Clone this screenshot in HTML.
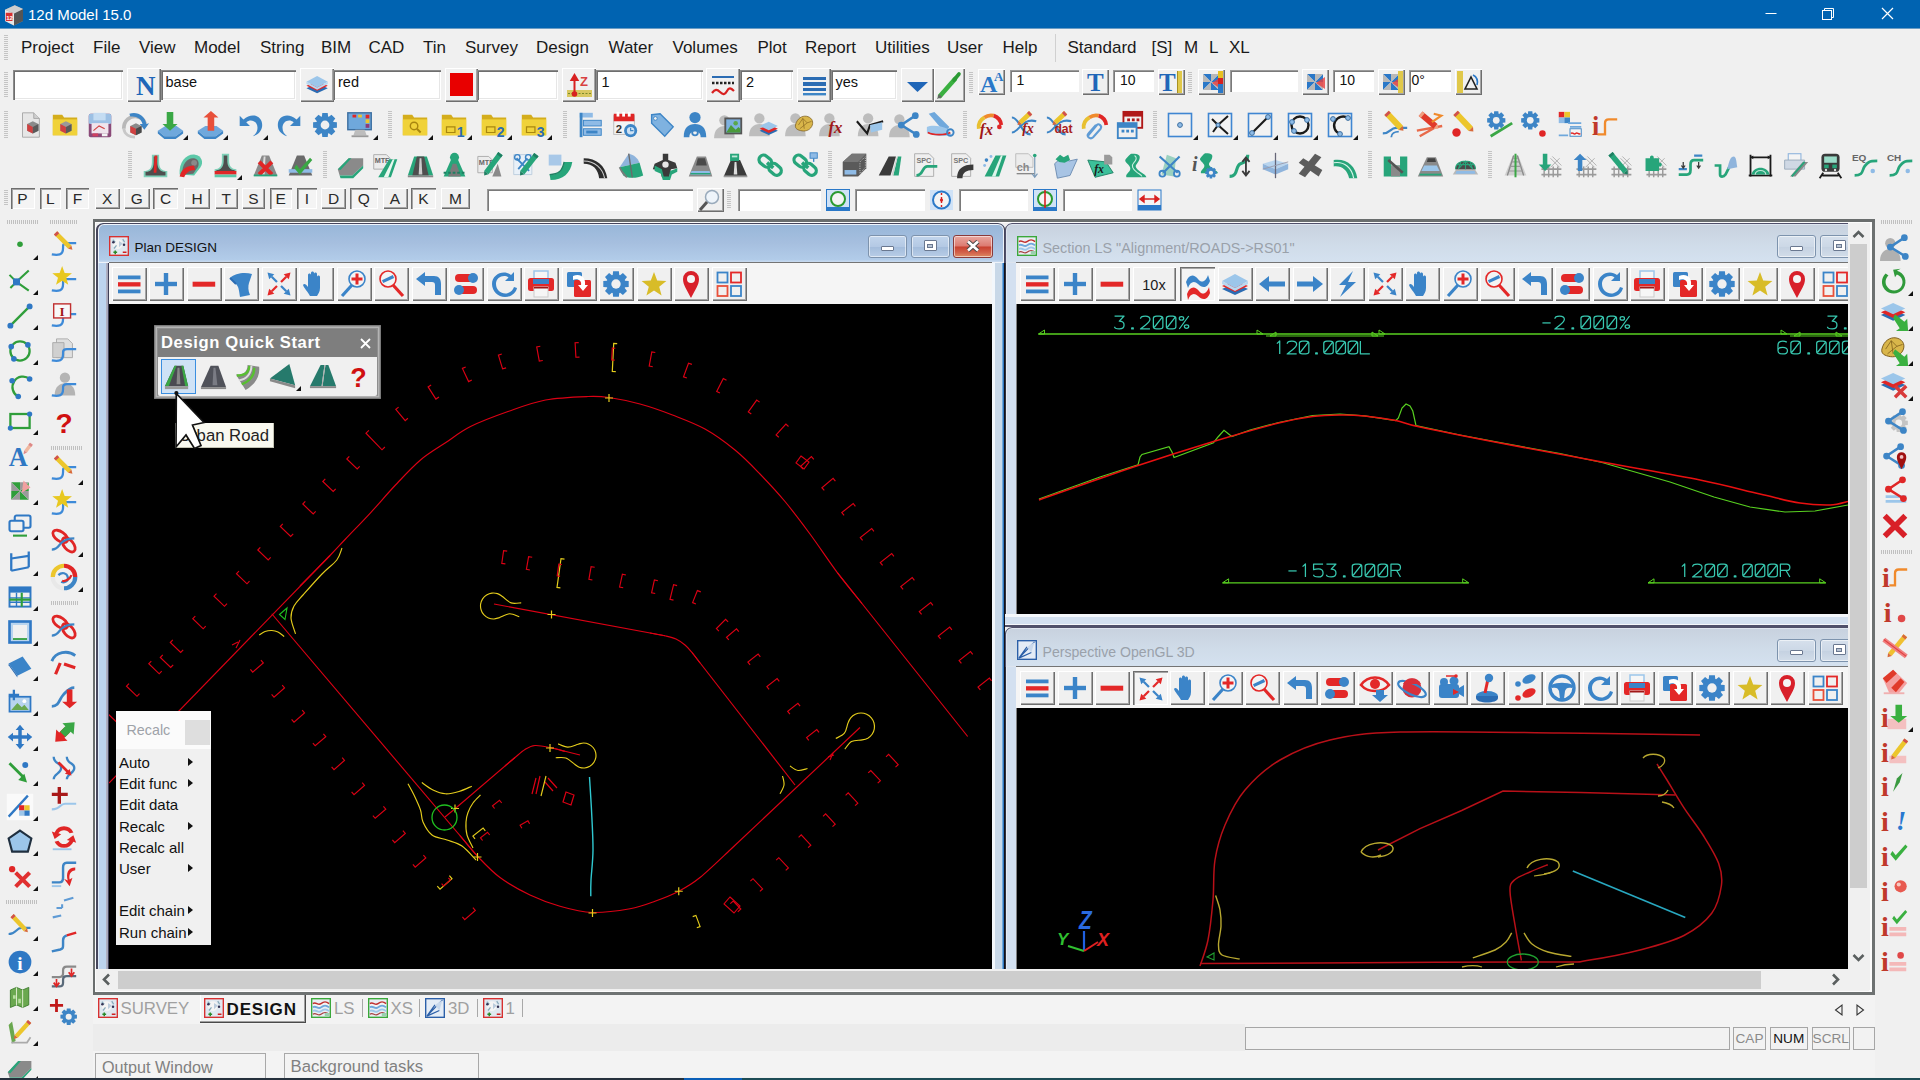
<!DOCTYPE html>
<html><head><meta charset="utf-8"><title>12d Model 15.0</title><style>
*{box-sizing:border-box}
html,body{margin:0;padding:0;overflow:hidden}
body{width:1920px;height:1080px;position:relative;overflow:hidden;background:#f0f0f0;font-family:"Liberation Sans",sans-serif;color:#111}
.a{position:absolute}
.t{position:absolute;white-space:nowrap;line-height:1}
.rb{position:absolute;background:#f0f0f0;box-shadow:inset 1px 1px #fff,inset -1px -1px #6e6e6e,inset -2px -2px #a5a5a5}
.pb{position:absolute;background:#f4f4f4;box-shadow:inset 1px 1px #6e6e6e,inset 2px 2px #a5a5a5,inset -1px -1px #fff}
.sf{position:absolute;background:#fff;box-shadow:inset 1px 1px #8a8a8a,inset 2px 2px #6e6e6e,inset -1px -1px #fff,inset -2px -2px #e6e6e6}
.sf2{position:absolute;background:#fff;box-shadow:inset 1px 1px #9a9a9a,inset 2px 2px #7a7a7a,inset -1px -1px #fff}
.gv{position:absolute;width:4px;background:repeating-linear-gradient(to bottom,#c4c4c4 0 1px,transparent 1px 2px)}
.gh{position:absolute;height:4px;background:repeating-linear-gradient(to right,#c0c0c0 0 1px,transparent 1px 2px)}
.ic{position:absolute;width:32px;height:32px;overflow:visible}
.dd{position:absolute;width:0;height:0;border-left:5px solid transparent;border-bottom:5px solid #111}
.win{position:absolute;border-radius:7px 7px 0 0;}
.wt{position:absolute;white-space:nowrap;line-height:1}
.cap{position:absolute;border-radius:3px;border:1px solid #7d93ad;box-shadow:inset 0 0 0 1px rgba(255,255,255,.55)}
svg{display:block}
</style></head><body>
<div class="a" style="left:0;top:0;width:1920px;height:28px;background:#0063b1"></div>
<div class="a" style="left:0;top:28px;width:1920px;height:1px;background:#6a9cc4"></div>
<svg class="a" style="left:2px;top:3px" width="24" height="24" viewBox="0 0 32 32"><path d="M4 9l13-6 11 5v16l-12 6-12-6z" fill="#9a9a9a" /><path d="M4 9l12 5v16L4 24z" fill="#e8e8e8" /><path d="M16 14l12-6v16l-12 6z" fill="#555" /><path d="M4 9l13-6 11 5-12 6z" fill="#cfcfcf" /><rect x="5" y="13" width="9" height="11" fill="#d83030"/><text x="5.5" y="22" font-family="Liberation Sans" font-size="8" font-weight="bold" font-style="normal" fill="#fff" text-anchor="start">12</text></svg>
<div class="t" style="left:28px;top:7px;font-size:15px;color:#fff">12d Model 15.0</div>
<svg class="a" style="left:1740px;top:0" width="180" height="29"><path d="M25.5 13.5h11" stroke="#fff" stroke-width="1" fill="none"/><rect x="82.5" y="10.5" width="9" height="9" fill="none" stroke="#fff"/><path d="M84.5 10.5v-2h9v9h-2" fill="none" stroke="#fff"/><path d="M142 8l11 11M153 8l-11 11" stroke="#fff" stroke-width="1.2"/></svg>
<div class="t" style="left:21px;top:39px;font-size:17px;color:#1a1a1a">Project</div>
<div class="t" style="left:93px;top:39px;font-size:17px;color:#1a1a1a">File</div>
<div class="t" style="left:139px;top:39px;font-size:17px;color:#1a1a1a">View</div>
<div class="t" style="left:194px;top:39px;font-size:17px;color:#1a1a1a">Model</div>
<div class="t" style="left:260px;top:39px;font-size:17px;color:#1a1a1a">String</div>
<div class="t" style="left:321px;top:39px;font-size:17px;color:#1a1a1a">BIM</div>
<div class="t" style="left:368.5px;top:39px;font-size:17px;color:#1a1a1a">CAD</div>
<div class="t" style="left:423px;top:39px;font-size:17px;color:#1a1a1a">Tin</div>
<div class="t" style="left:465px;top:39px;font-size:17px;color:#1a1a1a">Survey</div>
<div class="t" style="left:536px;top:39px;font-size:17px;color:#1a1a1a">Design</div>
<div class="t" style="left:608.5px;top:39px;font-size:17px;color:#1a1a1a">Water</div>
<div class="t" style="left:672.5px;top:39px;font-size:17px;color:#1a1a1a">Volumes</div>
<div class="t" style="left:757.5px;top:39px;font-size:17px;color:#1a1a1a">Plot</div>
<div class="t" style="left:805px;top:39px;font-size:17px;color:#1a1a1a">Report</div>
<div class="t" style="left:875px;top:39px;font-size:17px;color:#1a1a1a">Utilities</div>
<div class="t" style="left:947px;top:39px;font-size:17px;color:#1a1a1a">User</div>
<div class="t" style="left:1002.5px;top:39px;font-size:17px;color:#1a1a1a">Help</div>
<div class="t" style="left:1067.5px;top:39px;font-size:17px;color:#1a1a1a">Standard</div>
<div class="t" style="left:1151.5px;top:39px;font-size:17px;color:#1a1a1a">[S]</div>
<div class="t" style="left:1184px;top:39px;font-size:17px;color:#1a1a1a">M</div>
<div class="t" style="left:1209px;top:39px;font-size:17px;color:#1a1a1a">L</div>
<div class="t" style="left:1229px;top:39px;font-size:17px;color:#1a1a1a">XL</div>
<div class="a" style="left:1055px;top:34px;width:1px;height:28px;background:#d0d0d0"></div>
<div class="gv" style="left:4px;top:35px;height:25px"></div>
<div class="gv" style="left:4px;top:72px;height:25px"></div>
<div class="sf" style="left:13px;top:69.5px;width:110px;height:30px"></div>
<div class="rb" style="left:127px;top:68px;width:34px;height:34px"><div class="t" style="left:9px;top:5px;font-family:'Liberation Serif',serif;font-weight:bold;font-size:27px;color:#1f66b8">N</div></div>
<div class="sf" style="left:160.5px;top:69.5px;width:135px;height:30px"><div class="t" style="left:5px;top:5.0px;font-size:14.5px;color:#111">base</div></div>
<div class="rb" style="left:299.5px;top:68px;width:34px;height:34px"><svg width="34" height="34" viewBox="0 0 34 34"><g transform="translate(4,3) scale(.82)"><path d="M3 21l13-6 13 6-13 6z" fill="#2b6cb3" /><path d="M3 18l13-6 13 6-13 6z" fill="#e32828" /><path d="M3 13l13-7 13 7-13 7z" fill="#9cc6ea" /><path d="M3 13v3l13 7 13-7v-3l-13 7z" fill="#b8d8f0" /></g></svg></div>
<div class="sf" style="left:333px;top:69.5px;width:108px;height:30px"><div class="t" style="left:5px;top:5.0px;font-size:14.5px;color:#111">red</div></div>
<div class="rb" style="left:444.5px;top:68px;width:33px;height:34px"><div class="a" style="left:5px;top:5px;width:23px;height:23px;background:#e80000"></div></div>
<div class="sf" style="left:477px;top:69.5px;width:81px;height:30px"></div>
<div class="rb" style="left:562px;top:68px;width:34px;height:34px"><svg width="34" height="34" viewBox="0 0 34 34"><rect x="5" y="22" width="25" height="7" fill="#d9c860"/><path d="M6 25.5h23" stroke="#7a8a2a" stroke-width="1" stroke-dasharray="2 1.5"/><path d="M12.5 27V9M9.5 12l3-5 3 5z" stroke="#d82020" stroke-width="2" fill="#d82020"/><circle cx="12.5" cy="26" r="2.8" fill="#d82020"/><text x="18" y="18" font-family="Liberation Sans" font-weight="bold" font-size="13" fill="#d84040">Z</text></svg></div>
<div class="sf" style="left:595.5px;top:69.5px;width:107px;height:30px"><div class="t" style="left:6px;top:5.0px;font-size:14.5px;color:#111">1</div></div>
<div class="rb" style="left:706px;top:68px;width:34px;height:34px"><svg width="34" height="34" viewBox="0 0 34 34"><path d="M6 9h22" stroke="#2b6cb3" stroke-width="2"/><path d="M6 15h22" stroke="#222" stroke-width="2.4" stroke-dasharray="2.5 1.5"/><path d="M6 25c3-4 5-4 8-1s5 3 7-1 4-3 7 0" stroke="#d82020" stroke-width="2.2" fill="none"/></svg></div>
<div class="sf" style="left:740px;top:69.5px;width:53px;height:30px"><div class="t" style="left:6px;top:5.0px;font-size:14.5px;color:#111">2</div></div>
<div class="rb" style="left:797px;top:68px;width:34px;height:34px"><svg width="34" height="34" viewBox="0 0 34 34"><rect x="6" y="9" width="23" height="3" fill="#2b6cb3"/><rect x="6" y="14" width="23" height="4" fill="#2b6cb3"/><rect x="6" y="20" width="23" height="3" fill="#2b6cb3"/><rect x="6" y="25" width="23" height="2.4" fill="#3d85c6"/></svg></div>
<div class="sf" style="left:830.5px;top:69.5px;width:66.5px;height:30px"><div class="t" style="left:5px;top:5.0px;font-size:14.5px;color:#111">yes</div></div>
<div class="rb" style="left:901px;top:68px;width:33px;height:34px"><svg width="33" height="34" viewBox="0 0 33 34"><path d="M6 14h21L16.5 24z" fill="#1f66b8"/></svg></div>
<div class="rb" style="left:934px;top:68px;width:31px;height:34px"><svg width="31" height="34" viewBox="0 0 31 34"><path d="M6 28L21 11" stroke="#3ab040" stroke-width="4.5" stroke-linecap="round"/><path d="M20 12l5-6" stroke="#2a9a34" stroke-width="3.6" stroke-linecap="round"/><path d="M3 31l2-5 3 3z" fill="#666"/></svg></div>
<div class="gv" style="left:969px;top:72px;height:22px"></div>
<div class="rb" style="left:978px;top:68.5px;width:27px;height:26px"><div class="t" style="left:2px;top:3px;font-family:'Liberation Serif',serif;font-weight:bold;font-size:24px;color:#2a78c8">A</div><div class="t" style="left:16px;top:1px;font-family:'Liberation Serif',serif;font-weight:bold;font-size:13px;color:#2a78c8">A</div></div>
<div class="sf2" style="left:1009.5px;top:70px;width:69px;height:22px"><div class="t" style="left:7px;top:3.0px;font-size:14px;color:#111">1</div></div>
<div class="rb" style="left:1082px;top:68.5px;width:26.5px;height:26px"><div class="t" style="left:5px;top:1px;font-family:'Liberation Serif',serif;font-weight:bold;font-size:25px;color:#1f66b8">T</div></div>
<div class="sf2" style="left:1113px;top:70px;width:41px;height:22px"><div class="t" style="left:7px;top:3.0px;font-size:14px;color:#111">10</div></div>
<div class="rb" style="left:1158px;top:68.5px;width:27px;height:26px"><div class="t" style="left:1px;top:1px;font-family:'Liberation Serif',serif;font-weight:bold;font-size:25px;color:#1f66b8">T</div><div class="a" style="left:19px;top:2px;width:5px;height:22px;background:#e0c84a;border-left:1px solid #a89020"></div></div>
<div class="gv" style="left:1188px;top:72px;height:22px"></div>
<div class="rb" style="left:1197.5px;top:68.5px;width:27px;height:26px"><svg width="27" height="26" viewBox="0 0 27 26"><path d="M13 13L5 5h8zM13 13l8-8v8zM13 13l8 8h-8zM13 13l-8 8v-8z" fill="#2a78c8"/><path d="M13 13V5l8 0zM13 13h8v8zM13 13v8H5zM13 13H5V5z" fill="#b8b8b8"/><path d="M14 14l9-6v12z" fill="#e84040" opacity=".8"/><rect x="20" y="2" width="5" height="7" fill="#e8c020"/><rect x="20" y="9" width="5" height="6" fill="#d82020"/><rect x="20" y="15" width="5" height="9" fill="#2a78c8"/></svg></div>
<div class="sf2" style="left:1229.5px;top:70px;width:68px;height:22px"></div>
<div class="rb" style="left:1302px;top:68.5px;width:26.5px;height:26px"><svg width="27" height="26" viewBox="0 0 27 26"><path d="M13 13L5 5h8zM13 13l8-8v8zM13 13l8 8h-8zM13 13l-8 8v-8z" fill="#2a78c8"/><path d="M13 13V5l8 0zM13 13h8v8zM13 13v8H5zM13 13H5V5z" fill="#b8b8b8"/><path d="M14 14l9-6v12z" fill="#e84040" opacity=".8"/></svg></div>
<div class="sf2" style="left:1332.5px;top:70px;width:41.5px;height:22px"><div class="t" style="left:7px;top:3.0px;font-size:14px;color:#111">10</div></div>
<div class="rb" style="left:1378px;top:68.5px;width:27px;height:26px"><svg width="27" height="26" viewBox="0 0 27 26"><path d="M13 13L5 5h8zM13 13l8-8v8zM13 13l8 8h-8zM13 13l-8 8v-8z" fill="#2a78c8"/><path d="M13 13V5l8 0zM13 13h8v8zM13 13v8H5zM13 13H5V5z" fill="#b8b8b8"/><path d="M14 14l9-6v12z" fill="#e84040" opacity=".8"/><rect x="20" y="2" width="5" height="22" fill="#e0c84a"/></svg></div>
<div class="sf2" style="left:1408.5px;top:70px;width:42px;height:22px"><div class="t" style="left:3px;top:3.0px;font-size:14px;color:#111">0&deg;</div></div>
<div class="rb" style="left:1454.5px;top:68.5px;width:27px;height:26px"><svg width="27" height="26" viewBox="0 0 27 26"><rect x="2" y="2" width="6" height="22" fill="#e0c84a"/><path d="M10 20h12L16 8z" fill="none" stroke="#222" stroke-width="1.6"/><path d="M18 6c4 2 5 6 4 10" stroke="#2a78c8" stroke-width="1.6" fill="none"/></svg></div>
<svg class="ic" style="left:14.5px;top:110.0px;width:30px;height:30px" viewBox="0 0 32 32"><path d="M8 3h12l6 6v20H8z" fill="#e6e6e6" stroke="#a8a8a8" stroke-width="1" /><path d="M20 3v6h6" fill="#cfcfcf" stroke="#a8a8a8" stroke-width="1" /><path d="M13 15l6-3 6 3v7l-6 3-6-3z" fill="#8a8a8a" /><path d="M13 15l6 3v7l-6-3z" fill="#d04040" /><path d="M19 18l6-3v7l-6 3z" fill="#5a5a5a" /></svg>
<svg class="ic" style="left:49.5px;top:110.0px;width:30px;height:30px" viewBox="0 0 32 32"><g transform="translate(0,0)"><path d="M3 5h10l2 3h14v19H3z" fill="#d4ad1c" /><path d="M3 10h26v17H3z" fill="#f0d23a" /></g><path d="M11 15l6-3 6 3v7l-6 3-6-3z" fill="#9a9a9a" /><path d="M11 15l6 3v7l-6-3z" fill="#d04040" /><path d="M17 18l6-3v7l-6 3z" fill="#5a5a5a" /></svg>
<svg class="ic" style="left:84.5px;top:110.0px;width:30px;height:30px" viewBox="0 0 32 32"><rect x="4" y="4" width="24" height="25" fill="#8a4a78" rx="2"/><rect x="4" y="4" width="24" height="11" fill="#9cc0e4" rx="2"/><rect x="9" y="3" width="13" height="8" fill="#c4dcf2"/><rect x="7" y="14" width="18" height="11" fill="#f0e4ec"/><path d="M9 22l6-5 6 3" fill="none" stroke="#d04040" stroke-width="1.2" /><rect x="8" y="25" width="6" height="3" fill="#d04060"/><rect x="18" y="25" width="6" height="3" fill="#f4f4f4"/></svg>
<svg class="ic" style="left:120.0px;top:110.0px;width:30px;height:30px" viewBox="0 0 32 32"><path d="M4 20c0-9 7-14 14-13 5 1 8 4 9 8" fill="none" stroke="#b8b8b8" stroke-width="4" /><path d="M10 4c8-3 17 2 18 11l3-1-5 7-5-6 3 0c-1-6-7-9-13-8z" fill="#3d85c6" /><path d="M11 17l6-3 6 3v7l-6 3-6-3z" fill="#8a8a8a" /><path d="M11 17l6 3v7l-6-3z" fill="#d04040" /><path d="M17 20l6-3v7l-6 3z" fill="#4a4a4a" /><path d="M4 20c1 6 6 9 12 9" fill="none" stroke="#c8c8c8" stroke-width="3" /></svg>
<svg class="ic" style="left:155.0px;top:110.0px;width:30px;height:30px" viewBox="0 0 32 32"><path d="M3 22l8-5h12l7 5-8 6H10z" fill="#6fa8dc" /><path d="M3 22l7 6h12l8-6v3l-8 6H10l-7-6z" fill="#3d85c6" /><path d="M12.5 2h7v13h4.5L16 22L8 15h4.5z" fill="#3aa745" /></svg><div class="dd" style="left:183.0px;top:135.0px"></div>
<svg class="ic" style="left:195.0px;top:110.0px;width:30px;height:30px" viewBox="0 0 32 32"><path d="M3 22l8-5h12l7 5-8 6H10z" fill="#6fa8dc" /><path d="M3 22l7 6h12l8-6v3l-8 6H10l-7-6z" fill="#3d85c6" /><path d="M13.5 22h7v-14h4.5L17 1L9 8h4.5z" fill="#e8503a" /></svg><div class="dd" style="left:223.0px;top:135.0px"></div>
<svg class="ic" style="left:235.0px;top:110.0px;width:30px;height:30px" viewBox="0 0 32 32"><path d="M5 6v11h11l-4-4c5-4 12-1 12 6 0 4-2 7-5 9 7-2 10-7 10-12C29 6 18 2 9 10z" fill="#3d85c6" /></svg><div class="dd" style="left:263.0px;top:135.0px"></div>
<svg class="ic" style="left:275.0px;top:110.0px;width:30px;height:30px" viewBox="0 0 32 32"><path d="M27 6v11H16l4-4c-5-4-12-1-12 6 0 4 2 7 5 9-7-2-10-7-10-12C3 6 14 2 23 10z" fill="#3d85c6" /></svg>
<svg class="ic" style="left:310.0px;top:110.0px;width:30px;height:30px" viewBox="0 0 32 32"><path d="M25.1 12.7 L28.7 13.1 L28.7 18.9 L25.1 19.3 L24.7 20.1 L27.0 22.9 L22.9 27.0 L20.1 24.7 L19.3 25.1 L18.9 28.7 L13.1 28.7 L12.7 25.1 L11.9 24.7 L9.1 27.0 L5.0 22.9 L7.3 20.1 L6.9 19.3 L3.3 18.9 L3.3 13.1 L6.9 12.7 L7.3 11.9 L5.0 9.1 L9.1 5.0 L11.9 7.3 L12.7 6.9 L13.1 3.3 L18.9 3.3 L19.3 6.9 L20.1 7.3 L22.9 5.0 L27.0 9.1 L24.7 11.9Z" fill="#3d85c6" /><circle cx="16" cy="16" r="4.68" fill="#f0f0f0"/></svg>
<svg class="ic" style="left:345.0px;top:110.0px;width:30px;height:30px" viewBox="0 0 32 32"><rect x="3" y="3" width="25" height="18" fill="#6fa8dc" stroke="#3d6fa0" stroke-width="1.5"/><rect x="22" y="5" width="4" height="4" fill="#e02626"/><rect x="22" y="10" width="4" height="4" fill="#ecc62c"/><rect x="22" y="15" width="4" height="4" fill="#8e3a78"/><rect x="8" y="5" width="4" height="3" fill="#e02626"/><rect x="14" y="5" width="4" height="3" fill="#ecc62c"/><path d="M11 21h10l2 6H9z" fill="#bdbdbd" /><rect x="7" y="27" width="18" height="2" fill="#9a9a9a"/></svg><div class="dd" style="left:373.0px;top:135.0px"></div>
<svg class="ic" style="left:400.0px;top:110.0px;width:30px;height:30px" viewBox="0 0 32 32"><g transform="translate(0,0)"><path d="M3 5h10l2 3h14v19H3z" fill="#d4ad1c" /><path d="M3 10h26v17H3z" fill="#f0d23a" /></g><circle cx="15" cy="17" r="4" fill="none" stroke="#a8860f" stroke-width="1.5"/><path d="M18 20l4 4" fill="none" stroke="#a8860f" stroke-width="2" /></svg><div class="dd" style="left:428.0px;top:135.0px"></div>
<svg class="ic" style="left:439.0px;top:110.0px;width:30px;height:30px" viewBox="0 0 32 32"><g transform="translate(0,0)"><path d="M3 5h10l2 3h14v19H3z" fill="#d4ad1c" /><path d="M3 10h26v17H3z" fill="#f0d23a" /></g><path d="M8 18h9v6H8z" fill="none" stroke="#a8860f" stroke-width="1.3" /><text x="19" y="29" font-family="Liberation Sans" font-size="15" font-weight="bold" font-style="normal" fill="#2b6cb3" text-anchor="start">1</text></svg><div class="dd" style="left:467.0px;top:135.0px"></div>
<svg class="ic" style="left:479.0px;top:110.0px;width:30px;height:30px" viewBox="0 0 32 32"><g transform="translate(0,0)"><path d="M3 5h10l2 3h14v19H3z" fill="#d4ad1c" /><path d="M3 10h26v17H3z" fill="#f0d23a" /></g><path d="M8 18h9v6H8z" fill="none" stroke="#a8860f" stroke-width="1.3" /><text x="19" y="29" font-family="Liberation Sans" font-size="15" font-weight="bold" font-style="normal" fill="#2b6cb3" text-anchor="start">2</text></svg><div class="dd" style="left:507.0px;top:135.0px"></div>
<svg class="ic" style="left:519.0px;top:110.0px;width:30px;height:30px" viewBox="0 0 32 32"><g transform="translate(0,0)"><path d="M3 5h10l2 3h14v19H3z" fill="#d4ad1c" /><path d="M3 10h26v17H3z" fill="#f0d23a" /></g><path d="M8 18h9v6H8z" fill="none" stroke="#a8860f" stroke-width="1.3" /><text x="19" y="29" font-family="Liberation Sans" font-size="15" font-weight="bold" font-style="normal" fill="#2b6cb3" text-anchor="start">3</text></svg><div class="dd" style="left:547.0px;top:135.0px"></div>
<svg class="ic" style="left:575.0px;top:110.0px;width:30px;height:30px" viewBox="0 0 32 32"><rect x="5" y="3" width="14" height="5" fill="#8fbbe6"/><rect x="5" y="3" width="3" height="26" fill="#3d85c6"/><rect x="9" y="11" width="19" height="6" fill="#8fbbe6" stroke="#3d85c6" stroke-width="1"/><rect x="9" y="20" width="19" height="7" fill="#8fbbe6" stroke="#3d85c6" stroke-width="1"/><rect x="12" y="22" width="12" height="3" fill="#3d85c6"/></svg>
<svg class="ic" style="left:610.0px;top:110.0px;width:30px;height:30px" viewBox="0 0 32 32"><rect x="4" y="6" width="22" height="20" fill="#f4f4f4" stroke="#bbb" stroke-width="1"/><rect x="4" y="4" width="22" height="8" fill="#e02626"/><rect x="7" y="2" width="3" height="5" fill="#fff"/><rect x="13" y="2" width="3" height="5" fill="#fff"/><rect x="19" y="2" width="3" height="5" fill="#fff"/><text x="6" y="24" font-family="Liberation Sans" font-size="12" font-weight="bold" font-style="normal" fill="#333" text-anchor="start">2</text><circle cx="22" cy="22" r="7" fill="#3d85c6"/><circle cx="22" cy="22" r="4" fill="#cfe2f3"/><path d="M22 19v3h3" fill="none" stroke="#3d85c6" stroke-width="1.2" /></svg>
<svg class="ic" style="left:645.5px;top:110.0px;width:30px;height:30px" viewBox="0 0 32 32"><path d="M6 5l9-1 14 14-9 10L6 14z" fill="#7fb2e0" stroke="#3d85c6" stroke-width="1.5" /><circle cx="10" cy="9" r="2" fill="#f0f0f0" stroke="#3d85c6" stroke-width="1"/></svg>
<svg class="ic" style="left:680.0px;top:110.0px;width:30px;height:30px" viewBox="0 0 32 32"><circle cx="16" cy="8" r="6" fill="#3d85c6"/><path d="M4 29c0-10 5-14 12-14s12 4 12 14h-6c0-4-2-6-6-6s-6 2-6 6z" fill="#3d85c6" /><circle cx="16" cy="24" r="3" fill="none" stroke="#3d85c6" stroke-width="2"/></svg>
<svg class="ic" style="left:715.0px;top:110.0px;width:30px;height:30px" viewBox="0 0 32 32"><g transform="translate(-5,2)"><circle cx="15" cy="9" r="5.5" fill="#bdbdbd"/><path d="M4 28c0-9 5-13 11-13s11 4 11 13z" fill="#bdbdbd" /></g><rect x="10" y="8" width="19" height="18" fill="#555"/><rect x="12" y="10" width="15" height="14" fill="#7fb2e0"/><path d="M12 24l5-8 5 5 3-3 2 2v4z" fill="#4a9a3a" /><circle cx="22" cy="14" r="2.4" fill="#5aa84a"/></svg>
<svg class="ic" style="left:750.0px;top:110.0px;width:30px;height:30px" viewBox="0 0 32 32"><g transform="translate(-5,0)"><circle cx="15" cy="9" r="5.5" fill="#bdbdbd"/><path d="M4 28c0-9 5-13 11-13s11 4 11 13z" fill="#bdbdbd" /></g><g transform="translate(8,8) scale(.75)"><g transform="translate(0,0)"><path d="M3 19l13-6 13 6-13 6z" fill="#2b6cb3" /><path d="M3 16l13-6 13 6-13 6z" fill="#e02626" /><path d="M3 12l13-6 13 6-13 6z" fill="#9cc6ea" /></g></g></svg>
<svg class="ic" style="left:786.0px;top:110.0px;width:30px;height:30px" viewBox="0 0 32 32"><g transform="translate(-5,0)"><circle cx="15" cy="9" r="5.5" fill="#bdbdbd"/><path d="M4 28c0-9 5-13 11-13s11 4 11 13z" fill="#bdbdbd" /></g><g transform="translate(7,2) scale(.78)"><g transform="translate(0,0)"><path d="M4 18c2-9 9-13 15-12s10 6 8 12-8 9-14 8-10-3-9-8z" fill="#d9b64a" stroke="#7a5a1a" stroke-width="1" /><path d="M8 18l6-9 6 6 6-2M14 9l2 14M20 15l-10 8" fill="none" stroke="#7a5a1a" stroke-width="0.8" /></g></g></svg>
<svg class="ic" style="left:820.0px;top:110.0px;width:30px;height:30px" viewBox="0 0 32 32"><g transform="translate(-5,0)"><circle cx="15" cy="9" r="5.5" fill="#bdbdbd"/><path d="M4 28c0-9 5-13 11-13s11 4 11 13z" fill="#bdbdbd" /></g><text x="9" y="25" font-family="Liberation Serif" font-size="18" font-weight="bold" font-style="italic" fill="#a01818" text-anchor="start">fx</text></svg>
<svg class="ic" style="left:855.0px;top:110.0px;width:30px;height:30px" viewBox="0 0 32 32"><g transform="translate(-1,0)"><circle cx="15" cy="9" r="5.5" fill="#bdbdbd"/><path d="M4 28c0-9 5-13 11-13s11 4 11 13z" fill="#bdbdbd" /></g><path d="M2 12l11 13 3-9 14-4" fill="none" stroke="#1a1a1a" stroke-width="2.2" /><path d="M16 16l13-3v8l-12 3z" fill="#9cc6ea" /></svg>
<svg class="ic" style="left:890.0px;top:110.0px;width:30px;height:30px" viewBox="0 0 32 32"><g transform="translate(-5,1)"><circle cx="15" cy="9" r="5.5" fill="#bdbdbd"/><path d="M4 28c0-9 5-13 11-13s11 4 11 13z" fill="#bdbdbd" /></g><g transform="translate(3,0)"><path d="M24 6L9 16L25 26" fill="none" stroke="#3d85c6" stroke-width="2.6" /><circle cx="24" cy="6" r="3.6" fill="#3d85c6"/><circle cx="9" cy="16" r="3.6" fill="#3d85c6"/><circle cx="25" cy="26" r="3.6" fill="#3d85c6"/></g></svg>
<svg class="ic" style="left:925.0px;top:110.0px;width:30px;height:30px" viewBox="0 0 32 32"><path d="M4 4l6-2 16 16-5 6z" fill="#6fa8dc" /><path d="M2 18c4-2 14-2 22 2l4 6c-6 3-20 2-26-2z" fill="#9cc6ea" /><path d="M3 24c6 3 18 3 24 0" fill="none" stroke="#e02626" stroke-width="2" /><circle cx="27" cy="24" r="3.5" fill="none" stroke="#3d85c6" stroke-width="2"/></svg>
<svg class="ic" style="left:975.0px;top:110.0px;width:30px;height:30px" viewBox="0 0 32 32"><path d="M4 20A12 12 0 0 1 10 8" fill="none" stroke="#e8c030" stroke-width="4" /><path d="M10 8A12 12 0 0 1 20 6" fill="none" stroke="#f08a2c" stroke-width="4" /><path d="M20 6A12 12 0 0 1 28 16" fill="none" stroke="#e02626" stroke-width="4" /><text x="5" y="27" font-family="Liberation Serif" font-size="17" font-weight="bold" font-style="italic" fill="#a01818" text-anchor="start">fx</text><circle cx="26" cy="18" r="2.5" fill="#e02626"/></svg>
<svg class="ic" style="left:1010.0px;top:110.0px;width:30px;height:30px" viewBox="0 0 32 32"><path d="M2 8c8 0 10 18 20 18M2 24c8 0 10-16 26-12" fill="none" stroke="#3d85c6" stroke-width="2.2" /><path d="M22 3L10.9 13.3" stroke="#ecc62c" stroke-width="5" stroke-linecap="butt"/><path d="M22 3L19.8 5.0" stroke="#d05050" stroke-width="5"/><path d="M9.2 11.4L8 16L12.6 15.1Z" fill="#d86a3a" /><text x="13" y="25" font-family="Liberation Serif" font-size="15" font-weight="bold" font-style="italic" fill="#a01818" text-anchor="start">fx</text></svg>
<svg class="ic" style="left:1045.0px;top:110.0px;width:30px;height:30px" viewBox="0 0 32 32"><path d="M2 8c8 0 10 18 20 18M2 24c8 0 10-16 26-12" fill="none" stroke="#3d85c6" stroke-width="2.2" /><path d="M22 3L10.9 13.3" stroke="#ecc62c" stroke-width="5" stroke-linecap="butt"/><path d="M22 3L19.8 5.0" stroke="#d05050" stroke-width="5"/><path d="M9.2 11.4L8 16L12.6 15.1Z" fill="#d86a3a" /><text x="10" y="25" font-family="Liberation Sans" font-size="13" font-weight="bold" font-style="normal" fill="#a82020" text-anchor="start">dat</text></svg>
<svg class="ic" style="left:1080.0px;top:110.0px;width:30px;height:30px" viewBox="0 0 32 32"><path d="M4 20A12 12 0 0 1 10 8" fill="none" stroke="#e8c030" stroke-width="4" /><path d="M10 8A12 12 0 0 1 20 6" fill="none" stroke="#f08a2c" stroke-width="4" /><path d="M20 6A12 12 0 0 1 28 16" fill="none" stroke="#e02626" stroke-width="4" /><path d="M8 28l10-12c2-2 6 1 4 4l-8 9c-3 3-8-1-5-4l8-9" fill="none" stroke="#5f9bd5" stroke-width="2.2" /></svg>
<svg class="ic" style="left:1115.0px;top:110.0px;width:30px;height:30px" viewBox="0 0 32 32"><rect x="9" y="2" width="20" height="17" fill="#f0f0f0" stroke="#b01818" stroke-width="2"/><rect x="9" y="2" width="20" height="5" fill="#b01818"/><rect x="3" y="14" width="20" height="16" fill="#f0f0f0" stroke="#3d85c6" stroke-width="2"/><rect x="3" y="14" width="20" height="5" fill="#3d85c6"/><rect x="7" y="21" width="3" height="3" fill="#3d85c6"/><rect x="12" y="21" width="3" height="3" fill="#3d85c6"/><rect x="17" y="21" width="3" height="3" fill="#3d85c6"/><rect x="13" y="9" width="3" height="3" fill="#b01818"/><rect x="18" y="9" width="3" height="3" fill="#b01818"/><rect x="23" y="9" width="3" height="3" fill="#b01818"/></svg>
<svg class="ic" style="left:1164.0px;top:109.0px;width:32px;height:32px" viewBox="0 0 32 32"><rect x="4.5" y="4.5" width="23" height="23" fill="#f2f2f2" stroke="#3f86d2" stroke-width="1.6"/><circle cx="16" cy="16" r="2.4" fill="#8fbbe6" stroke="#3d6fa0" stroke-width="1"/></svg><div class="dd" style="left:1193.0px;top:135.0px"></div>
<svg class="ic" style="left:1204.0px;top:109.0px;width:32px;height:32px" viewBox="0 0 32 32"><rect x="4.5" y="4.5" width="23" height="23" fill="#f2f2f2" stroke="#3f86d2" stroke-width="1.6"/><path d="M8 10l6 6M14 16L24 7M14 16l10 9M9 23l5-7" fill="none" stroke="#1a1a1a" stroke-width="2" /><circle cx="14" cy="16" r="2" fill="#8fbbe6" stroke="#3d6fa0" stroke-width="1"/></svg><div class="dd" style="left:1233.0px;top:135.0px"></div>
<svg class="ic" style="left:1244.0px;top:109.0px;width:32px;height:32px" viewBox="0 0 32 32"><rect x="4.5" y="4.5" width="23" height="23" fill="#f2f2f2" stroke="#3f86d2" stroke-width="1.6"/><path d="M8 24L24 8" fill="none" stroke="#1a1a1a" stroke-width="2.2" /><circle cx="8" cy="24" r="2.4" fill="#8fbbe6" stroke="#3d6fa0" stroke-width="1"/><circle cx="24" cy="8" r="2.4" fill="#8fbbe6" stroke="#3d6fa0" stroke-width="1"/></svg><div class="dd" style="left:1273.0px;top:135.0px"></div>
<svg class="ic" style="left:1284.0px;top:109.0px;width:32px;height:32px" viewBox="0 0 32 32"><rect x="4.5" y="4.5" width="23" height="23" fill="#f2f2f2" stroke="#3f86d2" stroke-width="1.6"/><circle cx="16" cy="16" r="8.5" fill="none" stroke="#1a1a1a" stroke-width="2.4"/><circle cx="8" cy="13" r="2.4" fill="#8fbbe6" stroke="#3d6fa0" stroke-width="1"/><circle cx="23" cy="11" r="2.4" fill="#8fbbe6" stroke="#3d6fa0" stroke-width="1"/><circle cx="10" cy="22" r="2.4" fill="#8fbbe6" stroke="#3d6fa0" stroke-width="1"/></svg><div class="dd" style="left:1313.0px;top:135.0px"></div>
<svg class="ic" style="left:1324.0px;top:109.0px;width:32px;height:32px" viewBox="0 0 32 32"><rect x="4.5" y="4.5" width="23" height="23" fill="#f2f2f2" stroke="#3f86d2" stroke-width="1.6"/><path d="M24 9A9 9 0 1 0 16 25" fill="none" stroke="#1a1a1a" stroke-width="2.4" /><circle cx="24" cy="9" r="2.4" fill="#8fbbe6" stroke="#3d6fa0" stroke-width="1"/><circle cx="9" cy="10" r="2.4" fill="#8fbbe6" stroke="#3d6fa0" stroke-width="1"/><circle cx="16" cy="25" r="2.4" fill="#8fbbe6" stroke="#3d6fa0" stroke-width="1"/></svg><div class="dd" style="left:1353.0px;top:135.0px"></div>
<svg class="ic" style="left:1380.0px;top:110.0px;width:30px;height:30px" viewBox="0 0 32 32"><path d="M3 25c8 0 8-6 14-6h12" fill="none" stroke="#3d85c6" stroke-width="2.4" /><path d="M12 29c0-4 4-6 8-6" fill="none" stroke="#3d85c6" stroke-width="2" /><path d="M7 3L22.2 19.1" stroke="#ecc62c" stroke-width="6.5" stroke-linecap="butt"/><path d="M7 3L9.1 5.2" stroke="#d05050" stroke-width="6.5"/><path d="M19.9 21.3L25 22L24.6 16.9Z" fill="#d86a3a" /></svg>
<svg class="ic" style="left:1415.0px;top:110.0px;width:30px;height:30px" viewBox="0 0 32 32"><path d="M2 22l27-5M5 28l16-9" fill="none" stroke="#e86a4a" stroke-width="2.6" /><path d="M6 4L21.9 17.4" stroke="#e03a2a" stroke-width="6.5" stroke-linecap="butt"/><path d="M6 4L8.3 5.9" stroke="#f0a080" stroke-width="6.5"/><path d="M19.8 19.9L25 20L24.0 14.9Z" fill="#f0a080" /><path d="M20 4l8 2-10 7" fill="none" stroke="#f08a2c" stroke-width="2.4" /></svg>
<svg class="ic" style="left:1449.0px;top:110.0px;width:30px;height:30px" viewBox="0 0 32 32"><path d="M7 3L23.2 20.1" stroke="#ecc62c" stroke-width="6.5" stroke-linecap="butt"/><path d="M7 3L9.1 5.2" stroke="#d05050" stroke-width="6.5"/><path d="M20.9 22.3L26 23L25.6 17.9Z" fill="#d86a3a" /><circle cx="8" cy="24" r="4.5" fill="#e02626"/></svg>
<svg class="ic" style="left:1485.0px;top:110.0px;width:30px;height:30px" viewBox="0 0 32 32"><path d="M19.0 8.5 L21.7 8.8 L21.7 13.2 L19.0 13.5 L18.7 14.2 L20.5 16.3 L17.3 19.5 L15.2 17.7 L14.5 18.0 L14.2 20.7 L9.8 20.7 L9.5 18.0 L8.8 17.7 L6.7 19.5 L3.5 16.3 L5.3 14.2 L5.0 13.5 L2.3 13.2 L2.3 8.8 L5.0 8.5 L5.3 7.8 L3.5 5.7 L6.7 2.5 L8.8 4.3 L9.5 4.0 L9.8 1.3 L14.2 1.3 L14.5 4.0 L15.2 4.3 L17.3 2.5 L20.5 5.7 L18.7 7.8Z" fill="#3d85c6" /><circle cx="12" cy="11" r="3.5999999999999996" fill="#f0f0f0"/><path d="M6 28L29 14" fill="none" stroke="#3aa745" stroke-width="3" /></svg>
<svg class="ic" style="left:1519.0px;top:110.0px;width:30px;height:30px" viewBox="0 0 32 32"><path d="M19.0 8.5 L21.7 8.8 L21.7 13.2 L19.0 13.5 L18.7 14.2 L20.5 16.3 L17.3 19.5 L15.2 17.7 L14.5 18.0 L14.2 20.7 L9.8 20.7 L9.5 18.0 L8.8 17.7 L6.7 19.5 L3.5 16.3 L5.3 14.2 L5.0 13.5 L2.3 13.2 L2.3 8.8 L5.0 8.5 L5.3 7.8 L3.5 5.7 L6.7 2.5 L8.8 4.3 L9.5 4.0 L9.8 1.3 L14.2 1.3 L14.5 4.0 L15.2 4.3 L17.3 2.5 L20.5 5.7 L18.7 7.8Z" fill="#3d85c6" /><circle cx="12" cy="11" r="3.5999999999999996" fill="#f0f0f0"/><circle cx="25" cy="25" r="3.5" fill="#e02626"/></svg>
<svg class="ic" style="left:1555.0px;top:110.0px;width:30px;height:30px" viewBox="0 0 32 32"><rect x="4" y="2" width="6" height="6" fill="#e02626"/><rect x="10" y="2" width="6" height="6" fill="#ecc62c"/><rect x="4" y="8" width="6" height="6" fill="#8fbbe6"/><rect x="10" y="8" width="6" height="6" fill="#3d85c6"/><path d="M14 14h14M16 18h12M4 27h10" fill="none" stroke="#6fa8dc" stroke-width="2" /><rect x="16" y="20" width="12" height="8" fill="#f4f4f4" stroke="#3d85c6" stroke-width="1"/><path d="M17 25c2-2 3 2 5 0s3 2 5 0" fill="none" stroke="#e02626" stroke-width="1.5" /></svg>
<svg class="ic" style="left:1590.0px;top:110.0px;width:30px;height:30px" viewBox="0 0 32 32"><text x="2" y="27" font-family="Liberation Serif" font-size="28" font-weight="bold" font-style="normal" fill="#c0392b" text-anchor="start">i</text><path d="M8 26h8v-12c0-3 2-4 4-4h9" fill="none" stroke="#f08a2c" stroke-width="2.5" /></svg>
<div class="gv" style="left:4px;top:111px;height:27px"></div>
<div class="gv" style="left:388px;top:111px;height:27px"></div>
<div class="gv" style="left:563px;top:111px;height:27px"></div>
<div class="gv" style="left:963px;top:111px;height:27px"></div>
<div class="gv" style="left:1153px;top:111px;height:27px"></div>
<div class="gv" style="left:1368px;top:111px;height:27px"></div>
<svg class="ic" style="left:141.0px;top:150.5px;width:29px;height:29px" viewBox="0 0 32 32"><path d="M3 22c6 0 9-3 9-10V4h8v8c0 7 3 10 9 10v7H3z" fill="#7fd0b8" /><path d="M5 23c6 0 9-4 9-11V6h4v6c0 7 3 11 9 11v4H5z" fill="#4e4e4e" /><path d="M15 5h3l-1 19h-3z" fill="#e02626" /></svg>
<svg class="ic" style="left:175.5px;top:150.5px;width:29px;height:29px" viewBox="0 0 32 32"><path d="M4 26C3 12 11 3 21 4c7 1 10 8 6 14l-7 9z" fill="#5cc8a8" /><path d="M7 26C6 14 13 7 20 8c5 1 6 6 4 10l-5 7z" fill="#6a6a6a" /><circle cx="20" cy="13" r="3.2" fill="#8a8a8a"/><path d="M4 28c2-8 8-12 16-12l1 5c-6 0-10 3-12 8z" fill="#e02626" /></svg>
<svg class="ic" style="left:210.5px;top:150.5px;width:29px;height:29px" viewBox="0 0 32 32"><path d="M4 20c5 0 8-3 8-9V3h8v8c0 6 3 9 8 9v3H4z" fill="#7fd0b8" /><path d="M6 21c5 0 8-4 8-10V5h4v6c0 6 3 10 8 10v1H6z" fill="#4e4e4e" /><rect x="4" y="22" width="24" height="4" fill="#e02626"/><rect x="4" y="26" width="24" height="3" fill="#5cc8a8"/></svg><div class="dd" style="left:237.0px;top:175.0px"></div>
<svg class="ic" style="left:251.0px;top:150.5px;width:29px;height:29px" viewBox="0 0 32 32"><path d="M3 27L12 5L20 5L29 27Z" fill="#8a8a8a" /><path d="M14 6l-2 20h3l1-20z" fill="#ddd" /><path d="M9 12L23 26M23 12L9 26" fill="none" stroke="#e02626" stroke-width="4.5" /><path d="M3 27h26" fill="none" stroke="#27a57a" stroke-width="2" /></svg>
<svg class="ic" style="left:285.5px;top:150.5px;width:29px;height:29px" viewBox="0 0 32 32"><path d="M3 27L12 5L20 5L29 27Z" fill="#6a6a6a" /><path d="M3 20h26v4H3z" fill="#8fbbe6" /><path transform="translate(9,10) scale(1.25)" d="M0 7l5 6L16 0l-2-2L5 8 2 4z" fill="#3aa745"/></svg>
<svg class="ic" style="left:335.5px;top:150.5px;width:29px;height:29px" viewBox="0 0 32 32"><path d="M2 20L14 8h16v8L18 27H4z" fill="#8a8a8a" /><path d="M2 20L14 8h3L5 21z" fill="#27a57a" /><path d="M4 27h14l12-11v3L19 30H5z" fill="#27a57a" /></svg>
<svg class="ic" style="left:370.5px;top:150.5px;width:29px;height:29px" viewBox="0 0 32 32"><path d="M3 4h14l4 4v12H3z" fill="#ececec" stroke="#aaa" stroke-width="1" /><text x="4" y="13" font-family="Liberation Sans" font-size="8" font-weight="bold" font-style="normal" fill="#666" text-anchor="start">MTF</text><path d="M8 29L20 9h9L22 29z" fill="#27a57a" /><path d="M14 29L24 9h2L19 29z" fill="#e8f8f0" /></svg>
<svg class="ic" style="left:405.5px;top:150.5px;width:29px;height:29px" viewBox="0 0 32 32"><path d="M2 27L9 6L23 6L30 27Z" fill="#27a57a" /><path d="M7 27L12 6L20 6L25 27Z" fill="#4e4e4e" /><path d="M15 8h2l1 18h-4z" fill="#ccc" /><path d="M2 27h28v2H2z" fill="#888" /></svg>
<svg class="ic" style="left:439.5px;top:150.5px;width:29px;height:29px" viewBox="0 0 32 32"><path d="M4 28L12 10h8l8 18z" fill="#27a57a" /><circle cx="16" cy="7" r="5" fill="#27a57a"/><path d="M9 28l5-14h4l5 14z" fill="#7a7a7a" /><path d="M4 24h24" fill="none" stroke="#1f7f62" stroke-width="2" stroke-dasharray="3 2"/></svg>
<svg class="ic" style="left:475.5px;top:150.5px;width:29px;height:29px" viewBox="0 0 32 32"><path d="M2 6h12l4 4v14H2z" fill="#ececec" stroke="#aaa" stroke-width="1" /><text x="3" y="15" font-family="Liberation Sans" font-size="8" font-weight="bold" font-style="normal" fill="#666" text-anchor="start">MTF</text><path d="M27 3L11.4 23.8" stroke="#27a57a" stroke-width="6" stroke-linecap="butt"/><path d="M27 3L25.2 5.4" stroke="#1f7f62" stroke-width="6"/><path d="M9.0 22.0L9 27L13.8 25.6Z" fill="#1f7f62" /><path d="M18 28l6-14 4 14z" fill="#8a8a8a" /></svg>
<svg class="ic" style="left:510.5px;top:150.5px;width:29px;height:29px" viewBox="0 0 32 32"><path d="M3 4h20v22H3z" fill="#e8f0f8" stroke="#bcd" stroke-width="1" /><path d="M6 8l14 14M18 8L8 20" fill="none" stroke="#3d85c6" stroke-width="2" /><circle cx="7" cy="7" r="3" fill="none" stroke="#3d85c6" stroke-width="1.6"/><circle cx="19" cy="7" r="3" fill="none" stroke="#3d85c6" stroke-width="1.6"/><path d="M28 4L12.5 23.8" stroke="#27a57a" stroke-width="6" stroke-linecap="butt"/><path d="M28 4L26.2 6.4" stroke="#1f7f62" stroke-width="6"/><path d="M10.1 22.0L10 27L14.8 25.7Z" fill="#1f7f62" /></svg>
<svg class="ic" style="left:545.5px;top:150.5px;width:29px;height:29px" viewBox="0 0 32 32"><rect x="3" y="4" width="14" height="12" fill="#a8c8e8"/><path d="M4 26c10 0 14-4 16-14h9c-2 12-10 20-24 20z" fill="#27a57a" /><path d="M4 26c10 0 14-4 16-14" fill="none" stroke="#1f7f62" stroke-width="1.5" /></svg>
<svg class="ic" style="left:580.5px;top:150.5px;width:29px;height:29px" viewBox="0 0 32 32"><path d="M3 8c14 0 24 8 26 22h-9C19 20 13 14 3 14z" fill="#2c2c2c" /><path d="M3 11c12 0 21 8 23 19" fill="none" stroke="#cfcfcf" stroke-width="1.2" /></svg>
<svg class="ic" style="left:615.5px;top:150.5px;width:29px;height:29px" viewBox="0 0 32 32"><path d="M4 18L14 3c6 1 10 5 12 10z" fill="#8fb4dc" /><path d="M4 18l22-5 4 14c-8 4-18 3-22 0z" fill="#27a57a" /><path d="M14 3l4 26" fill="none" stroke="#6a6a6a" stroke-width="1.5" /><path d="M4 18c2 6 6 9 8 11" fill="none" stroke="#7a7a7a" stroke-width="2" /></svg>
<svg class="ic" style="left:650.5px;top:150.5px;width:29px;height:29px" viewBox="0 0 32 32"><path d="M13 3h6v7l8 3 2 6-7 1-2 9h-8l-2-8-8-1 2-6 9-4z" fill="#3a3a3a" /><path d="M4 16l8 4 2 8h6l1-6 8-3v4l-6 3-2 6h-8l-2-7-7-3z" fill="#27a57a" /><circle cx="16" cy="15" r="3.5" fill="#e8e8e8"/></svg>
<svg class="ic" style="left:685.5px;top:150.5px;width:29px;height:29px" viewBox="0 0 32 32"><path d="M3 28L12 6L22 6L29 28Z" fill="#8a8a8a" /><path d="M13 8h8l2 8H11z" fill="#4a4a4a" /><path d="M6 22h20l1 4H5z" fill="#8fbbe6" /><path d="M5 25h22" fill="none" stroke="#27a57a" stroke-width="1.5" /></svg>
<svg class="ic" style="left:720.5px;top:150.5px;width:29px;height:29px" viewBox="0 0 32 32"><path d="M3 28L11 10L21 10L29 28Z" fill="#3a3a3a" /><rect x="10" y="3" width="10" height="8" fill="#27a57a"/><path d="M15 12h2l1 14h-4z" fill="#ddd" /><path d="M3 28h26" fill="none" stroke="#999" stroke-width="2" /><rect x="12" y="5" width="6" height="2" fill="#bfe8d8"/></svg>
<svg class="ic" style="left:755.5px;top:150.5px;width:29px;height:29px" viewBox="0 0 32 32"><g transform="rotate(40 16 16)"><rect x="1" y="11" width="15" height="10" fill="none" rx="5" stroke="#27a57a" stroke-width="3.6"/><rect x="15" y="11" width="15" height="10" fill="none" rx="5" stroke="#27a57a" stroke-width="3.6"/><rect x="11" y="14" width="9" height="4" fill="#27a57a"/></g></svg>
<svg class="ic" style="left:790.5px;top:150.5px;width:29px;height:29px" viewBox="0 0 32 32"><g transform="rotate(40 16 16)"><rect x="1" y="11" width="15" height="10" fill="none" rx="5" stroke="#27a57a" stroke-width="3.6"/><rect x="15" y="11" width="15" height="10" fill="none" rx="5" stroke="#27a57a" stroke-width="3.6"/><rect x="11" y="14" width="9" height="4" fill="#27a57a"/></g><rect x="21" y="2" width="8" height="6" fill="#8fbbe6" stroke="#3d85c6" stroke-width="1"/><path d="M25 8v4" fill="none" stroke="#3d85c6" stroke-width="1.5" /></svg>
<svg class="ic" style="left:839.5px;top:150.5px;width:29px;height:29px" viewBox="0 0 32 32"><path d="M3 12L13 3h16v16L20 28H3z" fill="#5a5a5a" /><path d="M3 12l10-9h16L20 12z" fill="#777" /><path d="M5 21h13v5H5z" fill="#8fbbe6" /><path d="M22 12l6-6v12l-6 7z" fill="none" stroke="#ddd" stroke-width="1" stroke-dasharray="1 1.5"/></svg>
<svg class="ic" style="left:875.5px;top:150.5px;width:29px;height:29px" viewBox="0 0 32 32"><path d="M3 27L14 6h8L16 27z" fill="#3a3a3a" /><path d="M19 27l5-21h4l-3 21z" fill="#27a57a" /><path d="M17 27l6-21h1l-5 21z" fill="#cfcfcf" /></svg>
<svg class="ic" style="left:910.5px;top:150.5px;width:29px;height:29px" viewBox="0 0 32 32"><path d="M4 3h16l5 5v20H4z" fill="#efefef" stroke="#aaa" stroke-width="1" /><text x="6" y="13" font-family="Liberation Sans" font-size="8" font-weight="bold" font-style="normal" fill="#777" text-anchor="start">SPC</text><path d="M6 27c8 0 6-10 12-10h11" fill="none" stroke="#27a57a" stroke-width="3" /></svg>
<svg class="ic" style="left:947.5px;top:150.5px;width:29px;height:29px" viewBox="0 0 32 32"><path d="M4 3h16l5 5v20H4z" fill="#efefef" stroke="#aaa" stroke-width="1" /><text x="6" y="13" font-family="Liberation Sans" font-size="8" font-weight="bold" font-style="normal" fill="#777" text-anchor="start">SPC</text><path d="M10 30c0-10 6-15 18-15v6c-8 0-12 3-12 9z" fill="#3a3a3a" /></svg>
<svg class="ic" style="left:980.5px;top:150.5px;width:29px;height:29px" viewBox="0 0 32 32"><path d="M4 28L16 5h12L20 28z" fill="#27a57a" /><path d="M12 28L22 5h2l-8 23z" fill="#dff5ec" /><circle cx="6" cy="10" r="2" fill="#3d85c6"/><circle cx="11" cy="6" r="1.6" fill="#8fbbe6"/><circle cx="4" cy="16" r="1.6" fill="#8fbbe6"/></svg>
<svg class="ic" style="left:1013.0px;top:150.5px;width:29px;height:29px" viewBox="0 0 32 32"><path d="M3 3h14l5 5v10H3z" fill="#ececec" stroke="#bbb" stroke-width="1" /><text x="4" y="22" font-family="Liberation Sans" font-size="12" font-weight="bold" font-style="normal" fill="#888" text-anchor="start">ch</text><path d="M4 25h20" fill="none" stroke="#888" stroke-width="1.5" /><path d="M24 6v22M21 25l3 4 3-4" fill="none" stroke="#7a9ab8" stroke-width="1.3" /><circle cx="24" cy="5" r="2" fill="#27a57a"/></svg>
<svg class="ic" style="left:1050.5px;top:150.5px;width:29px;height:29px" viewBox="0 0 32 32"><path d="M4 14l8-7 8 4 9-2-8 18-14 3z" fill="#a8c4e4" stroke="#6a8ab0" stroke-width="1" /><path d="M5 9l5-5 4 3 5-3 2 6-6 3-6-1z" fill="#27a57a" /></svg>
<svg class="ic" style="left:1085.5px;top:150.5px;width:29px;height:29px" viewBox="0 0 32 32"><path d="M2 10l20 2 8 12-20 5z" fill="#3cc09a" stroke="#1f7f62" stroke-width="1" /><path d="M20 4h6l3 3v8h-9z" fill="#9a9a9a" /><text x="9" y="24" font-family="Liberation Serif" font-size="13" font-weight="bold" font-style="italic" fill="#1a1a1a" text-anchor="start">fx</text></svg>
<svg class="ic" style="left:1120.5px;top:150.5px;width:29px;height:29px" viewBox="0 0 32 32"><path d="M12 3c8 0 10 2 8 7s-6 6-2 10 10 6 10 9H6c-2-4 6-6 4-11S2 12 6 8s4-5 6-5z" fill="#27a57a" /><path d="M15 5c3 2 2 5-1 8s-1 7 3 10 6 4 6 5" fill="none" stroke="#c8efe0" stroke-width="1.2" /></svg>
<svg class="ic" style="left:1155.5px;top:150.5px;width:29px;height:29px" viewBox="0 0 32 32"><path d="M12 4l10 4-2 20-14-2z" fill="#9ad0c0" /><path d="M4 6l20 18M26 6L8 24" fill="none" stroke="#3d85c6" stroke-width="2.4" /><circle cx="7" cy="25" r="3.2" fill="none" stroke="#3d85c6" stroke-width="2"/><circle cx="23" cy="25" r="3.2" fill="none" stroke="#3d85c6" stroke-width="2"/></svg>
<svg class="ic" style="left:1190.5px;top:150.5px;width:29px;height:29px" viewBox="0 0 32 32"><text x="1" y="22" font-family="Liberation Serif" font-size="22" font-weight="bold" font-style="italic" fill="#555" text-anchor="start">i</text><g transform="translate(6,0) scale(.85)"><path d="M12 3c8 0 10 2 8 7s-6 6-2 10 10 6 10 9H6c-2-4 6-6 4-11S2 12 6 8s4-5 6-5z" fill="#27a57a" /></g><path d="M26.5 22.4 L28.3 22.6 L28.3 25.4 L26.5 25.6 L26.4 26.0 L27.5 27.5 L25.5 29.5 L24.0 28.4 L23.6 28.5 L23.4 30.3 L20.6 30.3 L20.4 28.5 L20.0 28.4 L18.5 29.5 L16.5 27.5 L17.6 26.0 L17.5 25.6 L15.7 25.4 L15.7 22.6 L17.5 22.4 L17.6 22.0 L16.5 20.5 L18.5 18.5 L20.0 19.6 L20.4 19.5 L20.6 17.7 L23.4 17.7 L23.6 19.5 L24.0 19.6 L25.5 18.5 L27.5 20.5 L26.4 22.0Z" fill="#3d85c6" /><circle cx="22" cy="24" r="2.34" fill="#f0f0f0"/></svg>
<svg class="ic" style="left:1225.5px;top:150.5px;width:29px;height:29px" viewBox="0 0 32 32"><path d="M4 28c10 0 6-12 12-14s8-4 8-10" fill="none" stroke="#27a57a" stroke-width="3.5" /><path d="M22 8v18M18 22l4 5 4-5M18 12l4-5 4 5" fill="none" stroke="#3a3a3a" stroke-width="2" /></svg>
<svg class="ic" style="left:1260.5px;top:150.5px;width:29px;height:29px" viewBox="0 0 32 32"><path d="M2 14l14-4 14 4-14 6z" fill="#b8d4ee" /><path d="M2 14v6l14 6 14-6v-6l-14 6z" fill="#8fb4dc" /><path d="M16 2v28" fill="none" stroke="#667" stroke-width="1.4" /><path d="M2 20l28-8" fill="none" stroke="#99a" stroke-width="1" /></svg>
<svg class="ic" style="left:1295.5px;top:150.5px;width:29px;height:29px" viewBox="0 0 32 32"><path d="M3 25L21 3l7 4L10 29z" fill="#5c5c5c" /><path d="M3 13l5-5 21 13-4 7z" fill="#5c5c5c" /></svg>
<svg class="ic" style="left:1330.5px;top:150.5px;width:29px;height:29px" viewBox="0 0 32 32"><path d="M3 10c14-2 24 6 26 20h-9c-2-9-8-14-17-13z" fill="#27a57a" /><path d="M3 13c12-2 20 6 22 17" fill="none" stroke="#d8f4ea" stroke-width="1.3" /></svg>
<svg class="ic" style="left:1380.5px;top:150.5px;width:29px;height:29px" viewBox="0 0 32 32"><path d="M3 6h8v10h10V6h8v22H3z" fill="#27a57a" /><path d="M11 16h10v12H11z" fill="#8a8a8a" /><path d="M8 10l16 14" fill="none" stroke="#555" stroke-width="3" /></svg>
<svg class="ic" style="left:1415.5px;top:150.5px;width:29px;height:29px" viewBox="0 0 32 32"><path d="M2 28L12 7L22 7L30 28Z" fill="#8a8a8a" /><path d="M9 16h14l3 6H6z" fill="#9cc6ea" /><path d="M4 26h24" fill="none" stroke="#27a57a" stroke-width="2" /><path d="M13 8h8l1 4h-10z" fill="#444" /></svg>
<svg class="ic" style="left:1450.5px;top:150.5px;width:29px;height:29px" viewBox="0 0 32 32"><path d="M2 26l5-8h18l5 8z" fill="#b8b8b8" /><path d="M5 20C5 8 27 8 27 20z" fill="#4a4a4a" /><path d="M5 20C5 8 27 8 27 20M9 19l7-8 7 8M16 11v9M7 15h18M11 12l-3 8M21 12l3 8" fill="none" stroke="#27a57a" stroke-width="1.2" /><path d="M6 22h20l1 3H5z" fill="#8fbbe6" /></svg>
<svg class="ic" style="left:1500.5px;top:150.5px;width:29px;height:29px" viewBox="0 0 32 32"><path d="M4 27L13 5h6l9 22z" fill="#cfcfcf" /><path d="M7 27L14 5M25 27L18 5" fill="none" stroke="#8a8a8a" stroke-width="1.5" /><path d="M8 22h16M10 17h12M12 12h8M13 8h6" fill="none" stroke="#9a9a9a" stroke-width="1.2" /><path d="M16 3v26" fill="none" stroke="#3aa745" stroke-width="2.2" /></svg>
<svg class="ic" style="left:1535.5px;top:150.5px;width:29px;height:29px" viewBox="0 0 32 32"><path d="M6 20h22M6 26h22" fill="none" stroke="#9a9a9a" stroke-width="1.8" /><path d="M9 17v12" fill="none" stroke="#9a9a9a" stroke-width="1.6" /><path d="M14 17v12" fill="none" stroke="#9a9a9a" stroke-width="1.6" /><path d="M19 17v12" fill="none" stroke="#9a9a9a" stroke-width="1.6" /><path d="M24 17v12" fill="none" stroke="#9a9a9a" stroke-width="1.6" /><path d="M16 8l10 10M26 8L16 18M18 6l10 10" fill="none" stroke="#aaa" stroke-width="1" /><path d="M7.5 3h5v12h4.5L10 22L3 15h4.5z" fill="#27a57a" /></svg>
<svg class="ic" style="left:1570.5px;top:150.5px;width:29px;height:29px" viewBox="0 0 32 32"><path d="M6 20h22M6 26h22" fill="none" stroke="#9a9a9a" stroke-width="1.8" /><path d="M9 17v12" fill="none" stroke="#9a9a9a" stroke-width="1.6" /><path d="M14 17v12" fill="none" stroke="#9a9a9a" stroke-width="1.6" /><path d="M19 17v12" fill="none" stroke="#9a9a9a" stroke-width="1.6" /><path d="M24 17v12" fill="none" stroke="#9a9a9a" stroke-width="1.6" /><path d="M16 8l10 10M26 8L16 18M18 6l10 10" fill="none" stroke="#aaa" stroke-width="1" /><path d="M7.5 22h5v-12h4.5L10 3L3 10h4.5z" fill="#3d85c6" /></svg>
<svg class="ic" style="left:1605.5px;top:150.5px;width:29px;height:29px" viewBox="0 0 32 32"><path d="M6 20h22M6 26h22" fill="none" stroke="#9a9a9a" stroke-width="1.8" /><path d="M9 17v12" fill="none" stroke="#9a9a9a" stroke-width="1.6" /><path d="M14 17v12" fill="none" stroke="#9a9a9a" stroke-width="1.6" /><path d="M19 17v12" fill="none" stroke="#9a9a9a" stroke-width="1.6" /><path d="M24 17v12" fill="none" stroke="#9a9a9a" stroke-width="1.6" /><path d="M16 8l10 10M26 8L16 18M18 6l10 10" fill="none" stroke="#aaa" stroke-width="1" /><path d="M5 3L21.5 22.9" stroke="#27a57a" stroke-width="6" stroke-linecap="butt"/><path d="M5 3L6.9 5.3" stroke="#1f7f62" stroke-width="6"/><path d="M19.1 24.8L24 26L23.8 21.0Z" fill="#1f7f62" /></svg>
<svg class="ic" style="left:1640.5px;top:150.5px;width:29px;height:29px" viewBox="0 0 32 32"><path d="M6 20h22M6 26h22" fill="none" stroke="#9a9a9a" stroke-width="1.8" /><path d="M9 17v12" fill="none" stroke="#9a9a9a" stroke-width="1.6" /><path d="M14 17v12" fill="none" stroke="#9a9a9a" stroke-width="1.6" /><path d="M19 17v12" fill="none" stroke="#9a9a9a" stroke-width="1.6" /><path d="M24 17v12" fill="none" stroke="#9a9a9a" stroke-width="1.6" /><path d="M16 8l10 10M26 8L16 18M18 6l10 10" fill="none" stroke="#aaa" stroke-width="1" /><path d="M5 8h5c-1-4 5-4 4 0h6v5c4-1 4 5 0 4v5H5z" fill="#27a57a" /></svg>
<svg class="ic" style="left:1675.5px;top:150.5px;width:29px;height:29px" viewBox="0 0 32 32"><path d="M3 26h9c3 0 4-2 4-5v-6c0-3 1-5 4-5h10" fill="none" stroke="#27a57a" stroke-width="3" /><path d="M3 20h9M20 5h9" fill="none" stroke="#3d85c6" stroke-width="2.5" /><path d="M8 12v6M6 16l2 3 2-3M25 12v6M23 16l2 3 2-3" fill="none" stroke="#3a3a3a" stroke-width="1.4" /></svg>
<svg class="ic" style="left:1710.5px;top:150.5px;width:29px;height:29px" viewBox="0 0 32 32"><path d="M4 16h6v10c0 3 4 3 6 0l4-8" fill="none" stroke="#27a57a" stroke-width="3" /><path d="M18 20c2-10 4-14 7-14s3 6 4 12z" fill="#8fb4dc" /></svg>
<svg class="ic" style="left:1745.5px;top:150.5px;width:29px;height:29px" viewBox="0 0 32 32"><path d="M5 4v24M27 4v24M5 7h22" fill="none" stroke="#1a1a1a" stroke-width="2" /><path d="M3 27h26" fill="none" stroke="#1a1a1a" stroke-width="2" /><path d="M6 26c2-10 18-10 20 0z" fill="#27a57a" /><path d="M10 26c1-6 11-6 12 0" fill="none" stroke="#bfe8d8" stroke-width="1.2" /><path d="M5 7l3-2v4zM27 7l-3-2v4z" fill="#1a1a1a" /></svg>
<svg class="ic" style="left:1780.5px;top:150.5px;width:29px;height:29px" viewBox="0 0 32 32"><rect x="8" y="3" width="14" height="8" fill="#f4f4f4" stroke="#8fb4dc" stroke-width="1.2"/><path d="M4 10h22v10H4z" fill="#cfd8e4" stroke="#9ab" stroke-width="1" /><path d="M10 28L24 12h6L16 28z" fill="#8a8a8a" /><path d="M12 28L26 12" fill="none" stroke="#27a57a" stroke-width="2" /></svg>
<svg class="ic" style="left:1815.5px;top:150.5px;width:29px;height:29px" viewBox="0 0 32 32"><rect x="6" y="3" width="20" height="20" fill="#3a3a3a" rx="4"/><rect x="9" y="6" width="14" height="7" fill="#9adcc8"/><rect x="9" y="15" width="5" height="4" fill="#27a57a"/><rect x="18" y="15" width="5" height="4" fill="#27a57a"/><circle cx="11" cy="21" r="1.3" fill="#ddd"/><circle cx="21" cy="21" r="1.3" fill="#ddd"/><path d="M8 24l-4 6M24 24l4 6M7 27h18" fill="none" stroke="#1a1a1a" stroke-width="2" /></svg>
<svg class="ic" style="left:1850.5px;top:150.5px;width:29px;height:29px" viewBox="0 0 32 32"><text x="1" y="11" font-family="Liberation Sans" font-size="11" font-weight="bold" font-style="normal" fill="#666" text-anchor="start">EQ</text><path d="M4 27c10 0 8-6 11-10s4-6 14-6" fill="none" stroke="#27a57a" stroke-width="3" /><circle cx="24" cy="22" r="2.5" fill="#8fbbe6"/></svg>
<svg class="ic" style="left:1885.5px;top:150.5px;width:29px;height:29px" viewBox="0 0 32 32"><text x="1" y="11" font-family="Liberation Sans" font-size="11" font-weight="bold" font-style="normal" fill="#666" text-anchor="start">CH</text><path d="M4 27c10 0 8-6 11-10s4-6 14-6" fill="none" stroke="#27a57a" stroke-width="3" /><circle cx="24" cy="22" r="2.5" fill="#8fbbe6"/></svg>
<div class="gv" style="left:128px;top:151px;height:27px"></div>
<div class="gv" style="left:323px;top:151px;height:27px"></div>
<div class="gv" style="left:828px;top:151px;height:27px"></div>
<div class="gv" style="left:1368px;top:151px;height:27px"></div>
<div class="gv" style="left:1488px;top:151px;height:27px"></div>
<div class="gv" style="left:4px;top:190px;height:16px"></div>
<div class="pb" style="left:10.5px;top:187.5px;width:24.0px;height:21.5px"><div class="t" style="left:0;width:24.0px;text-align:center;top:3px;font-size:15.5px;color:#2a2a2a">P</div></div>
<div class="pb" style="left:39.5px;top:187.5px;width:21.5px;height:21.5px"><div class="t" style="left:0;width:21.5px;text-align:center;top:3px;font-size:15.5px;color:#2a2a2a">L</div></div>
<div class="pb" style="left:66px;top:187.5px;width:23px;height:21.5px"><div class="t" style="left:0;width:23px;text-align:center;top:3px;font-size:15.5px;color:#2a2a2a">F</div></div>
<div class="rb" style="left:95px;top:187.5px;width:24.5px;height:21.5px"><div class="t" style="left:0;width:24.5px;text-align:center;top:3px;font-size:15.5px;color:#2a2a2a">X</div></div>
<div class="rb" style="left:124px;top:187.5px;width:25.5px;height:21.5px"><div class="t" style="left:0;width:25.5px;text-align:center;top:3px;font-size:15.5px;color:#2a2a2a">G</div></div>
<div class="pb" style="left:153px;top:187.5px;width:25px;height:21.5px"><div class="t" style="left:0;width:25px;text-align:center;top:3px;font-size:15.5px;color:#2a2a2a">C</div></div>
<div class="rb" style="left:184px;top:187.5px;width:26px;height:21.5px"><div class="t" style="left:0;width:26px;text-align:center;top:3px;font-size:15.5px;color:#2a2a2a">H</div></div>
<div class="rb" style="left:215px;top:187.5px;width:22.5px;height:21.5px"><div class="t" style="left:0;width:22.5px;text-align:center;top:3px;font-size:15.5px;color:#2a2a2a">T</div></div>
<div class="rb" style="left:242px;top:187.5px;width:23px;height:21.5px"><div class="t" style="left:0;width:23px;text-align:center;top:3px;font-size:15.5px;color:#2a2a2a">S</div></div>
<div class="pb" style="left:269.5px;top:187.5px;width:22.5px;height:21.5px"><div class="t" style="left:0;width:22.5px;text-align:center;top:3px;font-size:15.5px;color:#2a2a2a">E</div></div>
<div class="pb" style="left:297px;top:187.5px;width:20px;height:21.5px"><div class="t" style="left:0;width:20px;text-align:center;top:3px;font-size:15.5px;color:#2a2a2a">I</div></div>
<div class="rb" style="left:321px;top:187.5px;width:25px;height:21.5px"><div class="t" style="left:0;width:25px;text-align:center;top:3px;font-size:15.5px;color:#2a2a2a">D</div></div>
<div class="pb" style="left:350px;top:187.5px;width:27.5px;height:21.5px"><div class="t" style="left:0;width:27.5px;text-align:center;top:3px;font-size:15.5px;color:#2a2a2a">Q</div></div>
<div class="rb" style="left:382.5px;top:187.5px;width:25.0px;height:21.5px"><div class="t" style="left:0;width:25.0px;text-align:center;top:3px;font-size:15.5px;color:#2a2a2a">A</div></div>
<div class="pb" style="left:411px;top:187.5px;width:25px;height:21.5px"><div class="t" style="left:0;width:25px;text-align:center;top:3px;font-size:15.5px;color:#2a2a2a">K</div></div>
<div class="rb" style="left:441px;top:187.5px;width:29px;height:21.5px"><div class="t" style="left:0;width:29px;text-align:center;top:3px;font-size:15.5px;color:#2a2a2a">M</div></div>
<div class="sf2" style="left:487px;top:189px;width:206px;height:22px"></div>
<div class="rb" style="left:697px;top:188px;width:27px;height:24px"><svg width="27" height="24" viewBox="0 0 27 24"><circle cx="15" cy="9" r="6.5" fill="#eef4fa" stroke="#9ab" stroke-width="1.5"/><path d="M10 14L3 22" stroke="#555" stroke-width="3"/></svg></div>
<div class="gv" style="left:727px;top:191px;height:18px"></div>
<div class="sf2" style="left:738px;top:189px;width:82.5px;height:22px"></div>
<div class="a" style="left:824.5px;top:188px;width:26px;height:24px"><svg width="26" height="24" viewBox="0 0 26 24"><rect x="2" y="2" width="22" height="20" fill="#cfe2f7"/><rect x="2" y="19" width="22" height="3" fill="#2a78c8"/><circle cx="13" cy="11" r="7" fill="#f4f4f4" stroke="#2a9a30" stroke-width="2"/><rect x="1.5" y="1.5" width="23" height="21" fill="none" stroke="#2a78c8"/></svg></div>
<div class="sf2" style="left:855px;top:189px;width:69.5px;height:22px"></div>
<div class="a" style="left:927.5px;top:188px;width:27px;height:24px"><svg width="27" height="24" viewBox="0 0 27 24"><rect x="2" y="2" width="23" height="20" fill="#cfe2f7"/><circle cx="13.5" cy="12" r="8.5" fill="#f4f4f4" stroke="#2a78c8" stroke-width="2"/><path d="M13.5 5v14" stroke="#d82020" stroke-width="1.4" stroke-dasharray="2 2"/><circle cx="13.5" cy="12" r="1.6" fill="#d82020"/></svg></div>
<div class="sf2" style="left:959px;top:189px;width:69px;height:22px"></div>
<div class="a" style="left:1032px;top:188px;width:26px;height:24px"><svg width="26" height="24" viewBox="0 0 26 24"><rect x="2" y="2" width="22" height="20" fill="#cfe2f7"/><rect x="2" y="19" width="22" height="3" fill="#2a78c8"/><circle cx="13" cy="11" r="7" fill="#f4f4f4" stroke="#2a9a30" stroke-width="2"/><path d="M13 2v18" stroke="#d82020" stroke-width="1.6"/><rect x="1.5" y="1.5" width="23" height="21" fill="none" stroke="#2a78c8"/></svg></div>
<div class="sf2" style="left:1063px;top:189px;width:69px;height:22px"></div>
<div class="a" style="left:1135.5px;top:188px;width:26.5px;height:24px"><svg width="27" height="24" viewBox="0 0 27 24"><rect x="2" y="2" width="23" height="20" fill="#f4f4f4" stroke="#2a78c8"/><rect x="2" y="17" width="23" height="5" fill="#2a78c8"/><path d="M4 11h19M4 11l4-3v6zM23 11l-4-3v6z" stroke="#d82020" stroke-width="1.4" fill="#d82020"/></svg></div>
<div class="gh" style="left:7px;top:220px;width:31px"></div><div class="gh" style="left:50px;top:220px;width:28px"></div>
<svg class="ic" style="left:5.5px;top:232.0px;width:28px;height:28px" viewBox="0 0 32 32"><circle cx="16" cy="14" r="3.2" fill="#2f9e3a"/></svg><div class="dd" style="left:32.5px;top:255.0px"></div>
<svg class="ic" style="left:5.5px;top:267.1px;width:28px;height:28px" viewBox="0 0 32 32"><path d="M4 9l8 8L26 4M12 17l14 10M5 24l7-7" fill="none" stroke="#2f9e3a" stroke-width="2.4" /><rect x="8" y="13" width="8" height="8" fill="#2f78c4"/></svg><div class="dd" style="left:32.5px;top:290.1px"></div>
<svg class="ic" style="left:5.5px;top:302.1px;width:28px;height:28px" viewBox="0 0 32 32"><path d="M5 27L27 5" fill="none" stroke="#2f9e3a" stroke-width="2.6" /><circle cx="5" cy="27" r="3.4" fill="#2f78c4"/><circle cx="27" cy="5" r="3.4" fill="#2f78c4"/></svg><div class="dd" style="left:32.5px;top:325.1px"></div>
<svg class="ic" style="left:5.5px;top:337.1px;width:28px;height:28px" viewBox="0 0 32 32"><circle cx="16" cy="16" r="11" fill="none" stroke="#2f9e3a" stroke-width="2.6"/><circle cx="6" cy="11" r="3.2" fill="#2f78c4"/><circle cx="25" cy="9" r="3.2" fill="#2f78c4"/><circle cx="9" cy="25" r="3.2" fill="#2f78c4"/></svg><div class="dd" style="left:32.5px;top:360.1px"></div>
<svg class="ic" style="left:5.5px;top:372.2px;width:28px;height:28px" viewBox="0 0 32 32"><path d="M27 8A12 12 0 1 0 14 28" fill="none" stroke="#2f9e3a" stroke-width="2.6" /><circle cx="27" cy="8" r="3.2" fill="#2f78c4"/><circle cx="7" cy="10" r="3.2" fill="#2f78c4"/><circle cx="14" cy="28" r="3.2" fill="#2f78c4"/></svg><div class="dd" style="left:32.5px;top:395.2px"></div>
<svg class="ic" style="left:5.5px;top:407.2px;width:28px;height:28px" viewBox="0 0 32 32"><rect x="5" y="8" width="22" height="16" fill="none" stroke="#2f9e3a" stroke-width="2.6"/><circle cx="27" cy="8" r="3" fill="#2f78c4"/><circle cx="5" cy="24" r="3" fill="#2f78c4"/></svg><div class="dd" style="left:32.5px;top:430.2px"></div>
<svg class="ic" style="left:5.5px;top:442.3px;width:28px;height:28px" viewBox="0 0 32 32"><text x="3" y="27" font-family="Liberation Serif" font-size="30" font-weight="bold" font-style="normal" fill="#2f78c4" text-anchor="start">A</text><path d="M29 2L22.4 10.8" stroke="#f0b8a0" stroke-width="4" stroke-linecap="butt"/><path d="M29 2L27.2 4.4" stroke="#d88" stroke-width="4"/><path d="M20.8 9.6L20 14L24.0 12.0Z" fill="#d88" /></svg><div class="dd" style="left:32.5px;top:465.3px"></div>
<svg class="ic" style="left:5.5px;top:477.3px;width:28px;height:28px" viewBox="0 0 32 32"><path d="M16 16L6 6h10zM16 16L26 6v10zM16 16l10 10H16zM16 16L6 26V16z" fill="#2f9e3a" /><path d="M16 16V6h10zM16 16h10v10zM16 16v10H6zM16 16H6V6z" fill="#9a9a9a" /><path d="M20 4l8 8-10 6z" fill="#f0a0a0" /></svg><div class="dd" style="left:32.5px;top:500.3px"></div>
<svg class="ic" style="left:5.5px;top:512.4px;width:28px;height:28px" viewBox="0 0 32 32"><rect x="10" y="4" width="18" height="14" fill="none" rx="2" stroke="#2f78c4" stroke-width="2.4"/><rect x="4" y="10" width="16" height="12" fill="#f0f0f0" rx="2" stroke="#2f78c4" stroke-width="2.4"/><path d="M8 27h16" fill="none" stroke="#2f9e3a" stroke-width="2.4" /></svg><div class="dd" style="left:32.5px;top:535.4px"></div>
<svg class="ic" style="left:5.5px;top:547.5px;width:28px;height:28px" viewBox="0 0 32 32"><path d="M6 6v20M26 4v18" fill="none" stroke="#2f78c4" stroke-width="2.6" /><path d="M6 12l20-3M6 26l20-4" fill="none" stroke="#2f78c4" stroke-width="2.4" /></svg><div class="dd" style="left:32.5px;top:570.5px"></div>
<svg class="ic" style="left:5.5px;top:582.5px;width:28px;height:28px" viewBox="0 0 32 32"><rect x="4" y="5" width="24" height="22" fill="none" stroke="#2f78c4" stroke-width="2.2"/><rect x="4" y="5" width="24" height="6" fill="#2f78c4"/><path d="M4 17h24M4 22h24M12 11v16" fill="none" stroke="#2f78c4" stroke-width="1.6" /><path d="M4 19h24M18 11v16" fill="none" stroke="#2f9e3a" stroke-width="2.4" /></svg><div class="dd" style="left:32.5px;top:605.5px"></div>
<svg class="ic" style="left:5.5px;top:617.5px;width:28px;height:28px" viewBox="0 0 32 32"><rect x="4" y="4" width="24" height="24" fill="#b8d4ee" stroke="#2f78c4" stroke-width="3"/><rect x="8" y="8" width="16" height="16" fill="#f0f0f0"/><path d="M8 24h16" fill="none" stroke="#2f9e3a" stroke-width="2" /></svg><div class="dd" style="left:32.5px;top:640.5px"></div>
<svg class="ic" style="left:5.5px;top:652.6px;width:28px;height:28px" viewBox="0 0 32 32"><path d="M3 12l16-8 10 14-16 8z" fill="#3b84c8" /><path d="M3 12l10 14 0 2L3 14z" fill="#2b6cb3" /></svg><div class="dd" style="left:32.5px;top:675.6px"></div>
<svg class="ic" style="left:5.5px;top:687.6px;width:28px;height:28px" viewBox="0 0 32 32"><rect x="4" y="10" width="24" height="17" fill="#b8d4ee" stroke="#2f78c4" stroke-width="2"/><path d="M6 25l7-8 5 5 3-3 5 6z" fill="#6aa84f" /><circle cx="21" cy="15" r="2.2" fill="#fff"/><path d="M9 2v12M3 8h12" fill="none" stroke="#2f78c4" stroke-width="2.6" /></svg><div class="dd" style="left:32.5px;top:710.6px"></div>
<svg class="ic" style="left:5.5px;top:722.7px;width:28px;height:28px" viewBox="0 0 32 32"><path d="M16 2l5 6h-3v6h6v-3l6 5-6 5v-3h-6v6h3l-5 6-5-6h3v-6H8v3l-6-5 6-5v3h6V8h-3z" fill="#2f78c4" /></svg><div class="dd" style="left:32.5px;top:745.7px"></div>
<svg class="ic" style="left:5.5px;top:757.8px;width:28px;height:28px" viewBox="0 0 32 32"><path d="M4 6l16 16" fill="none" stroke="#2f9e3a" stroke-width="3.2" /><path d="M24 28l-10-3 7-7z" fill="#2f9e3a" /><circle cx="22" cy="8" r="3.4" fill="#2f78c4"/></svg><div class="dd" style="left:32.5px;top:780.8px"></div>
<svg class="ic" style="left:5.5px;top:792.8px;width:28px;height:28px" viewBox="0 0 32 32"><rect x="1" y="1" width="30" height="30" fill="#fafafa"/><path d="M3 27L25 3" fill="none" stroke="#2f78c4" stroke-width="2.6" /><rect x="15" y="14" width="6" height="6" fill="#e02626"/><rect x="21" y="14" width="6" height="6" fill="#ecc62c"/><rect x="15" y="20" width="6" height="6" fill="#9cc6ea"/><rect x="21" y="20" width="6" height="6" fill="#2f78c4"/></svg><div class="dd" style="left:32.5px;top:815.8px"></div>
<svg class="ic" style="left:5.5px;top:827.8px;width:28px;height:28px" viewBox="0 0 32 32"><path d="M16 3l13 9-4 15H7L3 12z" fill="#9cc6ea" stroke="#1f2f3f" stroke-width="2.4" /></svg><div class="dd" style="left:32.5px;top:850.8px"></div>
<svg class="ic" style="left:5.5px;top:862.9px;width:28px;height:28px" viewBox="0 0 32 32"><circle cx="7" cy="7" r="3.6" fill="#e02626"/><path d="M11 11L27 27M27 11L11 27" fill="none" stroke="#e03030" stroke-width="4.6" /></svg><div class="dd" style="left:32.5px;top:885.9px"></div>
<div class="gh" style="left:6px;top:900px;width:31px"></div>
<svg class="ic" style="left:5.5px;top:913.0px;width:28px;height:28px" viewBox="0 0 32 32"><path d="M3 24c9 0 8-7 15-7h10" fill="none" stroke="#3d85c6" stroke-width="2.4" /><path d="M7 3L22.2 19.1" stroke="#ecc62c" stroke-width="5" stroke-linecap="butt"/><path d="M7 3L9.1 5.2" stroke="#d05050" stroke-width="5"/><path d="M20.4 20.8L25 22L24.1 17.4Z" fill="#d86a3a" /></svg><div class="dd" style="left:32.5px;top:936.0px"></div>
<svg class="ic" style="left:5.5px;top:948.0px;width:28px;height:28px" viewBox="0 0 32 32"><circle cx="16" cy="16" r="13" fill="#2f78c4"/><text x="16" y="25" font-family="Liberation Serif" font-size="22" font-weight="bold" font-style="normal" fill="#fff" text-anchor="middle">i</text></svg><div class="dd" style="left:32.5px;top:971.0px"></div>
<svg class="ic" style="left:5.5px;top:983.0px;width:28px;height:28px" viewBox="0 0 32 32"><path d="M5 8l7-3 7 3 7-3v20l-7 3-7-3-7 3z" fill="#6aa84f" stroke="#3a7a2a" stroke-width="1" /><path d="M12 5v20M19 8v20" fill="none" stroke="#d8e8c8" stroke-width="1.2" /><path d="M8 14h3v4H8zM14 18h3v5h-3z" fill="#b8e0a0" /></svg><div class="dd" style="left:32.5px;top:1006.0px"></div>
<svg class="ic" style="left:5.5px;top:1018.0px;width:28px;height:28px" viewBox="0 0 32 32"><path d="M3 8l4-4 4 22-4 3z" fill="#6aa84f" /><path d="M27 4L11.7 21.0" stroke="#ecc62c" stroke-width="5" stroke-linecap="butt"/><path d="M27 4L25.0 6.2" stroke="#d05050" stroke-width="5"/><path d="M9.8 19.4L9 24L13.5 22.7Z" fill="#d86a3a" /><path d="M6 28h18l4-6" fill="none" stroke="#aaa" stroke-width="2" /></svg><div class="dd" style="left:32.5px;top:1041.0px"></div>
<svg class="ic" style="left:5.5px;top:1053.0px;width:28px;height:28px" viewBox="0 0 32 32"><path d="M2 22L14 9h15v8L18 28H4z" fill="#8a8a8a" /><path d="M2 22L14 9h3L5 23z" fill="#27a57a" /><path d="M4 28h14l11-11v2L19 30H5z" fill="#27a57a" /></svg><div class="dd" style="left:32.5px;top:1076.0px"></div>
<svg class="ic" style="left:49.0px;top:231.0px;width:30px;height:30px" viewBox="0 0 32 32"><path d="M3 25c6 1 10 0 11-2s1-3 1-5v-2c0-2 2-3 4-3h10" fill="none" stroke="#3d8ad8" stroke-width="2.4" /><path d="M7 2L22.2 17.2" stroke="#ecc62c" stroke-width="5" stroke-linecap="butt"/><path d="M7 2L9.1 4.1" stroke="#d05050" stroke-width="5"/><path d="M20.4 18.9L25 20L23.9 15.4Z" fill="#d86a3a" /></svg>
<svg class="ic" style="left:49.0px;top:267.0px;width:30px;height:30px" viewBox="0 0 32 32"><path d="M3 25c6 1 10 0 11-2s1-3 1-5v-2c0-2 2-3 4-3h10" fill="none" stroke="#3d8ad8" stroke-width="2.4" /><path d="M14.0 -1.0 L16.7 6.3 L24.5 6.6 L18.4 11.4 L20.5 18.9 L14.0 14.6 L7.5 18.9 L9.6 11.4 L3.5 6.6 L11.3 6.3Z" fill="#e8c820" /></svg>
<svg class="ic" style="left:49.0px;top:302.0px;width:30px;height:30px" viewBox="0 0 32 32"><path d="M3 25c6 1 10 0 11-2s1-3 1-5v-2c0-2 2-3 4-3h10" fill="none" stroke="#3d8ad8" stroke-width="2.4" /><rect x="5" y="2" width="18" height="15" fill="#f8f8f8" stroke="#c03030" stroke-width="1.5"/><text x="14" y="15" font-family="Liberation Serif" font-size="14" font-weight="bold" font-style="normal" fill="#a01818" text-anchor="middle">I</text></svg>
<svg class="ic" style="left:49.0px;top:337.0px;width:30px;height:30px" viewBox="0 0 32 32"><path d="M8 2h12l5 5v15H8z" fill="#e0e0e0" stroke="#aaa" stroke-width="1" /><path d="M4 6h12v16H4z" fill="#d0d0d0" stroke="#aaa" stroke-width="1" /><path d="M3 25c6 1 10 0 11-2s1-3 1-5v-2c0-2 2-3 4-3h10" fill="none" stroke="#3d8ad8" stroke-width="2.4" /></svg>
<svg class="ic" style="left:49.0px;top:372.0px;width:30px;height:30px" viewBox="0 0 32 32"><g transform="translate(2,-3)"><circle cx="15" cy="9" r="5.5" fill="#b4b4b4"/><path d="M4 28c0-9 5-13 11-13s11 4 11 13z" fill="#b4b4b4" /></g><path d="M3 25c6 1 10 0 11-2s1-3 1-5v-2c0-2 2-3 4-3h10" fill="none" stroke="#3d8ad8" stroke-width="2.4" /></svg>
<svg class="ic" style="left:49.0px;top:407.0px;width:30px;height:30px" viewBox="0 0 32 32"><text x="16" y="28" font-family="Liberation Sans" font-size="30" font-weight="bold" font-style="normal" fill="#d01010" text-anchor="middle">?</text></svg>
<svg class="ic" style="left:49.0px;top:455.0px;width:30px;height:30px" viewBox="0 0 32 32"><path d="M3 25c6 1 10 0 11-2s1-3 1-5v-2c0-2 2-3 4-3h10" fill="none" stroke="#3d8ad8" stroke-width="2.4" /><path d="M7 2L22.2 17.2" stroke="#ecc62c" stroke-width="5" stroke-linecap="butt"/><path d="M7 2L9.1 4.1" stroke="#d05050" stroke-width="5"/><path d="M20.4 18.9L25 20L23.9 15.4Z" fill="#d86a3a" /></svg><div class="dd" style="left:78.0px;top:480.0px"></div>
<svg class="ic" style="left:49.0px;top:490.0px;width:30px;height:30px" viewBox="0 0 32 32"><path d="M3 25c6 1 10 0 11-2s1-3 1-5v-2c0-2 2-3 4-3h10" fill="none" stroke="#3d8ad8" stroke-width="2.4" /><path d="M14.0 -1.0 L16.7 6.3 L24.5 6.6 L18.4 11.4 L20.5 18.9 L14.0 14.6 L7.5 18.9 L9.6 11.4 L3.5 6.6 L11.3 6.3Z" fill="#e8c820" /></svg>
<svg class="ic" style="left:49.0px;top:527.0px;width:30px;height:30px" viewBox="0 0 32 32"><ellipse cx="12" cy="10" rx="9" ry="5" fill="none" stroke="#e02626" stroke-width="3" transform="rotate(35 12 10)"/><ellipse cx="21" cy="19" rx="9" ry="5" fill="none" stroke="#e02626" stroke-width="3" transform="rotate(50 21 19)"/><path d="M3 24c6 0 7-4 10-7s6-5 14-5" fill="none" stroke="#3d85c6" stroke-width="2.4" /></svg><div class="dd" style="left:78.0px;top:552.0px"></div>
<svg class="ic" style="left:49.0px;top:562.0px;width:30px;height:30px" viewBox="0 0 32 32"><path d="M16 4a12 12 0 0 1 12 12" fill="none" stroke="#e02626" stroke-width="4.5" /><path d="M28 16a12 12 0 0 1-12 12" fill="none" stroke="#3d85c6" stroke-width="4.5" /><path d="M16 28A12 12 0 0 1 4 16" fill="none" stroke="#e8e8e8" stroke-width="4.5" /><path d="M4 16A12 12 0 0 1 16 4" fill="none" stroke="#ecc62c" stroke-width="4.5" /><path d="M10 14c4-4 9-2 10 2s-3 7-7 5" fill="none" stroke="#3d85c6" stroke-width="2.4" /><path d="M14 20c3 1 8-1 10-6" fill="none" stroke="#e02626" stroke-width="2.4" /></svg><div class="dd" style="left:78.0px;top:587.0px"></div>
<svg class="ic" style="left:49.0px;top:613.0px;width:30px;height:30px" viewBox="0 0 32 32"><ellipse cx="12" cy="10" rx="9" ry="5" fill="none" stroke="#e02626" stroke-width="3" transform="rotate(35 12 10)"/><ellipse cx="21" cy="19" rx="9" ry="5" fill="none" stroke="#e02626" stroke-width="3" transform="rotate(50 21 19)"/><path d="M3 24c6 0 7-4 10-7s6-5 14-5" fill="none" stroke="#3d85c6" stroke-width="2.4" /></svg>
<svg class="ic" style="left:49.0px;top:648.0px;width:30px;height:30px" viewBox="0 0 32 32"><path d="M3 14C7 4 20 2 28 8" fill="none" stroke="#3d85c6" stroke-width="3" /><path d="M12 16l-5 12M16 17l12 4" fill="none" stroke="#e02626" stroke-width="3.4" /></svg>
<svg class="ic" style="left:49.0px;top:682.0px;width:30px;height:30px" viewBox="0 0 32 32"><path d="M3 26c8 0 8-8 12-12s6-8 12-8" fill="none" stroke="#3d85c6" stroke-width="3" /><path d="M19.0 8h6v13h5.0L22 28L14 21h5.0z" fill="#e02626" /></svg>
<svg class="ic" style="left:49.0px;top:718.0px;width:30px;height:30px" viewBox="0 0 32 32"><path transform="translate(13,19) rotate(135)" d="M-9 -4h8v-4.5l10 8.500-10 8.500v-4.500h-8z" fill="#e02626"/><path transform="translate(21,11) rotate(-45)" d="M-9 -4h8v-4.500l10 8.500-10 8.500v-4.500h-8z" fill="#3aa745"/></svg>
<svg class="ic" style="left:49.0px;top:753.0px;width:30px;height:30px" viewBox="0 0 32 32"><path d="M5 4c0 8 8 6 8 12s-8 6-8 12M19 4c0 8 8 6 8 12s-8 6-8 12" fill="none" stroke="#3d85c6" stroke-width="2.4" /><path d="M10 10l12 12" fill="none" stroke="#e02626" stroke-width="3" /><path d="M24 24l-7-2 5-5z" fill="#e02626" /></svg>
<svg class="ic" style="left:49.0px;top:785.0px;width:30px;height:30px" viewBox="0 0 32 32"><path d="M11 2v18M3 10h17" fill="none" stroke="#a81818" stroke-width="3.6" /><path d="M3 26c10 0 8-6 14-6h12" fill="none" stroke="#9cc6ea" stroke-width="2.2" /></svg>
<svg class="ic" style="left:49.0px;top:823.0px;width:30px;height:30px" viewBox="0 0 32 32"><path d="M26 10A11 11 0 0 0 6 10l-3-1 3 8 7-5-3-1a7 7 0 0 1 12 0z" fill="#e02626" /><path d="M6 20a11 11 0 0 0 20 0l3 1-3-8-7 5 3 1a7 7 0 0 1-12 0z" fill="#e02626" /><path d="M4 28h20" fill="none" stroke="#9cc6ea" stroke-width="2" /></svg>
<svg class="ic" style="left:49.0px;top:858.0px;width:30px;height:30px" viewBox="0 0 32 32"><path d="M3 26h8c3 0 4-2 4-5V10c0-3 1-5 4-5h10" fill="none" stroke="#3d85c6" stroke-width="2.6" /><path d="M28 10c-8 0-10 6-8 14l-4-2 6 8 3-9-3 2c-1-6 1-9 6-10z" fill="#e02626" /><path d="M3 30h10" fill="none" stroke="#9cc6ea" stroke-width="2" /></svg>
<svg class="ic" style="left:49.0px;top:893.0px;width:30px;height:30px" viewBox="0 0 32 32"><path d="M16 8l10-3M8 16h6M4 26l9-2M14 12v4" fill="none" stroke="#5f9bd5" stroke-width="2.2" /></svg>
<svg class="ic" style="left:49.0px;top:927.0px;width:30px;height:30px" viewBox="0 0 32 32"><path d="M3 26l9-2c3-1 3-2 3-5v-5c0-3 1-4 4-5" fill="none" stroke="#3d85c6" stroke-width="2.6" /><path d="M19 9l10-3" fill="none" stroke="#e02626" stroke-width="2.6" /></svg>
<svg class="ic" style="left:49.0px;top:962.0px;width:30px;height:30px" viewBox="0 0 32 32"><path d="M3 16h8c3 0 4-2 4-4V9c0-3 1-4 4-4h10" fill="none" stroke="#8a8a8a" stroke-width="2.4" /><path d="M3 26h8c3 0 4-2 4-4v-3c0-3 1-4 4-4h10" fill="none" stroke="#5a6a7a" stroke-width="2.4" /><path d="M8 18v7M5 22l3 4 3-4M24 7v6M21 11l3 4 3-4" fill="none" stroke="#e02626" stroke-width="1.8" /></svg>
<svg class="ic" style="left:49.0px;top:997.0px;width:30px;height:30px" viewBox="0 0 32 32"><path d="M8 2v14M1 9h14" fill="none" stroke="#c01818" stroke-width="3" /><path d="M27.3 18.7 L29.8 19.0 L29.8 23.0 L27.3 23.3 L27.0 23.8 L28.6 25.8 L25.8 28.6 L23.8 27.0 L23.3 27.3 L23.0 29.8 L19.0 29.8 L18.7 27.3 L18.2 27.0 L16.2 28.6 L13.4 25.8 L15.0 23.8 L14.7 23.3 L12.2 23.0 L12.2 19.0 L14.7 18.7 L15.0 18.2 L13.4 16.2 L16.2 13.4 L18.2 15.0 L18.7 14.7 L19.0 12.2 L23.0 12.2 L23.3 14.7 L23.8 15.0 L25.8 13.4 L28.6 16.2 L27.0 18.2Z" fill="#3d85c6" /><circle cx="21" cy="21" r="3.2399999999999998" fill="#f0f0f0"/></svg>
<div class="gh" style="left:51px;top:446px;width:31px"></div><div class="gh" style="left:51px;top:601px;width:27px"></div>
<div class="gh" style="left:1881px;top:220px;width:32px"></div>
<svg class="ic" style="left:1880.0px;top:231.5px;width:30px;height:30px" viewBox="0 0 32 32"><g transform="translate(-4,3)"><circle cx="15" cy="9" r="5.5" fill="#b0b0b0"/><path d="M4 28c0-9 5-13 11-13s11 4 11 13z" fill="#b0b0b0" /></g><g transform="translate(2,0)"><path d="M24 6L9 16L25 26" fill="none" stroke="#3d85c6" stroke-width="2.6" /><circle cx="24" cy="6" r="3.6" fill="#3d85c6"/><circle cx="9" cy="16" r="3.6" fill="#3d85c6"/><circle cx="25" cy="26" r="3.6" fill="#3d85c6"/></g></svg>
<svg class="ic" style="left:1880.0px;top:266.4px;width:30px;height:30px" viewBox="0 0 32 32"><path d="M22 3l-8 1 2 8 2-3c6 2 8 9 4 14s-12 4-15-2c-2-4-1-8 2-11l-3-2c-5 5-5 12-1 17 5 6 15 6 20-1 5-8 1-17-7-19z" fill="#2f9a3a" /></svg><div class="dd" style="left:1908.0px;top:291.4px"></div>
<svg class="ic" style="left:1880.0px;top:301.3px;width:30px;height:30px" viewBox="0 0 32 32"><g transform="translate(-2,-4)"><path d="M3 19l13-6 13 6-13 6z" fill="#2b6cb3" /><path d="M3 16l13-6 13 6-13 6z" fill="#e02626" /><path d="M3 12l13-6 13 6-13 6z" fill="#9cc6ea" /></g><path transform="translate(14,14)" d="M2 0l10 8 3-3 1 13H3l4-3L0 4z" fill="#3ab040"/></svg><div class="dd" style="left:1908.0px;top:326.3px"></div>
<svg class="ic" style="left:1880.0px;top:336.2px;width:30px;height:30px" viewBox="0 0 32 32"><g transform="translate(-2,-4)"><path d="M4 18c2-9 9-13 15-12s10 6 8 12-8 9-14 8-10-3-9-8z" fill="#d9b64a" stroke="#7a5a1a" stroke-width="1" /><path d="M8 18l6-9 6 6 6-2M14 9l2 14M20 15l-10 8" fill="none" stroke="#7a5a1a" stroke-width="0.8" /></g><path transform="translate(14,14)" d="M2 0l10 8 3-3 1 13H3l4-3L0 4z" fill="#3ab040"/></svg><div class="dd" style="left:1908.0px;top:361.2px"></div>
<svg class="ic" style="left:1880.0px;top:371.1px;width:30px;height:30px" viewBox="0 0 32 32"><g transform="translate(-2,-4)"><path d="M3 19l13-6 13 6-13 6z" fill="#2b6cb3" /><path d="M3 16l13-6 13 6-13 6z" fill="#e02626" /><path d="M3 12l13-6 13 6-13 6z" fill="#9cc6ea" /></g><path d="M16 16L28 28M28 16L16 28" fill="none" stroke="#d83a3a" stroke-width="3.6" /></svg><div class="dd" style="left:1908.0px;top:396.1px"></div>
<svg class="ic" style="left:1880.0px;top:406.0px;width:30px;height:30px" viewBox="0 0 32 32"><path d="M27.0 15.5 L29.7 15.8 L29.7 20.2 L27.0 20.5 L26.7 21.2 L28.5 23.3 L25.3 26.5 L23.2 24.7 L22.5 25.0 L22.2 27.7 L17.8 27.7 L17.5 25.0 L16.8 24.7 L14.7 26.5 L11.5 23.3 L13.3 21.2 L13.0 20.5 L10.3 20.2 L10.3 15.8 L13.0 15.5 L13.3 14.8 L11.5 12.7 L14.7 9.5 L16.8 11.3 L17.5 11.0 L17.8 8.3 L22.2 8.3 L22.5 11.0 L23.2 11.3 L25.3 9.5 L28.5 12.7 L26.7 14.8Z" fill="#c4c4c4" /><circle cx="20" cy="18" r="3.5999999999999996" fill="#f0f0f0"/><g transform="translate(0,0)"><path d="M24 6L9 16L25 26" fill="none" stroke="#3d85c6" stroke-width="2.6" /><circle cx="24" cy="6" r="3.6" fill="#3d85c6"/><circle cx="9" cy="16" r="3.6" fill="#3d85c6"/><circle cx="25" cy="26" r="3.6" fill="#3d85c6"/></g></svg>
<svg class="ic" style="left:1880.0px;top:440.9px;width:30px;height:30px" viewBox="0 0 32 32"><g transform="translate(-2,0)"><path d="M24 6L9 16L25 26" fill="none" stroke="#3d85c6" stroke-width="2.6" /><circle cx="24" cy="6" r="3.6" fill="#3d85c6"/><circle cx="9" cy="16" r="3.6" fill="#3d85c6"/><circle cx="25" cy="26" r="3.6" fill="#3d85c6"/></g><path d="M23 30c-3-6-5-9-5-13a5 5 0 0 1 10 0c0 4-2 7-5 13z" fill="#a01010" /><circle cx="23" cy="17" r="2" fill="#f0c0c0"/></svg>
<svg class="ic" style="left:1880.0px;top:475.8px;width:30px;height:30px" viewBox="0 0 32 32"><path d="M6 22h22M6 27h22" fill="none" stroke="#9cc6ea" stroke-width="3" /><g transform="translate(0,-2)"><path d="M24 6L9 16L25 26" fill="none" stroke="#e02626" stroke-width="2.6" /><circle cx="24" cy="6" r="3.6" fill="#e02626"/><circle cx="9" cy="16" r="3.6" fill="#e02626"/><circle cx="25" cy="26" r="3.6" fill="#e02626"/></g></svg>
<svg class="ic" style="left:1880.0px;top:510.7px;width:30px;height:30px" viewBox="0 0 32 32"><path d="M5 5L27 27M27 5L5 27" fill="none" stroke="#d82028" stroke-width="6" /></svg>
<svg class="ic" style="left:1880.0px;top:562.0px;width:30px;height:30px" viewBox="0 0 32 32"><text x="2" y="27" font-family="Liberation Serif" font-size="30" font-weight="bold" font-style="normal" fill="#c0392b" text-anchor="start">i</text><path d="M10 25h6V12c0-3 2-4 4-4h9" fill="none" stroke="#f08a2c" stroke-width="2.5" /></svg>
<svg class="ic" style="left:1880.0px;top:596.9px;width:30px;height:30px" viewBox="0 0 32 32"><text x="4" y="27" font-family="Liberation Serif" font-size="30" font-weight="bold" font-style="normal" fill="#c0392b" text-anchor="start">i</text><circle cx="23" cy="23" r="4" fill="#e04848"/></svg>
<svg class="ic" style="left:1880.0px;top:631.8px;width:30px;height:30px" viewBox="0 0 32 32"><path d="M27 4L10.5 23.9" stroke="#f0c030" stroke-width="5" stroke-linecap="butt"/><path d="M27 4L25.1 6.3" stroke="#d86a3a" stroke-width="5"/><path d="M8.6 22.3L8 27L12.5 25.5Z" fill="#d86a3a" /><path d="M4 8l24 18" fill="none" stroke="#f08080" stroke-width="5" /><path d="M4 8l24 18" fill="none" stroke="#e04040" stroke-width="1.2" /></svg>
<svg class="ic" style="left:1880.0px;top:666.7px;width:30px;height:30px" viewBox="0 0 32 32"><path d="M3 12L14 3l15 14-9 11H10z" fill="#f4a0a0" /><path d="M3 12L14 3l4 4L7 17z" fill="#e03a2a" /><path d="M12 22l10-10 4 4-9 11z" fill="#e03a2a" /><path d="M4 28h22" fill="none" stroke="#f0b0b0" stroke-width="2" /></svg>
<svg class="ic" style="left:1880.0px;top:701.6px;width:30px;height:30px" viewBox="0 0 32 32"><text x="1" y="27" font-family="Liberation Serif" font-size="30" font-weight="bold" font-style="normal" fill="#c0392b" text-anchor="start">i</text><path d="M8 18h20v11H8z" fill="#f4c0c0" /><path d="M16.5 3h7v12h5.5L20 22L11 15h5.5z" fill="#3ab040" /></svg><div class="dd" style="left:1908.0px;top:726.6px"></div>
<svg class="ic" style="left:1880.0px;top:736.5px;width:30px;height:30px" viewBox="0 0 32 32"><text x="1" y="27" font-family="Liberation Serif" font-size="30" font-weight="bold" font-style="normal" fill="#c0392b" text-anchor="start">i</text><path d="M10 20h18v8H10z" fill="#f4c0c0" /><path d="M28 3L14.4 20.8" stroke="#ecc62c" stroke-width="5" stroke-linecap="butt"/><path d="M28 3L26.2 5.4" stroke="#d05050" stroke-width="5"/><path d="M12.4 19.3L12 24L16.4 22.3Z" fill="#d86a3a" /></svg>
<svg class="ic" style="left:1880.0px;top:771.4px;width:30px;height:30px" viewBox="0 0 32 32"><text x="1" y="27" font-family="Liberation Serif" font-size="30" font-weight="bold" font-style="normal" fill="#c0392b" text-anchor="start">i</text><path d="M14 22l4-14 6-6-3 10z" fill="#3a9a40" /></svg>
<svg class="ic" style="left:1880.0px;top:806.3px;width:30px;height:30px" viewBox="0 0 32 32"><text x="1" y="27" font-family="Liberation Serif" font-size="30" font-weight="bold" font-style="normal" fill="#c0392b" text-anchor="start">i</text><text x="17" y="26" font-family="Liberation Serif" font-size="28" font-weight="bold" font-style="italic" fill="#2878d0" text-anchor="start">!</text></svg>
<svg class="ic" style="left:1880.0px;top:841.2px;width:30px;height:30px" viewBox="0 0 32 32"><text x="1" y="27" font-family="Liberation Serif" font-size="30" font-weight="bold" font-style="normal" fill="#c0392b" text-anchor="start">i</text><path transform="translate(11,6) scale(1.15)" d="M0 7l5 6L16 0l-2-2L5 8 2 4z" fill="#3ab040"/></svg>
<svg class="ic" style="left:1880.0px;top:876.1px;width:30px;height:30px" viewBox="0 0 32 32"><text x="1" y="27" font-family="Liberation Serif" font-size="30" font-weight="bold" font-style="normal" fill="#c0392b" text-anchor="start">i</text><circle cx="22" cy="11" r="6.5" fill="#e85a50"/><circle cx="20" cy="9" r="2.2" fill="#f8c8c0"/></svg>
<svg class="ic" style="left:1880.0px;top:911.0px;width:30px;height:30px" viewBox="0 0 32 32"><text x="1" y="27" font-family="Liberation Serif" font-size="30" font-weight="bold" font-style="normal" fill="#c0392b" text-anchor="start">i</text><path d="M10 17h18v4H10zM10 23h18v4H10z" fill="#f4b8b8" /><path transform="translate(13,1) scale(1.0)" d="M0 7l5 6L16 0l-2-2L5 8 2 4z" fill="#3ab040"/></svg>
<svg class="ic" style="left:1880.0px;top:945.9px;width:30px;height:30px" viewBox="0 0 32 32"><text x="1" y="27" font-family="Liberation Serif" font-size="30" font-weight="bold" font-style="normal" fill="#c0392b" text-anchor="start">i</text><path d="M10 17h18v4H10zM10 23h18v4H10z" fill="#f4b8b8" /><circle cx="22" cy="10" r="3.5" fill="#e04848"/></svg>
<div class="gh" style="left:1881px;top:550px;width:32px"></div>
<div class="a" style="left:93px;top:219px;width:1782px;height:776px;background:#f0f0f0;box-shadow:inset 2px 3px #6a6e6e,inset -3px -3px #6e7272,inset 3px 4px #fcfcfc,inset -5px -5px #fcfcfc"></div>
<div class="a" style="left:96px;top:223px;width:1752px;height:746px;overflow:hidden;background:#f0f0f0">
<div class="win" style="left:909px;top:0px;width:909px;height:403px;background:linear-gradient(to right,#30303c 0,#30303c 1px,#e8ecf4 1px,#e8ecf4 2px,#d3e0f0 2px,#d3e0f0 11px,#808080 11px,#808080 12px,#000 12px);overflow:hidden"><div class="a" style="left:0;top:0;width:909px;height:40px;border-radius:7px 7px 0 0;background:#50506a"></div><div class="a" style="left:1px;top:1px;right:1px;height:39px;border-radius:6px 6px 0 0;background:#dde4ee"></div><div class="a" style="left:2px;top:2px;right:1px;height:37px;border-radius:5px 5px 0 0;background:linear-gradient(to bottom,#c8d2df 0,#cfdbe8 18px,#d4e1ef 36px)"></div><svg class="a" style="left:11.5px;top:13px" width="20" height="20" viewBox="0 0 32 32"><rect x="1" y="1" width="30" height="30" fill="#e8eef4" stroke="#3aa83a" stroke-width="2.4"/><path d="M3 8c5-4 8 4 13 0s8-4 13 0v5H3z" fill="#f4f4f4" /><path d="M3 9c5-4 8 4 13 0s8-4 13 0" fill="none" stroke="#c03030" stroke-width="2.2" /><path d="M3 15c5-4 8 4 13 0s8-4 13 0" fill="none" stroke="#6fa8dc" stroke-width="3" /><path d="M3 21c5-4 8 4 13 0s8-4 13 0" fill="none" stroke="#9cc6ea" stroke-width="3" /><path d="M3 26c5-4 8 4 13 0s8-4 13 0" fill="none" stroke="#a84040" stroke-width="2" /><rect x="22" y="24" width="7" height="5" fill="#9ad0b0"/></svg><div class="wt" style="left:37.5px;top:17.5px;font-size:14.4px;color:#9aa1aa">Section LS &quot;Alignment/ROADS-&gt;RS01&quot;</div><div class="cap" style="left:772px;top:12px;width:39px;height:22.5px;background:linear-gradient(to bottom,#d6e0ec 0,#ccd8e6 50%,#c4d1e1 51%,#d2dde9 100%)"><div class="a" style="left:12px;top:10px;width:13px;height:5px;background:#fff;border:1px solid #6a7890;border-radius:1px"></div></div><div class="cap" style="left:814.5px;top:12px;width:39px;height:22.5px;background:linear-gradient(to bottom,#d6e0ec 0,#ccd8e6 50%,#c4d1e1 51%,#d2dde9 100%)"><div class="a" style="left:12px;top:4px;width:13px;height:11px;background:#fff;border:1px solid #6a7890;border-radius:1px"><div class="a" style="left:2.5px;top:2.5px;width:6px;height:4px;border:1px solid #6a7890;background:#b8c4d4"></div></div></div><div class="cap" style="left:857px;top:12px;width:39.5px;height:22.5px;border-color:#8a3a3a;background:linear-gradient(to bottom,#e9a8a0 0,#dc7a70 48%,#c8402f 52%,#d2604a 78%,#dc8a62 100%)"><svg class="a" style="left:12px;top:4px" width="14" height="12"><path d="M2 1.5l10 9M12 1.5l-10 9" stroke="#4a4a4a" stroke-width="4.6"/><path d="M2 1.5l10 9M12 1.5l-10 9" stroke="#fff" stroke-width="2.6"/></svg></div><div class="a" style="left:11px;top:39px;width:898px;height:42px;background:#f5f5f5;border-top:1px solid #747474"></div><div class="rb" style="left:15px;top:44px;width:35px;height:34px"><svg class="a" style="left:1.0px;top:1px" width="32" height="32" viewBox="0 0 32 32"><rect x="5" y="7.5" width="22.5" height="3.8" fill="#3b84c8"/><rect x="5" y="14.2" width="22.5" height="4.3" fill="#e32828"/><rect x="5" y="21.5" width="22.5" height="3.8" fill="#3b84c8"/></svg></div><div class="rb" style="left:52.5px;top:44px;width:35px;height:34px"><svg class="a" style="left:1.0px;top:1px" width="32" height="32" viewBox="0 0 32 32"><rect x="5" y="13.8" width="22" height="4.4" fill="#3b84c8"/><rect x="13.8" y="5" width="4.4" height="22" fill="#3b84c8"/></svg></div><div class="rb" style="left:90.0px;top:44px;width:35px;height:34px"><svg class="a" style="left:1.0px;top:1px" width="32" height="32" viewBox="0 0 32 32"><rect x="4.6" y="13.7" width="22.6" height="5" fill="#e32828"/></svg></div><div class="rb" style="left:127.5px;top:44px;width:43.5px;height:34px"><svg class="a" style="left:5.2px;top:1px" width="32" height="32" viewBox="0 0 32 32"><text x="16" y="21.5" font-family="Liberation Sans" font-size="14.5" font-weight="normal" font-style="normal" fill="#1a1a1a" text-anchor="middle">10x</text></svg></div><div class="pb" style="left:175.0px;top:44px;width:35px;height:34px"><svg class="a" style="left:2.0px;top:2px" width="32" height="32" viewBox="0 0 32 32"><path d="M4 13c3-8 8-8 12-3s8 2 10-4l2 6c-3 8-8 7-12 3s-8-2-10 4z" fill="#3b84c8" /><path d="M5 25c3-8 8-8 12-3s8 2 10-4l1 6c-3 8-8 7-12 3s-8-2-10 4z" fill="#e32828" /></svg></div><div class="rb" style="left:212.5px;top:44px;width:35px;height:34px"><svg class="a" style="left:1.0px;top:1px" width="32" height="32" viewBox="0 0 32 32"><path d="M3 21l13-6 13 6-13 6z" fill="#2b6cb3" /><path d="M3 18l13-6 13 6-13 6z" fill="#e32828" /><path d="M3 13l13-7 13 7-13 7z" fill="#9cc6ea" /><path d="M3 13v3l13 7 13-7v-3l-13 7z" fill="#b8d8f0" /></svg></div><div class="rb" style="left:250.0px;top:44px;width:35px;height:34px"><svg class="a" style="left:1.0px;top:1px" width="32" height="32" viewBox="0 0 32 32"><path d="M3 16l10-8v5.5h16v5H13V24z" fill="#3b84c8" /></svg></div><div class="rb" style="left:287.5px;top:44px;width:35px;height:34px"><svg class="a" style="left:1.0px;top:1px" width="32" height="32" viewBox="0 0 32 32"><path d="M29 16L19 8v5.5H3v5h16V24z" fill="#3b84c8" /></svg></div><div class="rb" style="left:325.0px;top:44px;width:35px;height:34px"><svg class="a" style="left:1.0px;top:1px" width="32" height="32" viewBox="0 0 32 32"><path d="M22 3L8 17h7l-6 12 16-15h-8z" fill="#3b84c8" /></svg></div><div class="rb" style="left:362.5px;top:44px;width:35px;height:34px"><svg class="a" style="left:1.0px;top:1px" width="32" height="32" viewBox="0 0 32 32"><path d="M14 14L8.7 8.7" fill="none" stroke="#3b84c8" stroke-width="2.2" /><path d="M4.5 4.5L11.3 6.2L6.2 11.3Z" fill="#3b84c8" /><path d="M18 14L23.3 8.7" fill="none" stroke="#e32828" stroke-width="2.2" /><path d="M27.5 4.5L25.8 11.3L20.7 6.2Z" fill="#e32828" /><path d="M14 18L8.7 23.3" fill="none" stroke="#e32828" stroke-width="2.2" /><path d="M4.5 27.5L6.2 20.7L11.3 25.8Z" fill="#e32828" /><path d="M18 18L23.3 23.3" fill="none" stroke="#3b84c8" stroke-width="2.2" /><path d="M27.5 27.5L20.7 25.8L25.8 20.7Z" fill="#3b84c8" /></svg></div><div class="rb" style="left:400.0px;top:44px;width:35px;height:34px"><svg class="a" style="left:1.0px;top:1px" width="32" height="32" viewBox="0 0 32 32"><path d="M10 28c-2-4-6-8-7-11 1-2 3-1 5 2V7c0-2 3-2 3 0v7V5c0-2 3-2 3 0v9V6c0-2 3-2 3 0v9V9c0-2 3-2 3 0v11c0 4-2 6-3 8z" fill="#3b84c8" /></svg></div><div class="rb" style="left:437.5px;top:44px;width:35px;height:34px"><svg class="a" style="left:1.0px;top:1px" width="32" height="32" viewBox="0 0 32 32"><path d="M4 28L14 17" fill="none" stroke="#3b84c8" stroke-width="3.2" /><circle cx="19" cy="11" r="8" fill="#f4f4f4" stroke="#3b84c8" stroke-width="1.6"/><rect x="13.5" y="9.5" width="11" height="3" fill="#e32828"/><rect x="17.5" y="5.5" width="3" height="11" fill="#e32828"/></svg></div><div class="rb" style="left:475.0px;top:44px;width:35px;height:34px"><svg class="a" style="left:1.0px;top:1px" width="32" height="32" viewBox="0 0 32 32"><path d="M28 28L18 17" fill="none" stroke="#e32828" stroke-width="3.2" /><circle cx="13" cy="11" r="8" fill="#f4f4f4" stroke="#e32828" stroke-width="1.6"/><g transform="rotate(-25 13 11)"><rect x="7" y="9.5" width="12" height="3.2" fill="#3b84c8"/></g></svg></div><div class="rb" style="left:512.5px;top:44px;width:35px;height:34px"><svg class="a" style="left:1.0px;top:1px" width="32" height="32" viewBox="0 0 32 32"><path d="M3 11l9-7v4h9c5 0 7 3 7 8v11h-6V17c0-2-1-3-3-3h-7v4z" fill="#3b84c8" /></svg></div><div class="rb" style="left:550.0px;top:44px;width:35px;height:34px"><svg class="a" style="left:1.0px;top:1px" width="32" height="32" viewBox="0 0 32 32"><rect x="5" y="6" width="22" height="8" fill="#e32828" rx="4"/><circle cx="23" cy="10" r="5" fill="#3b84c8"/><rect x="5" y="18" width="22" height="8" fill="#e32828" rx="4"/><circle cx="9" cy="22" r="5" fill="#3b84c8"/></svg></div><div class="rb" style="left:587.5px;top:44px;width:35px;height:34px"><svg class="a" style="left:1.0px;top:1px" width="32" height="32" viewBox="0 0 32 32"><path d="M26 4v9h-9l3.5-3.5C16 6 8 9 8 16s7 11 12 9c3-1 5-3 6-6l3 1c-1 5-6 9-12 9C10 29 4 23 4 16 4 6 16 1 23 7z" fill="#3b84c8" /></svg></div><div class="rb" style="left:625.0px;top:44px;width:35px;height:34px"><svg class="a" style="left:1.0px;top:1px" width="32" height="32" viewBox="0 0 32 32"><rect x="9" y="3" width="14" height="8" fill="#f6f6f6" stroke="#9cc6ea" stroke-width="1.5"/><rect x="3" y="10" width="26" height="13" fill="#e32828" rx="2.5"/><rect x="8" y="11" width="16" height="5" fill="#3b84c8"/><rect x="9" y="19" width="14" height="10" fill="#f6f6f6" stroke="#ccc" stroke-width="1"/><rect x="9" y="19" width="14" height="1.5" fill="#a01818"/></svg></div><div class="rb" style="left:662.5px;top:44px;width:35px;height:34px"><svg class="a" style="left:1.0px;top:1px" width="32" height="32" viewBox="0 0 32 32"><rect x="4" y="4" width="15" height="15" fill="#3b84c8" rx="1.5"/><rect x="11" y="12" width="17" height="17" fill="#e32828" rx="1.5"/><path d="M10 8c8-3 13 2 12 9l3 0-5 6-5-6h3c1-4-3-7-8-5z" fill="#fff" /></svg></div><div class="rb" style="left:700.0px;top:44px;width:35px;height:34px"><svg class="a" style="left:1.0px;top:1px" width="32" height="32" viewBox="0 0 32 32"><path d="M25.1 12.7 L28.7 13.1 L28.7 18.9 L25.1 19.3 L24.7 20.1 L27.0 22.9 L22.9 27.0 L20.1 24.7 L19.3 25.1 L18.9 28.7 L13.1 28.7 L12.7 25.1 L11.9 24.7 L9.1 27.0 L5.0 22.9 L7.3 20.1 L6.9 19.3 L3.3 18.9 L3.3 13.1 L6.9 12.7 L7.3 11.9 L5.0 9.1 L9.1 5.0 L11.9 7.3 L12.7 6.9 L13.1 3.3 L18.9 3.3 L19.3 6.9 L20.1 7.3 L22.9 5.0 L27.0 9.1 L24.7 11.9Z" fill="#3b84c8" /><circle cx="16" cy="16" r="4.68" fill="#f0f0f0"/></svg></div><div class="rb" style="left:737.5px;top:44px;width:35px;height:34px"><svg class="a" style="left:1.0px;top:1px" width="32" height="32" viewBox="0 0 32 32"><path d="M16.0 4.0 L19.2 12.6 L28.4 13.0 L21.2 18.7 L23.6 27.5 L16.0 22.5 L8.4 27.5 L10.8 18.7 L3.6 13.0 L12.8 12.6Z" fill="#d8bc28" /></svg></div><div class="rb" style="left:775.0px;top:44px;width:35px;height:34px"><svg class="a" style="left:1.0px;top:1px" width="32" height="32" viewBox="0 0 32 32"><path d="M16 30C12 22 8 17 8 11a8 8 0 0 1 16 0c0 6-4 11-8 19z" fill="#d8202a" /><circle cx="16" cy="11" r="4" fill="#f4f4f4"/></svg></div><div class="rb" style="left:812.5px;top:44px;width:35px;height:34px"><svg class="a" style="left:1.0px;top:1px" width="32" height="32" viewBox="0 0 32 32"><rect x="4.5" y="4.5" width="10" height="10" fill="none" stroke="#3b84c8" stroke-width="1.8"/><rect x="18" y="4.5" width="10" height="10" fill="none" stroke="#e32828" stroke-width="1.8"/><rect x="4.5" y="18" width="10" height="10" fill="none" stroke="#e8503a" stroke-width="1.8"/><rect x="18" y="18" width="10" height="10" fill="none" stroke="#3b84c8" stroke-width="1.8"/></svg></div><div class="a" style="left:0;bottom:0;width:909px;height:12px;background:linear-gradient(to bottom,#f4f7fb 0,#f4f7fb 3px,#d3e0f0 3px,#d3e0f0 10px,#f4f7fb 10px,#f4f7fb 11px,#50506a 11px)"></div></div>
<svg class="a" style="left:921px;top:81px" width="885" height="310" viewBox="1017 304 885 310"><rect x="1017" y="304" width="885" height="310" fill="#000"/><path d="M1038.5 334H1848" stroke="#58d020" stroke-width="1.4" fill="none" />
<path d="M1038.5 334l6 -4v4z" stroke="#58d020" stroke-width="1" fill="none" />
<path d="M1263 334l-6 -4v4z" stroke="#58d020" stroke-width="1" fill="none" /><path d="M1270 336l6 -4v4z" stroke="#58d020" stroke-width="1" fill="none" />
<path d="M1385 334l-6 -4v4z" stroke="#58d020" stroke-width="1" fill="none" /><path d="M1378 336l-6 -4v4z" stroke="#58d020" stroke-width="1" fill="none" />
<path d="M1787 334l-6 -4v4z" stroke="#58d020" stroke-width="1" fill="none" /><path d="M1794 336l6 -4v4z" stroke="#58d020" stroke-width="1" fill="none" />
<path d="M1842 336l-6 -4v4z" stroke="#58d020" stroke-width="1" fill="none" />
<path d="M1266 336h118M1790 336h58" stroke="#58d020" stroke-width="1" fill="none" />
<path transform="translate(1113.0,316) scale(1.58,1.083)" d="M1 0L7 0L4 4.8Q7 4.8 7 8.4Q7 12 4 12Q1 12 1 10" stroke="#38c8b0" stroke-width="1.25" fill="none" vector-effect="non-scaling-stroke" stroke-linejoin="round"/><path transform="translate(1126.0,316) scale(1.58,1.083)" d="M3.6 11L3.6 12L4.6 12L4.6 11Z" stroke="#38c8b0" stroke-width="1.25" fill="none" vector-effect="non-scaling-stroke" stroke-linejoin="round"/><path transform="translate(1138.9,316) scale(1.58,1.083)" d="M1 2.6Q1 0 4 0Q7 0 7 3Q7 5 4.4 8L1 12L7 12" stroke="#38c8b0" stroke-width="1.25" fill="none" vector-effect="non-scaling-stroke" stroke-linejoin="round"/><path transform="translate(1151.8,316) scale(1.58,1.083)" d="M1 2Q1 0 3 0L5 0Q7 0 7 2L7 10Q7 12 5 12L3 12Q1 12 1 10ZM1.6 10.4L6.4 1.6" stroke="#38c8b0" stroke-width="1.25" fill="none" vector-effect="non-scaling-stroke" stroke-linejoin="round"/><path transform="translate(1164.8,316) scale(1.58,1.083)" d="M1 2Q1 0 3 0L5 0Q7 0 7 2L7 10Q7 12 5 12L3 12Q1 12 1 10ZM1.6 10.4L6.4 1.6" stroke="#38c8b0" stroke-width="1.25" fill="none" vector-effect="non-scaling-stroke" stroke-linejoin="round"/><path transform="translate(1177.7,316) scale(1.58,1.083)" d="M7 0L1 12M1 2.2Q1 0.6 2.4 0.6Q3.8 0.6 3.8 2.2Q3.8 3.8 2.4 3.8Q1 3.8 1 2.2ZM4.2 9.8Q4.2 8.2 5.6 8.2Q7 8.2 7 9.8Q7 11.4 5.6 11.4Q4.2 11.4 4.2 9.8Z" stroke="#38c8b0" stroke-width="1.25" fill="none" vector-effect="non-scaling-stroke" stroke-linejoin="round"/>
<path transform="translate(1273.4,341) scale(1.58,1.083)" d="M2.2 2.4L4 0L4 12" stroke="#38c8b0" stroke-width="1.25" fill="none" vector-effect="non-scaling-stroke" stroke-linejoin="round"/><path transform="translate(1285.6,341) scale(1.58,1.083)" d="M1 2.6Q1 0 4 0Q7 0 7 3Q7 5 4.4 8L1 12L7 12" stroke="#38c8b0" stroke-width="1.25" fill="none" vector-effect="non-scaling-stroke" stroke-linejoin="round"/><path transform="translate(1297.8,341) scale(1.58,1.083)" d="M1 2Q1 0 3 0L5 0Q7 0 7 2L7 10Q7 12 5 12L3 12Q1 12 1 10ZM1.6 10.4L6.4 1.6" stroke="#38c8b0" stroke-width="1.25" fill="none" vector-effect="non-scaling-stroke" stroke-linejoin="round"/><path transform="translate(1310.0,341) scale(1.58,1.083)" d="M3.6 11L3.6 12L4.6 12L4.6 11Z" stroke="#38c8b0" stroke-width="1.25" fill="none" vector-effect="non-scaling-stroke" stroke-linejoin="round"/><path transform="translate(1322.2,341) scale(1.58,1.083)" d="M1 2Q1 0 3 0L5 0Q7 0 7 2L7 10Q7 12 5 12L3 12Q1 12 1 10ZM1.6 10.4L6.4 1.6" stroke="#38c8b0" stroke-width="1.25" fill="none" vector-effect="non-scaling-stroke" stroke-linejoin="round"/><path transform="translate(1334.4,341) scale(1.58,1.083)" d="M1 2Q1 0 3 0L5 0Q7 0 7 2L7 10Q7 12 5 12L3 12Q1 12 1 10ZM1.6 10.4L6.4 1.6" stroke="#38c8b0" stroke-width="1.25" fill="none" vector-effect="non-scaling-stroke" stroke-linejoin="round"/><path transform="translate(1346.6,341) scale(1.58,1.083)" d="M1 2Q1 0 3 0L5 0Q7 0 7 2L7 10Q7 12 5 12L3 12Q1 12 1 10ZM1.6 10.4L6.4 1.6" stroke="#38c8b0" stroke-width="1.25" fill="none" vector-effect="non-scaling-stroke" stroke-linejoin="round"/><path transform="translate(1358.8,341) scale(1.58,1.083)" d="M1 0L1 12L7 12" stroke="#38c8b0" stroke-width="1.25" fill="none" vector-effect="non-scaling-stroke" stroke-linejoin="round"/>
<path transform="translate(1540.2,316) scale(1.58,1.083)" d="M1.4 6.4L6.6 6.4" stroke="#38c8b0" stroke-width="1.25" fill="none" vector-effect="non-scaling-stroke" stroke-linejoin="round"/><path transform="translate(1553.3,316) scale(1.58,1.083)" d="M1 2.6Q1 0 4 0Q7 0 7 3Q7 5 4.4 8L1 12L7 12" stroke="#38c8b0" stroke-width="1.25" fill="none" vector-effect="non-scaling-stroke" stroke-linejoin="round"/><path transform="translate(1566.3,316) scale(1.58,1.083)" d="M3.6 11L3.6 12L4.6 12L4.6 11Z" stroke="#38c8b0" stroke-width="1.25" fill="none" vector-effect="non-scaling-stroke" stroke-linejoin="round"/><path transform="translate(1579.4,316) scale(1.58,1.083)" d="M1 2Q1 0 3 0L5 0Q7 0 7 2L7 10Q7 12 5 12L3 12Q1 12 1 10ZM1.6 10.4L6.4 1.6" stroke="#38c8b0" stroke-width="1.25" fill="none" vector-effect="non-scaling-stroke" stroke-linejoin="round"/><path transform="translate(1592.4,316) scale(1.58,1.083)" d="M1 2Q1 0 3 0L5 0Q7 0 7 2L7 10Q7 12 5 12L3 12Q1 12 1 10ZM1.6 10.4L6.4 1.6" stroke="#38c8b0" stroke-width="1.25" fill="none" vector-effect="non-scaling-stroke" stroke-linejoin="round"/><path transform="translate(1605.5,316) scale(1.58,1.083)" d="M1 2Q1 0 3 0L5 0Q7 0 7 2L7 10Q7 12 5 12L3 12Q1 12 1 10ZM1.6 10.4L6.4 1.6" stroke="#38c8b0" stroke-width="1.25" fill="none" vector-effect="non-scaling-stroke" stroke-linejoin="round"/><path transform="translate(1618.5,316) scale(1.58,1.083)" d="M7 0L1 12M1 2.2Q1 0.6 2.4 0.6Q3.8 0.6 3.8 2.2Q3.8 3.8 2.4 3.8Q1 3.8 1 2.2ZM4.2 9.8Q4.2 8.2 5.6 8.2Q7 8.2 7 9.8Q7 11.4 5.6 11.4Q4.2 11.4 4.2 9.8Z" stroke="#38c8b0" stroke-width="1.25" fill="none" vector-effect="non-scaling-stroke" stroke-linejoin="round"/>
<path transform="translate(1825.9,316) scale(1.58,1.083)" d="M1 0L7 0L4 4.8Q7 4.8 7 8.4Q7 12 4 12Q1 12 1 10" stroke="#38c8b0" stroke-width="1.25" fill="none" vector-effect="non-scaling-stroke" stroke-linejoin="round"/><path transform="translate(1838.8,316) scale(1.58,1.083)" d="M3.6 11L3.6 12L4.6 12L4.6 11Z" stroke="#38c8b0" stroke-width="1.25" fill="none" vector-effect="non-scaling-stroke" stroke-linejoin="round"/><path transform="translate(1851.7,316) scale(1.58,1.083)" d="M1 2.6Q1 0 4 0Q7 0 7 3Q7 5 4.4 8L1 12L7 12" stroke="#38c8b0" stroke-width="1.25" fill="none" vector-effect="non-scaling-stroke" stroke-linejoin="round"/>
<path transform="translate(1776.4,341) scale(1.58,1.083)" d="M6.6 1Q5.4 0 4 0Q1 0 1 4L1 9Q1 12 4 12Q7 12 7 9Q7 6 4 6Q1 6 1 8.6" stroke="#38c8b0" stroke-width="1.25" fill="none" vector-effect="non-scaling-stroke" stroke-linejoin="round"/><path transform="translate(1789.3,341) scale(1.58,1.083)" d="M1 2Q1 0 3 0L5 0Q7 0 7 2L7 10Q7 12 5 12L3 12Q1 12 1 10ZM1.6 10.4L6.4 1.6" stroke="#38c8b0" stroke-width="1.25" fill="none" vector-effect="non-scaling-stroke" stroke-linejoin="round"/><path transform="translate(1802.2,341) scale(1.58,1.083)" d="M3.6 11L3.6 12L4.6 12L4.6 11Z" stroke="#38c8b0" stroke-width="1.25" fill="none" vector-effect="non-scaling-stroke" stroke-linejoin="round"/><path transform="translate(1815.1,341) scale(1.58,1.083)" d="M1 2Q1 0 3 0L5 0Q7 0 7 2L7 10Q7 12 5 12L3 12Q1 12 1 10ZM1.6 10.4L6.4 1.6" stroke="#38c8b0" stroke-width="1.25" fill="none" vector-effect="non-scaling-stroke" stroke-linejoin="round"/><path transform="translate(1828.0,341) scale(1.58,1.083)" d="M1 2Q1 0 3 0L5 0Q7 0 7 2L7 10Q7 12 5 12L3 12Q1 12 1 10ZM1.6 10.4L6.4 1.6" stroke="#38c8b0" stroke-width="1.25" fill="none" vector-effect="non-scaling-stroke" stroke-linejoin="round"/><path transform="translate(1840.9,341) scale(1.58,1.083)" d="M1 2Q1 0 3 0L5 0Q7 0 7 2L7 10Q7 12 5 12L3 12Q1 12 1 10ZM1.6 10.4L6.4 1.6" stroke="#38c8b0" stroke-width="1.25" fill="none" vector-effect="non-scaling-stroke" stroke-linejoin="round"/>
<path transform="translate(1286.2,564) scale(1.58,1.083)" d="M1.4 6.4L6.6 6.4" stroke="#38c8b0" stroke-width="1.25" fill="none" vector-effect="non-scaling-stroke" stroke-linejoin="round"/><path transform="translate(1299.1,564) scale(1.58,1.083)" d="M2.2 2.4L4 0L4 12" stroke="#38c8b0" stroke-width="1.25" fill="none" vector-effect="non-scaling-stroke" stroke-linejoin="round"/><path transform="translate(1312.0,564) scale(1.58,1.083)" d="M7 0L1 0L1 5.2Q2.5 4.4 4 4.4Q7 4.4 7 8.2Q7 12 4 12Q1 12 1 10" stroke="#38c8b0" stroke-width="1.25" fill="none" vector-effect="non-scaling-stroke" stroke-linejoin="round"/><path transform="translate(1324.9,564) scale(1.58,1.083)" d="M1 0L7 0L4 4.8Q7 4.8 7 8.4Q7 12 4 12Q1 12 1 10" stroke="#38c8b0" stroke-width="1.25" fill="none" vector-effect="non-scaling-stroke" stroke-linejoin="round"/><path transform="translate(1337.8,564) scale(1.58,1.083)" d="M3.6 11L3.6 12L4.6 12L4.6 11Z" stroke="#38c8b0" stroke-width="1.25" fill="none" vector-effect="non-scaling-stroke" stroke-linejoin="round"/><path transform="translate(1350.7,564) scale(1.58,1.083)" d="M1 2Q1 0 3 0L5 0Q7 0 7 2L7 10Q7 12 5 12L3 12Q1 12 1 10ZM1.6 10.4L6.4 1.6" stroke="#38c8b0" stroke-width="1.25" fill="none" vector-effect="non-scaling-stroke" stroke-linejoin="round"/><path transform="translate(1363.6,564) scale(1.58,1.083)" d="M1 2Q1 0 3 0L5 0Q7 0 7 2L7 10Q7 12 5 12L3 12Q1 12 1 10ZM1.6 10.4L6.4 1.6" stroke="#38c8b0" stroke-width="1.25" fill="none" vector-effect="non-scaling-stroke" stroke-linejoin="round"/><path transform="translate(1376.5,564) scale(1.58,1.083)" d="M1 2Q1 0 3 0L5 0Q7 0 7 2L7 10Q7 12 5 12L3 12Q1 12 1 10ZM1.6 10.4L6.4 1.6" stroke="#38c8b0" stroke-width="1.25" fill="none" vector-effect="non-scaling-stroke" stroke-linejoin="round"/><path transform="translate(1389.4,564) scale(1.58,1.083)" d="M1 12L1 0L5 0Q7 0 7 3Q7 6 5 6L1 6M4.6 6L7 12" stroke="#38c8b0" stroke-width="1.25" fill="none" vector-effect="non-scaling-stroke" stroke-linejoin="round"/>
<path transform="translate(1678.4,564) scale(1.58,1.083)" d="M2.2 2.4L4 0L4 12" stroke="#38c8b0" stroke-width="1.25" fill="none" vector-effect="non-scaling-stroke" stroke-linejoin="round"/><path transform="translate(1691.0,564) scale(1.58,1.083)" d="M1 2.6Q1 0 4 0Q7 0 7 3Q7 5 4.4 8L1 12L7 12" stroke="#38c8b0" stroke-width="1.25" fill="none" vector-effect="non-scaling-stroke" stroke-linejoin="round"/><path transform="translate(1703.5,564) scale(1.58,1.083)" d="M1 2Q1 0 3 0L5 0Q7 0 7 2L7 10Q7 12 5 12L3 12Q1 12 1 10ZM1.6 10.4L6.4 1.6" stroke="#38c8b0" stroke-width="1.25" fill="none" vector-effect="non-scaling-stroke" stroke-linejoin="round"/><path transform="translate(1716.1,564) scale(1.58,1.083)" d="M1 2Q1 0 3 0L5 0Q7 0 7 2L7 10Q7 12 5 12L3 12Q1 12 1 10ZM1.6 10.4L6.4 1.6" stroke="#38c8b0" stroke-width="1.25" fill="none" vector-effect="non-scaling-stroke" stroke-linejoin="round"/><path transform="translate(1728.6,564) scale(1.58,1.083)" d="M3.6 11L3.6 12L4.6 12L4.6 11Z" stroke="#38c8b0" stroke-width="1.25" fill="none" vector-effect="non-scaling-stroke" stroke-linejoin="round"/><path transform="translate(1741.2,564) scale(1.58,1.083)" d="M1 2Q1 0 3 0L5 0Q7 0 7 2L7 10Q7 12 5 12L3 12Q1 12 1 10ZM1.6 10.4L6.4 1.6" stroke="#38c8b0" stroke-width="1.25" fill="none" vector-effect="non-scaling-stroke" stroke-linejoin="round"/><path transform="translate(1753.7,564) scale(1.58,1.083)" d="M1 2Q1 0 3 0L5 0Q7 0 7 2L7 10Q7 12 5 12L3 12Q1 12 1 10ZM1.6 10.4L6.4 1.6" stroke="#38c8b0" stroke-width="1.25" fill="none" vector-effect="non-scaling-stroke" stroke-linejoin="round"/><path transform="translate(1766.3,564) scale(1.58,1.083)" d="M1 2Q1 0 3 0L5 0Q7 0 7 2L7 10Q7 12 5 12L3 12Q1 12 1 10ZM1.6 10.4L6.4 1.6" stroke="#38c8b0" stroke-width="1.25" fill="none" vector-effect="non-scaling-stroke" stroke-linejoin="round"/><path transform="translate(1778.8,564) scale(1.58,1.083)" d="M1 12L1 0L5 0Q7 0 7 3Q7 6 5 6L1 6M4.6 6L7 12" stroke="#38c8b0" stroke-width="1.25" fill="none" vector-effect="non-scaling-stroke" stroke-linejoin="round"/>
<path d="M1222.6 582.8H1468.7" stroke="#58d020" stroke-width="1.2" fill="none" />
<path d="M1222.6 582.8l6 -4v4z" stroke="#58d020" stroke-width="1" fill="none" /><path d="M1468.7 582.8l-6 -4v4z" stroke="#58d020" stroke-width="1" fill="none" />
<path d="M1648 582.8H1825.7" stroke="#58d020" stroke-width="1.2" fill="none" />
<path d="M1648 582.8l6 -4v4z" stroke="#58d020" stroke-width="1" fill="none" /><path d="M1825.7 582.8l-6 -4v4z" stroke="#58d020" stroke-width="1" fill="none" />
<path d="M1039.0 499.0 L1100.0 477.0 L1138.0 464.8 L1138.0 464.8 L1140.0 457.0 L1142.0 454.4 L1169.0 446.6 L1172.0 452.0 L1174.0 457.5 L1213.5 442.7 L1218.0 437.0 L1224.0 430.4 L1231.8 436.5 L1250.0 430.0 L1278.6 422.5 L1312.5 415.5 L1340.0 414.0 L1364.6 415.8 L1395.8 420.5 L1398.4 418.0 L1402.0 408.0 L1406.0 404.0 L1410.0 406.0 L1412.8 411.0 L1416.0 425.7 L1460.0 435.0 L1500.0 442.7 L1560.0 453.5 L1602.0 462.5 L1628.0 470.0 L1670.0 482.0 L1714.0 497.0 L1750.0 507.0 L1785.0 512.0 L1815.0 511.0 L1848.0 505.0" stroke="#58d020" stroke-width="1.2" fill="none" />
<path d="M1039.0 500.0C1055.5 494.2 1108.9 475.2 1138.0 465.5C1167.1 455.8 1190.1 448.6 1213.5 441.5C1236.9 434.4 1262.1 427.2 1278.6 423.0C1295.1 418.8 1302.3 417.8 1312.5 416.5C1322.7 415.2 1331.3 415.1 1340.0 415.0C1348.7 414.9 1355.3 415.1 1364.6 416.0C1373.9 416.9 1386.6 418.7 1395.8 420.5C1405.0 422.3 1402.6 423.2 1420.0 427.0C1437.4 430.8 1469.7 437.2 1500.0 443.0C1530.3 448.8 1568.7 455.8 1602.0 462.0C1635.3 468.2 1673.7 474.7 1700.0 480.0C1726.3 485.3 1743.3 490.2 1760.0 494.0C1776.7 497.8 1788.3 501.2 1800.0 503.0C1811.7 504.8 1822.0 505.2 1830.0 505.0C1838.0 504.8 1845.0 502.1 1848.0 501.5" stroke="#e81010" stroke-width="1.6" fill="none" /></svg>
<div class="win" style="left:909px;top:404px;width:909px;height:420px;background:linear-gradient(to right,#30303c 0,#30303c 1px,#e8ecf4 1px,#e8ecf4 2px,#d3e0f0 2px,#d3e0f0 11px,#808080 11px,#808080 12px,#000 12px);overflow:hidden"><div class="a" style="left:0;top:0;width:909px;height:40px;border-radius:7px 7px 0 0;background:#50506a"></div><div class="a" style="left:1px;top:1px;right:1px;height:39px;border-radius:6px 6px 0 0;background:#dde4ee"></div><div class="a" style="left:2px;top:2px;right:1px;height:37px;border-radius:5px 5px 0 0;background:linear-gradient(to bottom,#c8d2df 0,#cfdbe8 18px,#d4e1ef 36px)"></div><svg class="a" style="left:11.5px;top:13px" width="20" height="20" viewBox="0 0 32 32"><rect x="1" y="1" width="30" height="30" fill="#e4ecf6" stroke="#2b5fa8" stroke-width="2.4"/><path d="M3 29L28 3M3 29l13-18M3 29l20-9" fill="none" stroke="#2b5fa8" stroke-width="2" /><path d="M16 11l12-8-5 17z" fill="#c8d8ec" /></svg><div class="wt" style="left:37.5px;top:17.5px;font-size:14.1px;color:#9aa1aa">Perspective OpenGL 3D</div><div class="cap" style="left:772px;top:12px;width:39px;height:22.5px;background:linear-gradient(to bottom,#d6e0ec 0,#ccd8e6 50%,#c4d1e1 51%,#d2dde9 100%)"><div class="a" style="left:12px;top:10px;width:13px;height:5px;background:#fff;border:1px solid #6a7890;border-radius:1px"></div></div><div class="cap" style="left:814.5px;top:12px;width:39px;height:22.5px;background:linear-gradient(to bottom,#d6e0ec 0,#ccd8e6 50%,#c4d1e1 51%,#d2dde9 100%)"><div class="a" style="left:12px;top:4px;width:13px;height:11px;background:#fff;border:1px solid #6a7890;border-radius:1px"><div class="a" style="left:2.5px;top:2.5px;width:6px;height:4px;border:1px solid #6a7890;background:#b8c4d4"></div></div></div><div class="cap" style="left:857px;top:12px;width:39.5px;height:22.5px;border-color:#8a3a3a;background:linear-gradient(to bottom,#e9a8a0 0,#dc7a70 48%,#c8402f 52%,#d2604a 78%,#dc8a62 100%)"><svg class="a" style="left:12px;top:4px" width="14" height="12"><path d="M2 1.5l10 9M12 1.5l-10 9" stroke="#4a4a4a" stroke-width="4.6"/><path d="M2 1.5l10 9M12 1.5l-10 9" stroke="#fff" stroke-width="2.6"/></svg></div><div class="a" style="left:11px;top:39px;width:898px;height:42px;background:#f5f5f5;border-top:1px solid #747474"></div><div class="rb" style="left:15px;top:44px;width:35px;height:34px"><svg class="a" style="left:1.0px;top:1px" width="32" height="32" viewBox="0 0 32 32"><rect x="5" y="7.5" width="22.5" height="3.8" fill="#3b84c8"/><rect x="5" y="14.2" width="22.5" height="4.3" fill="#e32828"/><rect x="5" y="21.5" width="22.5" height="3.8" fill="#3b84c8"/></svg></div><div class="rb" style="left:52.5px;top:44px;width:35px;height:34px"><svg class="a" style="left:1.0px;top:1px" width="32" height="32" viewBox="0 0 32 32"><rect x="5" y="13.8" width="22" height="4.4" fill="#3b84c8"/><rect x="13.8" y="5" width="4.4" height="22" fill="#3b84c8"/></svg></div><div class="rb" style="left:90.0px;top:44px;width:35px;height:34px"><svg class="a" style="left:1.0px;top:1px" width="32" height="32" viewBox="0 0 32 32"><rect x="4.6" y="13.7" width="22.6" height="5" fill="#e32828"/></svg></div><div class="pb" style="left:127.5px;top:44px;width:35px;height:34px"><svg class="a" style="left:2.0px;top:2px" width="32" height="32" viewBox="0 0 32 32"><path d="M14 14L8.7 8.7" fill="none" stroke="#3b84c8" stroke-width="2.2" /><path d="M4.5 4.5L11.3 6.2L6.2 11.3Z" fill="#3b84c8" /><path d="M18 14L23.3 8.7" fill="none" stroke="#e32828" stroke-width="2.2" /><path d="M27.5 4.5L25.8 11.3L20.7 6.2Z" fill="#e32828" /><path d="M14 18L8.7 23.3" fill="none" stroke="#e32828" stroke-width="2.2" /><path d="M4.5 27.5L6.2 20.7L11.3 25.8Z" fill="#e32828" /><path d="M18 18L23.3 23.3" fill="none" stroke="#3b84c8" stroke-width="2.2" /><path d="M27.5 27.5L20.7 25.8L25.8 20.7Z" fill="#3b84c8" /></svg></div><div class="rb" style="left:165.0px;top:44px;width:35px;height:34px"><svg class="a" style="left:1.0px;top:1px" width="32" height="32" viewBox="0 0 32 32"><path d="M10 28c-2-4-6-8-7-11 1-2 3-1 5 2V7c0-2 3-2 3 0v7V5c0-2 3-2 3 0v9V6c0-2 3-2 3 0v9V9c0-2 3-2 3 0v11c0 4-2 6-3 8z" fill="#3b84c8" /></svg></div><div class="rb" style="left:202.5px;top:44px;width:35px;height:34px"><svg class="a" style="left:1.0px;top:1px" width="32" height="32" viewBox="0 0 32 32"><path d="M4 28L14 17" fill="none" stroke="#3b84c8" stroke-width="3.2" /><circle cx="19" cy="11" r="8" fill="#f4f4f4" stroke="#3b84c8" stroke-width="1.6"/><rect x="13.5" y="9.5" width="11" height="3" fill="#e32828"/><rect x="17.5" y="5.5" width="3" height="11" fill="#e32828"/></svg></div><div class="rb" style="left:240.0px;top:44px;width:35px;height:34px"><svg class="a" style="left:1.0px;top:1px" width="32" height="32" viewBox="0 0 32 32"><path d="M28 28L18 17" fill="none" stroke="#e32828" stroke-width="3.2" /><circle cx="13" cy="11" r="8" fill="#f4f4f4" stroke="#e32828" stroke-width="1.6"/><g transform="rotate(-25 13 11)"><rect x="7" y="9.5" width="12" height="3.2" fill="#3b84c8"/></g></svg></div><div class="rb" style="left:277.5px;top:44px;width:35px;height:34px"><svg class="a" style="left:1.0px;top:1px" width="32" height="32" viewBox="0 0 32 32"><path d="M3 11l9-7v4h9c5 0 7 3 7 8v11h-6V17c0-2-1-3-3-3h-7v4z" fill="#3b84c8" /></svg></div><div class="rb" style="left:315.0px;top:44px;width:35px;height:34px"><svg class="a" style="left:1.0px;top:1px" width="32" height="32" viewBox="0 0 32 32"><rect x="5" y="6" width="22" height="8" fill="#e32828" rx="4"/><circle cx="23" cy="10" r="5" fill="#3b84c8"/><rect x="5" y="18" width="22" height="8" fill="#e32828" rx="4"/><circle cx="9" cy="22" r="5" fill="#3b84c8"/></svg></div><div class="rb" style="left:352.5px;top:44px;width:35px;height:34px"><svg class="a" style="left:1.0px;top:1px" width="32" height="32" viewBox="0 0 32 32"><path d="M2 13c7-10 21-10 28 0-7 8-21 8-28 0z" fill="none" stroke="#e32828" stroke-width="2.6" /><circle cx="16" cy="12" r="5" fill="#e32828"/><path d="M17 18h8v5h4l-8 7-8-7h4z" fill="#3b84c8" /></svg></div><div class="rb" style="left:390.0px;top:44px;width:35px;height:34px"><svg class="a" style="left:1.0px;top:1px" width="32" height="32" viewBox="0 0 32 32"><circle cx="16" cy="16" r="9.5" fill="#d8303a"/><ellipse cx="16" cy="17" rx="15" ry="5.5" fill="none" stroke="#3b84c8" stroke-width="2.2" transform="rotate(25 16 17)"/><path d="M7 12a10 10 0 0 1 18 0z" fill="#d8303a" /></svg></div><div class="rb" style="left:427.5px;top:44px;width:35px;height:34px"><svg class="a" style="left:1.0px;top:1px" width="32" height="32" viewBox="0 0 32 32"><rect x="5" y="12" width="20" height="14" fill="#3b84c8" rx="3"/><path d="M25 16l5-3v12l-5-3z" fill="#3b84c8" /><circle cx="10" cy="10" r="4" fill="#3b84c8"/><circle cx="20" cy="9" r="4.5" fill="#3b84c8"/><path d="M19 17l6 3-6 3z" fill="#e32828" /><path d="M12 4h10" fill="none" stroke="#e32828" stroke-width="1.5" /><circle cx="22" cy="4" r="1.8" fill="#e32828"/></svg></div><div class="rb" style="left:465.0px;top:44px;width:35px;height:34px"><svg class="a" style="left:1.0px;top:1px" width="32" height="32" viewBox="0 0 32 32"><ellipse cx="16" cy="24" rx="11" ry="5" fill="#3b84c8"/><path d="M5 24v2c0 6 22 6 22 0v-2z" fill="#2b6cb3" /><path d="M17 7l-3 14" fill="none" stroke="#e32828" stroke-width="3" /><circle cx="18" cy="6" r="4.2" fill="#3b84c8"/></svg></div><div class="rb" style="left:502.5px;top:44px;width:35px;height:34px"><svg class="a" style="left:1.0px;top:1px" width="32" height="32" viewBox="0 0 32 32"><ellipse cx="20" cy="7" rx="7" ry="4" fill="#3b84c8" transform="rotate(-25 20 7)"/><circle cx="9" cy="12" r="2.8" fill="#3b84c8"/><ellipse cx="20" cy="21" rx="7" ry="4" fill="#e32828" transform="rotate(-25 20 21)"/><circle cx="9" cy="26" r="2.8" fill="#e32828"/></svg></div><div class="rb" style="left:540.0px;top:44px;width:35px;height:34px"><svg class="a" style="left:1.0px;top:1px" width="32" height="32" viewBox="0 0 32 32"><circle cx="16" cy="16" r="12" fill="none" stroke="#3b84c8" stroke-width="3.4"/><path d="M5 13c7-3 15-3 22 0l-1 3c-4-1-6 0-7 3l-1 8h-4l-1-8c-1-3-3-4-7-3z" fill="#3b84c8" /></svg></div><div class="rb" style="left:577.5px;top:44px;width:35px;height:34px"><svg class="a" style="left:1.0px;top:1px" width="32" height="32" viewBox="0 0 32 32"><path d="M26 4v9h-9l3.5-3.5C16 6 8 9 8 16s7 11 12 9c3-1 5-3 6-6l3 1c-1 5-6 9-12 9C10 29 4 23 4 16 4 6 16 1 23 7z" fill="#3b84c8" /></svg></div><div class="rb" style="left:615.0px;top:44px;width:35px;height:34px"><svg class="a" style="left:1.0px;top:1px" width="32" height="32" viewBox="0 0 32 32"><rect x="9" y="3" width="14" height="8" fill="#f6f6f6" stroke="#9cc6ea" stroke-width="1.5"/><rect x="3" y="10" width="26" height="13" fill="#e32828" rx="2.5"/><rect x="8" y="11" width="16" height="5" fill="#3b84c8"/><rect x="9" y="19" width="14" height="10" fill="#f6f6f6" stroke="#ccc" stroke-width="1"/><rect x="9" y="19" width="14" height="1.5" fill="#a01818"/></svg></div><div class="rb" style="left:652.5px;top:44px;width:35px;height:34px"><svg class="a" style="left:1.0px;top:1px" width="32" height="32" viewBox="0 0 32 32"><rect x="4" y="4" width="15" height="15" fill="#3b84c8" rx="1.5"/><rect x="11" y="12" width="17" height="17" fill="#e32828" rx="1.5"/><path d="M10 8c8-3 13 2 12 9l3 0-5 6-5-6h3c1-4-3-7-8-5z" fill="#fff" /></svg></div><div class="rb" style="left:690.0px;top:44px;width:35px;height:34px"><svg class="a" style="left:1.0px;top:1px" width="32" height="32" viewBox="0 0 32 32"><path d="M25.1 12.7 L28.7 13.1 L28.7 18.9 L25.1 19.3 L24.7 20.1 L27.0 22.9 L22.9 27.0 L20.1 24.7 L19.3 25.1 L18.9 28.7 L13.1 28.7 L12.7 25.1 L11.9 24.7 L9.1 27.0 L5.0 22.9 L7.3 20.1 L6.9 19.3 L3.3 18.9 L3.3 13.1 L6.9 12.7 L7.3 11.9 L5.0 9.1 L9.1 5.0 L11.9 7.3 L12.7 6.9 L13.1 3.3 L18.9 3.3 L19.3 6.9 L20.1 7.3 L22.9 5.0 L27.0 9.1 L24.7 11.9Z" fill="#3b84c8" /><circle cx="16" cy="16" r="4.68" fill="#f0f0f0"/></svg></div><div class="rb" style="left:727.5px;top:44px;width:35px;height:34px"><svg class="a" style="left:1.0px;top:1px" width="32" height="32" viewBox="0 0 32 32"><path d="M16.0 4.0 L19.2 12.6 L28.4 13.0 L21.2 18.7 L23.6 27.5 L16.0 22.5 L8.4 27.5 L10.8 18.7 L3.6 13.0 L12.8 12.6Z" fill="#d8bc28" /></svg></div><div class="rb" style="left:765.0px;top:44px;width:35px;height:34px"><svg class="a" style="left:1.0px;top:1px" width="32" height="32" viewBox="0 0 32 32"><path d="M16 30C12 22 8 17 8 11a8 8 0 0 1 16 0c0 6-4 11-8 19z" fill="#d8202a" /><circle cx="16" cy="11" r="4" fill="#f4f4f4"/></svg></div><div class="rb" style="left:802.5px;top:44px;width:35px;height:34px"><svg class="a" style="left:1.0px;top:1px" width="32" height="32" viewBox="0 0 32 32"><rect x="4.5" y="4.5" width="10" height="10" fill="none" stroke="#3b84c8" stroke-width="1.8"/><rect x="18" y="4.5" width="10" height="10" fill="none" stroke="#e32828" stroke-width="1.8"/><rect x="4.5" y="18" width="10" height="10" fill="none" stroke="#e8503a" stroke-width="1.8"/><rect x="18" y="18" width="10" height="10" fill="none" stroke="#3b84c8" stroke-width="1.8"/></svg></div><div class="a" style="left:0;bottom:0;width:909px;height:12px;background:linear-gradient(to bottom,#f4f7fb 0,#f4f7fb 3px,#d3e0f0 3px,#d3e0f0 10px,#f4f7fb 10px,#f4f7fb 11px,#50506a 11px)"></div></div>
<div class="a" style="left:909px;top:402px;width:909px;height:2px;background:#50506a"></div>
<svg class="a" style="left:921px;top:485px" width="885" height="270" viewBox="1017 708 885 270"><rect x="1017" y="708" width="885" height="270" fill="#000"/><path d="M1700.0 735.0C1676.7 734.7 1610.0 733.5 1560.0 733.0C1510.0 732.5 1438.3 730.8 1400.0 732.0C1361.7 733.2 1350.0 735.3 1330.0 740.0C1310.0 744.7 1294.2 751.7 1280.0 760.0C1265.8 768.3 1254.2 779.2 1245.0 790.0C1235.8 800.8 1230.0 813.3 1225.0 825.0C1220.0 836.7 1217.0 847.5 1215.0 860.0C1213.0 872.5 1214.2 886.7 1213.0 900.0C1211.8 913.3 1210.2 929.0 1208.0 940.0C1205.8 951.0 1201.3 961.7 1200.0 966.0" stroke="#b81018" stroke-width="1.5" fill="none" />
<path d="M1200.0 963.5C1233.3 963.3 1340.0 962.8 1400.0 962.5C1460.0 962.2 1528.9 962.3 1560.0 962.0C1591.1 961.7 1573.0 962.6 1586.7 960.5C1600.4 958.4 1625.8 953.6 1642.0 949.4C1658.2 945.2 1672.4 941.5 1684.0 935.5C1695.6 929.5 1705.5 921.6 1711.7 913.3C1717.9 905.0 1720.2 893.8 1721.4 885.5C1722.6 877.2 1721.6 871.6 1718.6 863.3C1715.6 855.0 1709.1 844.8 1703.3 835.5C1697.5 826.2 1690.0 817.0 1684.0 807.8C1678.0 798.5 1671.5 787.3 1667.0 780.0C1662.5 772.7 1658.7 766.7 1657.0 764.0" stroke="#b81018" stroke-width="1.5" fill="none" />
<path d="M1378.0 850.0 L1420.0 828.6 L1461.7 810.5 L1503.0 791.0 L1580.0 792.5 L1675.5 795.0" stroke="#b81018" stroke-width="1.5" fill="none" />
<path d="M1547.8 864.7C1544.8 865.9 1535.6 869.5 1530.0 872.0C1524.4 874.5 1517.7 876.8 1514.4 880.0C1511.1 883.2 1509.9 883.5 1510.0 891.0C1510.1 898.5 1513.1 913.4 1515.0 925.0C1516.9 936.6 1520.3 954.6 1521.4 960.5" stroke="#b81018" stroke-width="1.5" fill="none" />
<path d="M1572.8 871L1685.3 917.5" stroke="#28a8c0" stroke-width="1.6" fill="none" />
<path d="M1361 852c4-9 22-12 31-6 4 5-4 10-14 11" stroke="#b8a830" stroke-width="1.4" fill="none"/>
<path d="M1361 852c6 6 14 6 20 3" stroke="#b8a830" stroke-width="1.4" fill="none"/>
<path d="M1527 868c4-9 22-12 31-6 4 6-2 10-14 12" stroke="#b8a830" stroke-width="1.4" fill="none"/>
<path d="M1534 876c8-1 14-2 18-4" stroke="#b8a830" stroke-width="1.2" fill="none"/>
<path d="M1643 758c4-5 16-5 21 0 2 4-1 8-6 10M1668 790c-2 4-6 6-10 6M1662 802c6 1 10 3 12 6" stroke="#b8a830" stroke-width="1.3" fill="none"/>
<path d="M1472.8 957.8C1476.5 956.5 1489.5 952.6 1495.0 950.0C1500.5 947.4 1503.2 944.9 1506.0 942.0C1508.8 939.1 1510.8 934.3 1511.7 932.8" stroke="#b8a830" stroke-width="1.4" fill="none" />
<path d="M1524.0 932.8C1525.3 934.7 1528.0 940.8 1532.0 944.0C1536.0 947.2 1541.4 949.9 1548.0 952.0C1554.6 954.1 1567.5 955.7 1571.4 956.4" stroke="#b8a830" stroke-width="1.4" fill="none" />
<path d="M1462 967c8-2 14-2 20 0M1556 967c6-2 12-3 18-3" stroke="#b8a830" stroke-width="1.3" fill="none" />
<ellipse cx="1522.8" cy="962" rx="15.5" ry="8" fill="none" stroke="#20a030" stroke-width="1.3"/>
<path d="M1215.6 895.5C1216.3 897.9 1219.1 904.9 1220.0 910.0C1220.9 915.1 1221.2 920.2 1221.0 926.0C1220.8 931.8 1218.3 940.2 1218.5 945.0C1218.7 949.8 1218.5 952.7 1222.0 955.0C1225.5 957.3 1236.7 958.3 1239.6 959.0" stroke="#b8a830" stroke-width="1.4" fill="none" />
<path d="M1207 957l7-4v7z" stroke="#20a030" stroke-width="1.1" fill="none" />
<path d="M1084 951V931" stroke="#2060e0" stroke-width="2.2" fill="none" />
<path d="M1084 951l-16-5" stroke="#30c030" stroke-width="2" fill="none" />
<path d="M1084 951l14-9" stroke="#e02020" stroke-width="2" fill="none" />
<text x="1079" y="929" font-family="Liberation Sans" font-size="26" font-weight="bold" font-style="italic" fill="#2a6ae0" transform="translate(1079,929) scale(.8,1) translate(-1079,-929)">Z</text>
<text x="1057" y="945" font-family="Liberation Sans" font-size="17" font-weight="bold" font-style="italic" fill="#30c030">Y</text>
<text x="1097" y="946" font-family="Liberation Sans" font-size="18" font-weight="bold" font-style="italic" fill="#e02020">X</text></svg>
<div class="win" style="left:0px;top:0px;width:909px;height:780px;background:linear-gradient(to right,#46465c 0,#46465c 2px,#ddeaf8 2px,#ddeaf8 3px,#bdd4ee 3px,#bdd4ee 10px,#b4b4c6 10px,#a4a4b6 12px,#404058 12px,#404058 13px,#000 13px,#000 896px,#f2f7fc 896px,#f2f7fc 899px,#c8d8e8 899px,#c8d8e8 906px,#a8d0ec 906px,#3a84cc 907px,#2a68b0 908px,#101018 908px);overflow:hidden"><div class="a" style="left:0;top:0;width:909px;height:40px;border-radius:7px 7px 0 0;background:#46465c"></div><div class="a" style="left:2px;top:1px;right:1px;height:39px;border-radius:6px 6px 0 0;background:#eef3fa"></div><div class="a" style="left:3px;top:2px;right:2px;height:37px;border-radius:5px 5px 0 0;background:linear-gradient(to bottom,#98b7d9 0,#a6bfdf 18px,#b2cce9 35px,#c5d8ee 36px)"></div><svg class="a" style="left:12.5px;top:13px" width="20" height="20" viewBox="0 0 32 32"><rect x="1" y="1" width="30" height="30" fill="#dfe8f0" stroke="#d83030" stroke-width="2.4"/><circle cx="14" cy="13" r="8" fill="#f4f4f4"/><path d="M6 6l4 4M22 5l3 5M8 20l4-5" fill="none" stroke="#8ab" stroke-width="2" /><circle cx="7" cy="10" r="2" fill="#335"/><circle cx="24" cy="14" r="2" fill="#335"/><path d="M7 26h6M10 23v6" fill="none" stroke="#2a8a2a" stroke-width="2.4" /><path d="M22 26h6" fill="none" stroke="#d02020" stroke-width="2.4" /><path d="M16 8l6 4-6 6z" fill="#bcd" /></svg><div class="wt" style="left:38.5px;top:17.5px;font-size:13.5px;color:#111">Plan DESIGN</div><div class="cap" style="left:772px;top:12px;width:39px;height:22.5px;background:linear-gradient(to bottom,#c2d5ec 0,#b4c9e4 50%,#a3bcdb 51%,#b8cde7 100%)"><div class="a" style="left:12px;top:10px;width:13px;height:5px;background:#fff;border:1px solid #6a7890;border-radius:1px"></div></div><div class="cap" style="left:814.5px;top:12px;width:39px;height:22.5px;background:linear-gradient(to bottom,#c2d5ec 0,#b4c9e4 50%,#a3bcdb 51%,#b8cde7 100%)"><div class="a" style="left:12px;top:4px;width:13px;height:11px;background:#fff;border:1px solid #6a7890;border-radius:1px"><div class="a" style="left:2.5px;top:2.5px;width:6px;height:4px;border:1px solid #6a7890;background:#b8c4d4"></div></div></div><div class="cap" style="left:857px;top:12px;width:39.5px;height:22.5px;border-color:#8a3a3a;background:linear-gradient(to bottom,#e9a8a0 0,#dc7a70 48%,#c8402f 52%,#d2604a 78%,#dc8a62 100%)"><svg class="a" style="left:12px;top:4px" width="14" height="12"><path d="M2 1.5l10 9M12 1.5l-10 9" stroke="#4a4a4a" stroke-width="4.6"/><path d="M2 1.5l10 9M12 1.5l-10 9" stroke="#fff" stroke-width="2.6"/></svg></div><div class="a" style="left:13px;top:39px;width:883px;height:42px;background:#f5f5f5;border-top:1px solid #747474"></div><div class="rb" style="left:15.5px;top:44px;width:35px;height:34px"><svg class="a" style="left:1.0px;top:1px" width="32" height="32" viewBox="0 0 32 32"><rect x="5" y="7.5" width="22.5" height="3.8" fill="#3b84c8"/><rect x="5" y="14.2" width="22.5" height="4.3" fill="#e32828"/><rect x="5" y="21.5" width="22.5" height="3.8" fill="#3b84c8"/></svg></div><div class="rb" style="left:53.0px;top:44px;width:35px;height:34px"><svg class="a" style="left:1.0px;top:1px" width="32" height="32" viewBox="0 0 32 32"><rect x="5" y="13.8" width="22" height="4.4" fill="#3b84c8"/><rect x="13.8" y="5" width="4.4" height="22" fill="#3b84c8"/></svg></div><div class="rb" style="left:90.5px;top:44px;width:35px;height:34px"><svg class="a" style="left:1.0px;top:1px" width="32" height="32" viewBox="0 0 32 32"><rect x="4.6" y="13.7" width="22.6" height="5" fill="#e32828"/></svg></div><div class="rb" style="left:128.0px;top:44px;width:35px;height:34px"><svg class="a" style="left:1.0px;top:1px" width="32" height="32" viewBox="0 0 32 32"><path d="M5 10C10 5 20 4 27 6l-3 9c-1 3-1 8 1 12l-10 2c-1-6-1-10-4-13z" fill="#3b84c8" /><path d="M5 10l6 6" fill="none" stroke="#2b6cb3" stroke-width="2" /></svg></div><div class="rb" style="left:165.5px;top:44px;width:35px;height:34px"><svg class="a" style="left:1.0px;top:1px" width="32" height="32" viewBox="0 0 32 32"><path d="M14 14L8.7 8.7" fill="none" stroke="#3b84c8" stroke-width="2.2" /><path d="M4.5 4.5L11.3 6.2L6.2 11.3Z" fill="#3b84c8" /><path d="M18 14L23.3 8.7" fill="none" stroke="#e32828" stroke-width="2.2" /><path d="M27.5 4.5L25.8 11.3L20.7 6.2Z" fill="#e32828" /><path d="M14 18L8.7 23.3" fill="none" stroke="#e32828" stroke-width="2.2" /><path d="M4.5 27.5L6.2 20.7L11.3 25.8Z" fill="#e32828" /><path d="M18 18L23.3 23.3" fill="none" stroke="#3b84c8" stroke-width="2.2" /><path d="M27.5 27.5L20.7 25.8L25.8 20.7Z" fill="#3b84c8" /></svg></div><div class="rb" style="left:203.0px;top:44px;width:35px;height:34px"><svg class="a" style="left:1.0px;top:1px" width="32" height="32" viewBox="0 0 32 32"><path d="M10 28c-2-4-6-8-7-11 1-2 3-1 5 2V7c0-2 3-2 3 0v7V5c0-2 3-2 3 0v9V6c0-2 3-2 3 0v9V9c0-2 3-2 3 0v11c0 4-2 6-3 8z" fill="#3b84c8" /></svg></div><div class="rb" style="left:240.5px;top:44px;width:35px;height:34px"><svg class="a" style="left:1.0px;top:1px" width="32" height="32" viewBox="0 0 32 32"><path d="M4 28L14 17" fill="none" stroke="#3b84c8" stroke-width="3.2" /><circle cx="19" cy="11" r="8" fill="#f4f4f4" stroke="#3b84c8" stroke-width="1.6"/><rect x="13.5" y="9.5" width="11" height="3" fill="#e32828"/><rect x="17.5" y="5.5" width="3" height="11" fill="#e32828"/></svg></div><div class="rb" style="left:278.0px;top:44px;width:35px;height:34px"><svg class="a" style="left:1.0px;top:1px" width="32" height="32" viewBox="0 0 32 32"><path d="M28 28L18 17" fill="none" stroke="#e32828" stroke-width="3.2" /><circle cx="13" cy="11" r="8" fill="#f4f4f4" stroke="#e32828" stroke-width="1.6"/><g transform="rotate(-25 13 11)"><rect x="7" y="9.5" width="12" height="3.2" fill="#3b84c8"/></g></svg></div><div class="rb" style="left:315.5px;top:44px;width:35px;height:34px"><svg class="a" style="left:1.0px;top:1px" width="32" height="32" viewBox="0 0 32 32"><path d="M3 11l9-7v4h9c5 0 7 3 7 8v11h-6V17c0-2-1-3-3-3h-7v4z" fill="#3b84c8" /></svg></div><div class="rb" style="left:353.0px;top:44px;width:35px;height:34px"><svg class="a" style="left:1.0px;top:1px" width="32" height="32" viewBox="0 0 32 32"><rect x="5" y="6" width="22" height="8" fill="#e32828" rx="4"/><circle cx="23" cy="10" r="5" fill="#3b84c8"/><rect x="5" y="18" width="22" height="8" fill="#e32828" rx="4"/><circle cx="9" cy="22" r="5" fill="#3b84c8"/></svg></div><div class="rb" style="left:390.5px;top:44px;width:35px;height:34px"><svg class="a" style="left:1.0px;top:1px" width="32" height="32" viewBox="0 0 32 32"><path d="M26 4v9h-9l3.5-3.5C16 6 8 9 8 16s7 11 12 9c3-1 5-3 6-6l3 1c-1 5-6 9-12 9C10 29 4 23 4 16 4 6 16 1 23 7z" fill="#3b84c8" /></svg></div><div class="rb" style="left:428.0px;top:44px;width:35px;height:34px"><svg class="a" style="left:1.0px;top:1px" width="32" height="32" viewBox="0 0 32 32"><rect x="9" y="3" width="14" height="8" fill="#f6f6f6" stroke="#9cc6ea" stroke-width="1.5"/><rect x="3" y="10" width="26" height="13" fill="#e32828" rx="2.5"/><rect x="8" y="11" width="16" height="5" fill="#3b84c8"/><rect x="9" y="19" width="14" height="10" fill="#f6f6f6" stroke="#ccc" stroke-width="1"/><rect x="9" y="19" width="14" height="1.5" fill="#a01818"/></svg></div><div class="rb" style="left:465.5px;top:44px;width:35px;height:34px"><svg class="a" style="left:1.0px;top:1px" width="32" height="32" viewBox="0 0 32 32"><rect x="4" y="4" width="15" height="15" fill="#3b84c8" rx="1.5"/><rect x="11" y="12" width="17" height="17" fill="#e32828" rx="1.5"/><path d="M10 8c8-3 13 2 12 9l3 0-5 6-5-6h3c1-4-3-7-8-5z" fill="#fff" /></svg></div><div class="rb" style="left:503.0px;top:44px;width:35px;height:34px"><svg class="a" style="left:1.0px;top:1px" width="32" height="32" viewBox="0 0 32 32"><path d="M25.1 12.7 L28.7 13.1 L28.7 18.9 L25.1 19.3 L24.7 20.1 L27.0 22.9 L22.9 27.0 L20.1 24.7 L19.3 25.1 L18.9 28.7 L13.1 28.7 L12.7 25.1 L11.9 24.7 L9.1 27.0 L5.0 22.9 L7.3 20.1 L6.9 19.3 L3.3 18.9 L3.3 13.1 L6.9 12.7 L7.3 11.9 L5.0 9.1 L9.1 5.0 L11.9 7.3 L12.7 6.9 L13.1 3.3 L18.9 3.3 L19.3 6.9 L20.1 7.3 L22.9 5.0 L27.0 9.1 L24.7 11.9Z" fill="#3b84c8" /><circle cx="16" cy="16" r="4.68" fill="#f0f0f0"/></svg></div><div class="rb" style="left:540.5px;top:44px;width:35px;height:34px"><svg class="a" style="left:1.0px;top:1px" width="32" height="32" viewBox="0 0 32 32"><path d="M16.0 4.0 L19.2 12.6 L28.4 13.0 L21.2 18.7 L23.6 27.5 L16.0 22.5 L8.4 27.5 L10.8 18.7 L3.6 13.0 L12.8 12.6Z" fill="#d8bc28" /></svg></div><div class="rb" style="left:578.0px;top:44px;width:35px;height:34px"><svg class="a" style="left:1.0px;top:1px" width="32" height="32" viewBox="0 0 32 32"><path d="M16 30C12 22 8 17 8 11a8 8 0 0 1 16 0c0 6-4 11-8 19z" fill="#d8202a" /><circle cx="16" cy="11" r="4" fill="#f4f4f4"/></svg></div><div class="rb" style="left:615.5px;top:44px;width:35px;height:34px"><svg class="a" style="left:1.0px;top:1px" width="32" height="32" viewBox="0 0 32 32"><rect x="4.5" y="4.5" width="10" height="10" fill="none" stroke="#3b84c8" stroke-width="1.8"/><rect x="18" y="4.5" width="10" height="10" fill="none" stroke="#e32828" stroke-width="1.8"/><rect x="4.5" y="18" width="10" height="10" fill="none" stroke="#e8503a" stroke-width="1.8"/><rect x="18" y="18" width="10" height="10" fill="none" stroke="#3b84c8" stroke-width="1.8"/></svg></div><div class="a" style="left:0;bottom:0;width:909px;height:12px;background:linear-gradient(to bottom,#f4f7fb 0,#f4f7fb 3px,#d3e0f0 3px,#d3e0f0 10px,#f4f7fb 10px,#f4f7fb 11px,#50506a 11px)"></div></div>
<svg class="a" style="left:13px;top:81px" width="883" height="670" viewBox="109 304 883 670"><rect x="109" y="304" width="883" height="670" fill="#000"/><path d="M109 783L330 555.5" stroke="#dc0014" stroke-width="1.15" fill="none" />
<path d="M300.0 586.0C305.0 580.9 322.4 563.3 330.0 555.5C337.6 547.7 338.8 546.1 345.5 539.0C352.2 531.9 362.2 521.8 370.5 512.8C378.8 503.8 387.2 493.8 395.5 485.0C403.8 476.2 412.2 467.0 420.5 460.0C428.8 453.0 437.2 448.3 445.5 442.8C453.8 437.2 460.1 431.7 470.5 426.5C480.9 421.3 495.5 415.9 508.0 411.5C520.5 407.1 532.2 402.5 545.5 400.0C558.8 397.5 577.4 396.9 588.0 396.5C598.6 396.1 600.3 396.2 609.0 397.5C617.7 398.8 629.4 401.1 640.0 404.0C650.6 406.9 661.7 410.8 672.5 415.0C683.3 419.2 694.6 423.2 705.0 429.0C715.4 434.8 725.8 442.5 735.0 450.0C744.2 457.5 751.7 465.4 760.0 474.0C768.3 482.6 776.7 491.5 785.0 501.5C793.3 511.5 801.2 522.1 810.0 534.0C818.8 545.9 828.8 561.2 837.5 572.8C846.2 584.3 857.9 598.4 862.0 603.5" stroke="#dc0014" stroke-width="1.15" fill="none" />
<path d="M837.5 572.75L967.7 736.5" stroke="#dc0014" stroke-width="1.15" fill="none" />
<path d="M271.75 613.75L477.5 856.25" stroke="#dc0014" stroke-width="1.15" fill="none" />
<path d="M460.0 835.6C462.9 839.0 470.8 849.3 477.5 856.2C484.2 863.2 491.2 871.0 500.0 877.5C508.8 884.0 520.0 890.2 530.0 895.0C540.0 899.8 549.6 903.3 560.0 906.2C570.4 909.2 580.8 912.1 592.5 912.5C604.2 912.9 619.6 910.6 630.0 908.8C640.4 906.9 646.9 904.2 655.0 901.2C663.1 898.3 671.2 895.2 678.8 891.2C686.2 887.3 691.5 884.4 700.0 877.5C708.5 870.6 725.0 854.6 730.0 850.0" stroke="#dc0014" stroke-width="1.15" fill="none" />
<path d="M730 850L860 727.5" stroke="#dc0014" stroke-width="1.15" fill="none" />
<path d="M445 817L455 808.75L515 757.5" stroke="#dc0014" stroke-width="1.15" fill="none" />
<path d="M505.0 766.0C506.7 764.6 511.7 760.2 515.0 757.5C518.3 754.8 521.7 751.5 525.0 749.5C528.3 747.5 530.8 745.8 535.0 745.5C539.2 745.2 545.0 746.5 550.0 747.5C555.0 748.5 562.5 750.7 565.0 751.3" stroke="#dc0014" stroke-width="1.15" fill="none" />
<path d="M550 747.5L580 755" stroke="#dc0014" stroke-width="1.15" fill="none" />
<path d="M494 604L665 635.8" stroke="#dc0014" stroke-width="1.15" fill="none" />
<path d="M650.0 633.0C652.5 633.5 660.7 634.8 665.0 635.8C669.3 636.8 672.7 637.5 676.0 639.0C679.3 640.5 682.3 642.8 685.0 645.0C687.7 647.2 689.5 649.5 692.0 652.5C694.5 655.5 698.7 661.2 700.0 663.0" stroke="#dc0014" stroke-width="1.15" fill="none" />
<path d="M692 652.5L795 785" stroke="#dc0014" stroke-width="1.15" fill="none" />
<path d="M519.3 616.7C517.6 616.2 512.9 613.7 509.6 613.8C506.3 614.0 502.0 616.7 499.4 617.6C496.8 618.4 495.8 618.9 494.0 619.0C492.1 619.1 490.1 618.7 488.4 618.0C486.7 617.3 485.1 616.1 483.8 614.7C482.6 613.3 481.6 611.6 481.1 609.8C480.5 608.0 480.4 606.0 480.6 604.2C480.9 602.4 481.6 600.5 482.6 598.9C483.6 597.4 485.1 595.9 486.6 595.0C488.2 594.0 490.1 593.3 491.9 593.1C493.7 592.9 495.8 593.1 497.5 593.6C499.3 594.2 500.1 594.9 502.4 596.5C504.6 598.0 508.0 601.9 511.1 602.9C514.2 604.0 519.5 602.8 521.2 602.8" stroke="#e4cc1c" stroke-width="1.15" fill="none" />
<path d="M558.1 743.9C559.7 744.5 564.4 747.1 567.7 747.1C571.1 747.2 575.6 744.9 578.2 744.2C580.8 743.5 581.7 743.0 583.5 743.0C585.3 743.0 587.2 743.4 588.8 744.2C590.4 744.9 591.9 746.1 593.1 747.5C594.2 748.8 595.1 750.6 595.6 752.3C596.0 754.0 596.1 755.9 595.8 757.7C595.5 759.4 594.7 761.2 593.7 762.7C592.7 764.1 591.3 765.4 589.8 766.3C588.2 767.2 586.3 767.8 584.6 768.0C582.8 768.1 580.9 767.8 579.2 767.2C577.6 766.6 576.9 765.9 574.7 764.3C572.4 762.8 569.0 759.1 565.8 758.0C562.6 756.9 557.4 757.7 555.7 757.7" stroke="#e4cc1c" stroke-width="1.15" fill="none" />
<path d="M835.8 738.5C837.3 737.6 842.4 735.8 844.4 733.2C846.5 730.6 846.9 725.6 848.0 723.0C849.0 720.4 849.4 719.3 850.7 717.8C851.9 716.4 853.6 715.1 855.3 714.3C857.0 713.5 859.1 713.0 861.0 713.0C862.9 713.0 865.0 713.5 866.7 714.3C868.4 715.1 870.1 716.4 871.3 717.8C872.6 719.3 873.5 721.2 874.0 723.0C874.5 724.8 874.6 727.0 874.3 728.8C874.0 730.7 873.1 732.7 872.1 734.2C871.0 735.8 869.4 737.2 867.8 738.2C866.1 739.1 864.9 739.4 862.2 739.9C859.5 740.5 854.4 740.1 851.5 741.6C848.6 743.2 845.9 748.0 844.8 749.2" stroke="#e4cc1c" stroke-width="1.15" fill="none" />
<path d="M605 398h8M609 394v8" stroke="#e4cc1c" stroke-width="1.2" fill="none" />
<path d="M547.5 614.5h8M551.5 610.5v8" stroke="#e4cc1c" stroke-width="1.2" fill="none" />
<path d="M546 748h8M550 744v8" stroke="#e4cc1c" stroke-width="1.2" fill="none" />
<path d="M473.5 857h8M477.5 853v8" stroke="#e4cc1c" stroke-width="1.2" fill="none" />
<path d="M588.5 913h8M592.5 909v8" stroke="#e4cc1c" stroke-width="1.2" fill="none" />
<path d="M674.75 891.25h8M678.75 887.25v8" stroke="#e4cc1c" stroke-width="1.2" fill="none" />
<path d="M451 808.5h8M455 804.5v8" stroke="#e4cc1c" stroke-width="1.2" fill="none" />
<circle cx="444.5" cy="817.5" r="12.5" fill="none" stroke="#20c020" stroke-width="1.3"/>
<path d="M279.5 614.5l7.5-6.5-2 11.5z" stroke="#20c020" stroke-width="1.1" fill="none" />
<path d="M342.0 548.0C341.1 550.0 340.1 555.7 336.8 560.0C333.4 564.3 327.6 568.2 322.0 574.0C316.4 579.8 307.7 589.7 303.0 595.0C298.3 600.3 296.0 602.2 294.0 606.0C292.0 609.8 290.8 613.4 291.0 618.0C291.2 622.6 294.8 631.1 295.5 633.8" stroke="#e4cc1c" stroke-width="1.15" fill="none" />
<path d="M259.2 635.0C260.2 634.4 262.9 632.2 265.0 631.5C267.1 630.8 269.6 630.4 271.8 630.5C273.9 630.6 275.9 631.0 278.0 632.0C280.1 633.0 283.2 635.8 284.2 636.5" stroke="#e4cc1c" stroke-width="1.15" fill="none" />
<path d="M421.8 782.5C423.6 783.8 429.0 788.1 433.0 790.0C437.0 791.9 441.2 793.5 445.5 793.8C449.8 794.0 454.6 792.8 459.0 791.5C463.4 790.2 469.6 787.1 471.8 786.2" stroke="#e4cc1c" stroke-width="1.15" fill="none" />
<path d="M408.0 783.8C409.0 785.6 411.9 790.6 414.0 795.0C416.1 799.4 419.0 805.5 420.5 810.0C422.0 814.5 421.1 817.8 423.0 822.0C424.9 826.2 428.0 832.0 432.0 835.0C436.0 838.0 442.0 838.2 447.0 840.0C452.0 841.8 457.2 842.7 462.0 846.0C466.8 849.3 473.7 857.7 476.0 860.0" stroke="#e4cc1c" stroke-width="1.15" fill="none" />
<path d="M480.5 795.0C479.2 796.3 475.1 800.1 473.0 803.0C470.9 805.9 469.2 809.3 468.0 812.5C466.8 815.7 466.2 818.2 466.0 822.0C465.8 825.8 465.8 830.7 467.0 835.0C468.2 839.3 472.0 845.8 473.0 848.0" stroke="#e4cc1c" stroke-width="1.15" fill="none" />
<path d="M790.0 766.0C791.3 766.8 795.1 770.1 798.0 770.5C800.9 770.9 805.9 768.8 807.5 768.5" stroke="#e4cc1c" stroke-width="1.15" fill="none" />
<path d="M782.5 776.0C782.8 777.5 784.4 782.0 784.0 785.0C783.6 788.0 780.7 792.3 780.0 793.8" stroke="#e4cc1c" stroke-width="1.15" fill="none" />
<path d="M589.5 777.0C589.8 782.5 590.9 797.8 591.5 810.0C592.1 822.2 593.1 838.3 593.0 850.0C592.9 861.7 591.4 872.3 591.0 880.0C590.6 887.7 590.8 893.5 590.8 896.2" stroke="#30c8d0" stroke-width="1.4" fill="none" />
<path d="M579.5 357.1L575.9 357.2L575.1 342.8L578.7 342.6" stroke="#dc0014" stroke-width="1.15" fill="none" />
<path d="M542.8 360.5L539.3 361.1L536.7 346.9L540.3 346.2" stroke="#dc0014" stroke-width="1.15" fill="none" />
<path d="M506.1 367.9L502.6 368.9L498.4 355.1L501.8 354.0" stroke="#dc0014" stroke-width="1.15" fill="none" />
<path d="M471.8 380.0L468.6 381.6L462.4 368.4L465.7 366.9" stroke="#dc0014" stroke-width="1.15" fill="none" />
<path d="M439.0 397.1L435.9 399.1L428.1 386.9L431.1 385.0" stroke="#dc0014" stroke-width="1.15" fill="none" />
<path d="M407.9 418.2L405.2 420.6L395.8 409.4L398.6 407.1" stroke="#dc0014" stroke-width="1.15" fill="none" />
<path d="M359.7 466.4L357.2 469.0L346.8 459.0L349.3 456.4" stroke="#dc0014" stroke-width="1.15" fill="none" />
<path d="M335.7 488.9L333.2 491.5L322.8 481.5L325.3 478.9" stroke="#dc0014" stroke-width="1.15" fill="none" />
<path d="M315.7 511.4L313.2 514.0L302.8 504.0L305.3 501.4" stroke="#dc0014" stroke-width="1.15" fill="none" />
<path d="M293.2 533.9L290.7 536.5L280.3 526.5L282.8 523.9" stroke="#dc0014" stroke-width="1.15" fill="none" />
<path d="M270.7 557.4L268.2 560.0L257.8 550.0L260.3 547.4" stroke="#dc0014" stroke-width="1.15" fill="none" />
<path d="M249.5 581.2L247.0 583.8L236.5 573.7L239.0 571.1" stroke="#dc0014" stroke-width="1.15" fill="none" />
<path d="M227.0 603.7L224.5 606.3L214.0 596.2L216.5 593.6" stroke="#dc0014" stroke-width="1.15" fill="none" />
<path d="M205.7 626.2L203.2 628.8L192.8 618.7L195.3 616.1" stroke="#dc0014" stroke-width="1.15" fill="none" />
<path d="M183.2 649.9L180.7 652.5L170.3 642.5L172.8 639.9" stroke="#dc0014" stroke-width="1.15" fill="none" />
<path d="M173.2 664.9L170.7 667.5L160.3 657.5L162.8 654.9" stroke="#dc0014" stroke-width="1.15" fill="none" />
<path d="M161.7 671.2L159.2 673.8L148.8 663.7L151.3 661.1" stroke="#dc0014" stroke-width="1.15" fill="none" />
<path d="M139.5 693.7L137.0 696.3L126.5 686.2L129.0 683.6" stroke="#dc0014" stroke-width="1.15" fill="none" />
<path d="M119.5 719.9L117.0 722.5L106.5 712.5L109.0 709.9" stroke="#dc0014" stroke-width="1.15" fill="none" />
<path d="M384.9 447.0L382.0 449.8L366.0 433.2L368.9 430.4" stroke="#dc0014" stroke-width="1.15" fill="none" />
<path d="M615.8 371.7L612.3 371.5L613.7 343.5L617.2 343.7" stroke="#e4cc1c" stroke-width="1.2" fill="none" />
<path d="M614.7 360.1L611.7 360.0L612.3 348.0L615.3 348.2" stroke="#dc0014" stroke-width="1.15" fill="none" />
<path d="M652.8 366.8L649.2 366.1L651.8 351.9L655.3 352.5" stroke="#dc0014" stroke-width="1.15" fill="none" />
<path d="M686.9 378.0L683.5 376.8L688.5 363.2L691.9 364.4" stroke="#dc0014" stroke-width="1.15" fill="none" />
<path d="M719.9 393.1L716.7 391.5L723.3 378.5L726.5 380.2" stroke="#dc0014" stroke-width="1.15" fill="none" />
<path d="M751.3 414.0L748.3 411.9L756.7 400.1L759.6 402.1" stroke="#dc0014" stroke-width="1.15" fill="none" />
<path d="M778.8 437.3L776.1 434.9L785.9 424.1L788.5 426.5" stroke="#dc0014" stroke-width="1.15" fill="none" />
<path d="M803.0 469.0L800.6 466.4L811.4 456.6L813.8 459.3" stroke="#dc0014" stroke-width="1.15" fill="none" />
<path d="M824.3 490.4L821.9 487.7L833.1 478.3L835.4 481.1" stroke="#dc0014" stroke-width="1.15" fill="none" />
<path d="M844.1 515.3L841.8 512.5L853.2 503.5L855.4 506.3" stroke="#dc0014" stroke-width="1.15" fill="none" />
<path d="M862.6 540.3L860.3 537.5L871.7 528.5L873.9 531.3" stroke="#dc0014" stroke-width="1.15" fill="none" />
<path d="M882.6 565.3L880.3 562.5L891.7 553.5L893.9 556.3" stroke="#dc0014" stroke-width="1.15" fill="none" />
<path d="M903.1 589.3L900.8 586.5L912.2 577.5L914.4 580.3" stroke="#dc0014" stroke-width="1.15" fill="none" />
<path d="M921.6 614.3L919.3 611.5L930.7 602.5L932.9 605.3" stroke="#dc0014" stroke-width="1.15" fill="none" />
<path d="M940.6 638.9L938.3 636.1L949.7 627.1L951.9 629.9" stroke="#dc0014" stroke-width="1.15" fill="none" />
<path d="M961.4 663.3L959.1 660.5L970.5 651.5L972.7 654.3" stroke="#dc0014" stroke-width="1.15" fill="none" />
<path d="M980.3 689.9L978.0 687.1L989.4 678.1L991.6 680.9" stroke="#dc0014" stroke-width="1.15" fill="none" />
<path d="M801 456l8 6-5 7-8-6z" stroke="#dc0014" stroke-width="1.1" fill="none" />
<path d="M505.4 563.9L501.8 563.4L503.6 550.6L507.2 551.1" stroke="#dc0014" stroke-width="1.15" fill="none" />
<path d="M529.9 570.0L526.4 569.4L528.6 556.6L532.2 557.2" stroke="#dc0014" stroke-width="1.15" fill="none" />
<path d="M592.4 580.0L588.9 579.4L591.1 566.6L594.7 567.2" stroke="#dc0014" stroke-width="1.15" fill="none" />
<path d="M623.2 587.7L619.6 587.0L622.4 574.2L625.9 575.0" stroke="#dc0014" stroke-width="1.15" fill="none" />
<path d="M655.2 593.5L651.6 592.8L654.4 580.0L657.9 580.8" stroke="#dc0014" stroke-width="1.15" fill="none" />
<path d="M673.5 600.1L670.0 599.3L673.6 584.7L677.1 585.6" stroke="#dc0014" stroke-width="1.15" fill="none" />
<path d="M695.9 604.0L692.6 602.6L697.4 590.6L700.8 591.9" stroke="#dc0014" stroke-width="1.15" fill="none" />
<path d="M718.9 631.1L716.4 628.6L725.6 619.4L728.1 621.9" stroke="#dc0014" stroke-width="1.15" fill="none" />
<path d="M728.8 639.9L726.5 637.2L736.5 628.8L738.8 631.6" stroke="#dc0014" stroke-width="1.15" fill="none" />
<path d="M750.1 664.8L747.9 662.0L758.1 654.0L760.3 656.8" stroke="#dc0014" stroke-width="1.15" fill="none" />
<path d="M769.1 689.4L766.9 686.6L777.1 678.6L779.3 681.4" stroke="#dc0014" stroke-width="1.15" fill="none" />
<path d="M789.9 714.2L787.7 711.4L797.9 703.4L800.1 706.2" stroke="#dc0014" stroke-width="1.15" fill="none" />
<path d="M808.8 740.4L806.6 737.6L816.8 729.6L819.0 732.4" stroke="#dc0014" stroke-width="1.15" fill="none" />
<path d="M560.4 587.8L557.0 587.4L561.0 558.6L564.5 559.1" stroke="#e4cc1c" stroke-width="1.2" fill="none" />
<path d="M560.1 576.4L557.2 575.9L558.8 564.1L561.8 564.5" stroke="#dc0014" stroke-width="1.15" fill="none" />
<path d="M260.9 660.2L263.3 662.9L252.7 672.1L250.4 669.4" stroke="#dc0014" stroke-width="1.15" fill="none" />
<path d="M282.2 685.2L284.5 687.9L274.0 697.1L271.6 694.4" stroke="#dc0014" stroke-width="1.15" fill="none" />
<path d="M302.2 710.2L304.5 712.9L294.0 722.1L291.6 719.4" stroke="#dc0014" stroke-width="1.15" fill="none" />
<path d="M323.4 733.9L325.8 736.7L315.2 745.8L312.9 743.1" stroke="#dc0014" stroke-width="1.15" fill="none" />
<path d="M342.2 757.7L344.5 760.4L334.0 769.6L331.6 766.9" stroke="#dc0014" stroke-width="1.15" fill="none" />
<path d="M362.2 782.7L364.5 785.4L354.0 794.6L351.6 791.9" stroke="#dc0014" stroke-width="1.15" fill="none" />
<path d="M383.4 806.4L385.8 809.2L375.2 818.3L372.9 815.6" stroke="#dc0014" stroke-width="1.15" fill="none" />
<path d="M402.9 830.7L405.3 833.4L394.7 842.6L392.4 839.9" stroke="#dc0014" stroke-width="1.15" fill="none" />
<path d="M423.4 855.2L425.8 857.9L415.2 867.1L412.9 864.4" stroke="#dc0014" stroke-width="1.15" fill="none" />
<path d="M472.9 907.7L475.3 910.4L464.7 919.6L462.4 916.9" stroke="#dc0014" stroke-width="1.15" fill="none" />
<path d="M449.4 875.7L452.0 878.8L440.0 889.2L437.3 886.2" stroke="#e4cc1c" stroke-width="1.15" fill="none" />
<path d="M448.4 877.8L450.4 880.0L443.6 886.0L441.6 883.7" stroke="#dc0014" stroke-width="1.15" fill="none" />
<path d="M886.0 756.8L888.6 754.4L898.2 764.6L895.5 767.1" stroke="#dc0014" stroke-width="1.15" fill="none" />
<path d="M868.2 772.9L870.8 770.5L880.4 780.7L877.7 783.2" stroke="#dc0014" stroke-width="1.15" fill="none" />
<path d="M845.6 795.3L848.2 792.9L857.8 803.1L855.1 805.6" stroke="#dc0014" stroke-width="1.15" fill="none" />
<path d="M823.0 816.3L825.6 813.9L835.2 824.1L832.5 826.6" stroke="#dc0014" stroke-width="1.15" fill="none" />
<path d="M798.6 837.3L801.2 834.9L810.8 845.1L808.1 847.6" stroke="#dc0014" stroke-width="1.15" fill="none" />
<path d="M776.2 860.1L778.8 857.7L788.4 867.9L785.7 870.4" stroke="#dc0014" stroke-width="1.15" fill="none" />
<path d="M750.4 881.1L753.0 878.7L762.6 888.9L759.9 891.4" stroke="#dc0014" stroke-width="1.15" fill="none" />
<path d="M730 897l10 9-6 7-10-9z" stroke="#dc0014" stroke-width="1.1" fill="none" />
<path d="M730.3 903.7L733.2 901.0L740.8 909.0L737.8 911.8" stroke="#dc0014" stroke-width="1.15" fill="none" />
<path d="M692.7 916.6L695.9 915.4L700.1 926.6L696.8 927.8" stroke="#e4cc1c" stroke-width="1.15" fill="none" />
<path d="M475.0 838.8L472.9 836.0L483.1 828.0L485.3 830.8" stroke="#e4cc1c" stroke-width="1.15" fill="none" />
<path d="M536 778l-4 16M540 776l-4 18M545 782l8 9M548 778l9 10M566 792l8 3-3 10-8-3z" stroke="#dc0014" stroke-width="1.2" fill="none" />
<path d="M546 776l-5 20" stroke="#e4cc1c" stroke-width="1.1" fill="none" />
<path d="M494.6 808.5L492.5 805.8L499.5 800.2L501.7 803.0" stroke="#dc0014" stroke-width="1.15" fill="none" />
<path d="M521.9 828.3L520.1 825.2L527.9 820.8L529.6 823.8" stroke="#dc0014" stroke-width="1.15" fill="none" />
<path d="M482.6 840.5L480.5 837.8L487.5 832.2L489.7 835.0" stroke="#dc0014" stroke-width="1.15" fill="none" />
<path d="M238 642l-6 3M236 648l4-8" stroke="#dc0014" stroke-width="1.1" fill="none" />
<path d="M828 757l6-2M830 760l3-7" stroke="#dc0014" stroke-width="1.1" fill="none" /></svg>
<div class="a" style="left:58px;top:102px;width:226.5px;height:73.5px;background:#8e8e8e;border-radius:2px;box-shadow:inset 0 0 0 1px #7a7a7a,inset 0 0 0 2px #9c9c9c,inset 0 0 0 3px #b4b4b4"></div>
<div class="a" style="left:62px;top:106px;width:218.5px;height:28px;background:#7e7e7e;border-radius:2px 2px 0 0"><div class="t" style="left:3px;top:6px;font-size:16.6px;font-weight:bold;color:#fff;letter-spacing:.62px">Design Quick Start</div><svg class="a" style="left:202px;top:9px" width="11" height="11"><path d="M1 1l9 9M10 1l-9 9" stroke="#fff" stroke-width="1.8"/></svg></div>
<div class="a" style="left:62px;top:134px;width:218.5px;height:39px;background:#f0f0f0;border-radius:0 0 2px 2px"></div>
<div class="a" style="left:64.5px;top:136px;width:35px;height:34.5px;background:#cfe2f6;border:1.5px solid #3a8ee0"></div>
<svg class="ic" style="left:66.0px;top:137.5px;width:31px;height:31px" viewBox="0 0 32 32"><path d="M3 26L13 5h9l5 21z" fill="#4a4a52" /><path d="M3 26L13 5h2L7 26z" fill="#3aa745" /><path d="M22 5l5 21h-3L20 5z" fill="#3aa745" /><path d="M16 7h2l1 17h-4z" fill="#888" /><path d="M3 26h24v3H3z" fill="#9a9a9a" /></svg>
<svg class="ic" style="left:101.5px;top:137.5px;width:31px;height:31px" viewBox="0 0 32 32"><path d="M3 27L13 5h8l8 22z" fill="#50525a" /><path d="M16 7h2l2 18h-5z" fill="#7a7c84" /><path d="M3 27h26v2H3z" fill="#8a8a8a" /></svg>
<svg class="ic" style="left:136.5px;top:137.5px;width:31px;height:31px" viewBox="0 0 32 32"><path d="M3 14c8 0 12-3 12-10l12 2c1 10-4 18-14 24z" fill="#8a8a8a" /><path d="M4 15c9 0 13-4 13-10M9 24c8-3 13-9 13-17" fill="none" stroke="#58c030" stroke-width="2.4" /><path d="M6 20c8-1 13-7 13-15" fill="none" stroke="#ddd" stroke-width="2" /></svg>
<svg class="ic" style="left:172.0px;top:137.5px;width:31px;height:31px" viewBox="0 0 32 32"><path d="M2 18L22 3l6 22z" fill="#267a6c" /><path d="M2 18l26 7v3L2 21z" fill="#8a8a8a" /></svg>
<svg class="ic" style="left:211.5px;top:137.5px;width:31px;height:31px" viewBox="0 0 32 32"><path d="M2 26L13 4h4l-3 22z" fill="#267a6c" /><path d="M15 26l3-22h3l8 22z" fill="#267a6c" /><path d="M14 26l3-22h1l-3 22z" fill="#aaa" /><path d="M2 26h27v2H2z" fill="#8a8a8a" /></svg>
<svg class="ic" style="left:248.5px;top:139.5px;width:27px;height:27px" viewBox="0 0 32 32"><text x="16" y="29" font-family="Liberation Sans" font-size="32" font-weight="bold" font-style="normal" fill="#d01010" text-anchor="middle">?</text></svg>
<div class="dd" style="left:200px;top:163px"></div>
<div class="a" style="left:78.5px;top:200px;width:99.5px;height:24.5px;background:#f9f9f0;box-shadow:inset -1px -1px #c4c4b4"><div class="t" style="left:4.5px;top:5.2px;font-size:16.7px;color:#222">Urban Road</div></div>
<svg class="a" style="left:74px;top:167px" width="44" height="62" viewBox="0 0 44 62"><path d="M6.3 3.5L6 57L16 45L24.5 58.5L31 55.5L22.5 35L34 32.5Z" fill="#fff" stroke="#111" stroke-width="1.7" stroke-linejoin="miter"/><circle cx="6.4" cy="3" r="2.1" fill="#111"/></svg>
<div class="a" style="left:20px;top:488px;width:94.5px;height:233.5px;background:#f0f0f0"><div class="a" style="left:0;top:0;width:94.5px;height:38px;background:#fbfbfb"></div><div class="a" style="left:69px;top:8.5px;width:25px;height:25px;background:#dedede"></div><div class="t" style="left:10.5px;top:12px;font-size:14.3px;color:#9ea2a8">Recalc</div>
<div class="t" style="left:3px;top:44.0px;font-size:15px;color:#111">Auto</div>
<div class="a" style="left:72px;top:47.0px;width:0;height:0;border-left:5px solid #111;border-top:4.5px solid transparent;border-bottom:4.5px solid transparent"></div>
<div class="t" style="left:3px;top:65.2px;font-size:15px;color:#111">Edit func</div>
<div class="a" style="left:72px;top:68.2px;width:0;height:0;border-left:5px solid #111;border-top:4.5px solid transparent;border-bottom:4.5px solid transparent"></div>
<div class="t" style="left:3px;top:86.4px;font-size:15px;color:#111">Edit data</div>
<div class="t" style="left:3px;top:107.6px;font-size:15px;color:#111">Recalc</div>
<div class="a" style="left:72px;top:110.6px;width:0;height:0;border-left:5px solid #111;border-top:4.5px solid transparent;border-bottom:4.5px solid transparent"></div>
<div class="t" style="left:3px;top:128.8px;font-size:15px;color:#111">Recalc all</div>
<div class="t" style="left:3px;top:150.0px;font-size:15px;color:#111">User</div>
<div class="a" style="left:72px;top:153.0px;width:0;height:0;border-left:5px solid #111;border-top:4.5px solid transparent;border-bottom:4.5px solid transparent"></div>
<div class="t" style="left:3px;top:192.4px;font-size:15px;color:#111">Edit chain</div>
<div class="a" style="left:72px;top:195.4px;width:0;height:0;border-left:5px solid #111;border-top:4.5px solid transparent;border-bottom:4.5px solid transparent"></div>
<div class="t" style="left:3px;top:213.6px;font-size:15px;color:#111">Run chain</div>
<div class="a" style="left:72px;top:216.6px;width:0;height:0;border-left:5px solid #111;border-top:4.5px solid transparent;border-bottom:4.5px solid transparent"></div>
</div>
</div>
<div class="a" style="left:1848px;top:223px;width:21px;height:746px;background:#f0f0f0"></div>
<div class="a" style="left:1850px;top:244px;width:17px;height:644px;background:#cdcdcd"></div>
<svg class="a" style="left:1851px;top:228px" width="15" height="12"><path d="M2.5 9l5-5 5 5" fill="none" stroke="#5a5f5f" stroke-width="2.6"/></svg>
<svg class="a" style="left:1851px;top:952px" width="15" height="12"><path d="M2.5 3l5 5 5-5" fill="none" stroke="#5a5f5f" stroke-width="2.6"/></svg>
<div class="a" style="left:96px;top:969px;width:1773px;height:22px;background:#f0f0f0"></div>
<div class="a" style="left:117.5px;top:971px;width:1643.5px;height:18px;background:#cdcdcd"></div>
<svg class="a" style="left:100px;top:972px" width="12" height="15"><path d="M9 2.5l-5 5 5 5" fill="none" stroke="#5a5f5f" stroke-width="2.6"/></svg>
<svg class="a" style="left:1830px;top:972px" width="12" height="15"><path d="M3 2.5l5 5-5 5" fill="none" stroke="#5a5f5f" stroke-width="2.6"/></svg>
<div class="a" style="left:93px;top:995px;width:1782px;height:82px;background:#f3f3f3"></div>
<div class="a" style="left:93px;top:1024px;width:1152px;height:27px;background:#ececec"></div>
<svg class="a" style="left:97.5px;top:998px" width="20" height="20" viewBox="0 0 32 32"><rect x="1" y="1" width="30" height="30" fill="#dfe8f0" stroke="#d83030" stroke-width="2.4"/><circle cx="14" cy="13" r="8" fill="#f4f4f4"/><path d="M6 6l4 4M22 5l3 5M8 20l4-5" fill="none" stroke="#8ab" stroke-width="2" /><circle cx="7" cy="10" r="2" fill="#335"/><circle cx="24" cy="14" r="2" fill="#335"/><path d="M7 26h6M10 23v6" fill="none" stroke="#2a8a2a" stroke-width="2.4" /><path d="M22 26h6" fill="none" stroke="#d02020" stroke-width="2.4" /><path d="M16 8l6 4-6 6z" fill="#bcd" /></svg>
<div class="t" style="left:120.5px;top:1000.5px;font-size:16.8px;color:#a0a0a0">SURVEY</div>
<div class="a" style="left:200px;top:995px;width:105.5px;height:27.5px;background:#f3f3f3;box-shadow:inset -1px -1px #4a4a4a,inset -2px -2px #a0a0a0,inset 1px 0 #fff"></div>
<svg class="a" style="left:203.5px;top:998px" width="20" height="20" viewBox="0 0 32 32"><rect x="1" y="1" width="30" height="30" fill="#dfe8f0" stroke="#d83030" stroke-width="2.4"/><circle cx="14" cy="13" r="8" fill="#f4f4f4"/><path d="M6 6l4 4M22 5l3 5M8 20l4-5" fill="none" stroke="#8ab" stroke-width="2" /><circle cx="7" cy="10" r="2" fill="#335"/><circle cx="24" cy="14" r="2" fill="#335"/><path d="M7 26h6M10 23v6" fill="none" stroke="#2a8a2a" stroke-width="2.4" /><path d="M22 26h6" fill="none" stroke="#d02020" stroke-width="2.4" /><path d="M16 8l6 4-6 6z" fill="#bcd" /></svg>
<div class="t" style="left:226.5px;top:1000.5px;font-size:17px;font-weight:bold;color:#111;letter-spacing:.85px">DESIGN</div>
<svg class="a" style="left:311px;top:998px" width="20" height="20" viewBox="0 0 32 32"><rect x="1" y="1" width="30" height="30" fill="#e8eef4" stroke="#3aa83a" stroke-width="2.4"/><path d="M3 8c5-4 8 4 13 0s8-4 13 0v5H3z" fill="#f4f4f4" /><path d="M3 9c5-4 8 4 13 0s8-4 13 0" fill="none" stroke="#c03030" stroke-width="2.2" /><path d="M3 15c5-4 8 4 13 0s8-4 13 0" fill="none" stroke="#6fa8dc" stroke-width="3" /><path d="M3 21c5-4 8 4 13 0s8-4 13 0" fill="none" stroke="#9cc6ea" stroke-width="3" /><path d="M3 26c5-4 8 4 13 0s8-4 13 0" fill="none" stroke="#a84040" stroke-width="2" /><rect x="22" y="24" width="7" height="5" fill="#9ad0b0"/></svg>
<div class="t" style="left:334px;top:1000.5px;font-size:16.8px;color:#a0a0a0">LS</div>
<svg class="a" style="left:367.5px;top:998px" width="20" height="20" viewBox="0 0 32 32"><rect x="1" y="1" width="30" height="30" fill="#e8eef4" stroke="#3aa83a" stroke-width="2.4"/><path d="M3 8c5-4 8 4 13 0s8-4 13 0v5H3z" fill="#f4f4f4" /><path d="M3 9c5-4 8 4 13 0s8-4 13 0" fill="none" stroke="#c03030" stroke-width="2.2" /><path d="M3 15c5-4 8 4 13 0s8-4 13 0" fill="none" stroke="#6fa8dc" stroke-width="3" /><path d="M3 21c5-4 8 4 13 0s8-4 13 0" fill="none" stroke="#9cc6ea" stroke-width="3" /><path d="M3 26c5-4 8 4 13 0s8-4 13 0" fill="none" stroke="#a84040" stroke-width="2" /><rect x="22" y="24" width="7" height="5" fill="#9ad0b0"/></svg>
<div class="t" style="left:390.5px;top:1000.5px;font-size:16.8px;color:#a0a0a0">XS</div>
<svg class="a" style="left:425px;top:998px" width="20" height="20" viewBox="0 0 32 32"><rect x="1" y="1" width="30" height="30" fill="#e4ecf6" stroke="#2b5fa8" stroke-width="2.4"/><path d="M3 29L28 3M3 29l13-18M3 29l20-9" fill="none" stroke="#2b5fa8" stroke-width="2" /><path d="M16 11l12-8-5 17z" fill="#c8d8ec" /></svg>
<div class="t" style="left:448px;top:1000.5px;font-size:16.8px;color:#a0a0a0">3D</div>
<svg class="a" style="left:482.5px;top:998px" width="20" height="20" viewBox="0 0 32 32"><rect x="1" y="1" width="30" height="30" fill="#dfe8f0" stroke="#d83030" stroke-width="2.4"/><circle cx="14" cy="13" r="8" fill="#f4f4f4"/><path d="M6 6l4 4M22 5l3 5M8 20l4-5" fill="none" stroke="#8ab" stroke-width="2" /><circle cx="7" cy="10" r="2" fill="#335"/><circle cx="24" cy="14" r="2" fill="#335"/><path d="M7 26h6M10 23v6" fill="none" stroke="#2a8a2a" stroke-width="2.4" /><path d="M22 26h6" fill="none" stroke="#d02020" stroke-width="2.4" /><path d="M16 8l6 4-6 6z" fill="#bcd" /></svg>
<div class="t" style="left:505.5px;top:1000.5px;font-size:16.8px;color:#a0a0a0">1</div>
<div class="a" style="left:361.5px;top:999px;width:1px;height:18px;background:#a8a8a8"></div>
<div class="a" style="left:419px;top:999px;width:1px;height:18px;background:#a8a8a8"></div>
<div class="a" style="left:476.5px;top:999px;width:1px;height:18px;background:#a8a8a8"></div>
<div class="a" style="left:521.5px;top:999px;width:1px;height:18px;background:#a8a8a8"></div>
<svg class="a" style="left:1832px;top:1003px" width="36" height="14"><path d="M10 2v10L3.5 7z" fill="none" stroke="#333" stroke-width="1.1"/><path d="M25 2v10l6.5-5z" fill="none" stroke="#333" stroke-width="1.1"/></svg>
<div class="a" style="left:1245px;top:1027px;width:485px;height:22.5px;background:#f2f2f2;box-shadow:inset 0 0 0 1px #a6a6a6;border:0"></div>
<div class="a" style="left:1733px;top:1027px;width:33px;height:22.5px;background:#f2f2f2;box-shadow:inset 0 0 0 1px #a6a6a6;border:0"><div class="t" style="left:0;width:33px;text-align:center;top:4.5px;font-size:13.6px;color:#8a8a8a">CAP</div></div>
<div class="a" style="left:1769.5px;top:1027px;width:38.5px;height:22.5px;background:#f2f2f2;box-shadow:inset 0 0 0 1px #a6a6a6;border:0"><div class="t" style="left:0;width:38.5px;text-align:center;top:4.5px;font-size:13.6px;color:#111">NUM</div></div>
<div class="a" style="left:1811.5px;top:1027px;width:38.5px;height:22.5px;background:#f2f2f2;box-shadow:inset 0 0 0 1px #a6a6a6;border:0"><div class="t" style="left:0;width:38.5px;text-align:center;top:4.5px;font-size:13.6px;color:#8a8a8a">SCRL</div></div>
<div class="a" style="left:1853px;top:1027px;width:22px;height:22.5px;background:#f2f2f2;box-shadow:inset 0 0 0 1px #a6a6a6;border:0"></div>
<div class="a" style="left:95px;top:1053px;width:171px;height:27px;border:1px solid #a8a8a8;border-bottom:0"><div class="t" style="left:6px;top:5px;font-size:16.2px;color:#808080">Output Window</div></div>
<div class="a" style="left:284px;top:1053px;width:194.5px;height:27px;border:1px solid #a8a8a8;border-bottom:0"><div class="t" style="left:5.5px;top:5px;font-size:16.7px;color:#808080">Background tasks</div></div>
<div class="a" style="left:0;top:1077.5px;width:1920px;height:2.5px;background:#1d4c55"></div>
<div class="a" style="left:0;top:1077.5px;width:684px;height:2.5px;background:#25303c"></div>
<div class="a" style="left:684px;top:1077.5px;width:58px;height:2.5px;background:#0a5fb8"></div>
</body></html>
